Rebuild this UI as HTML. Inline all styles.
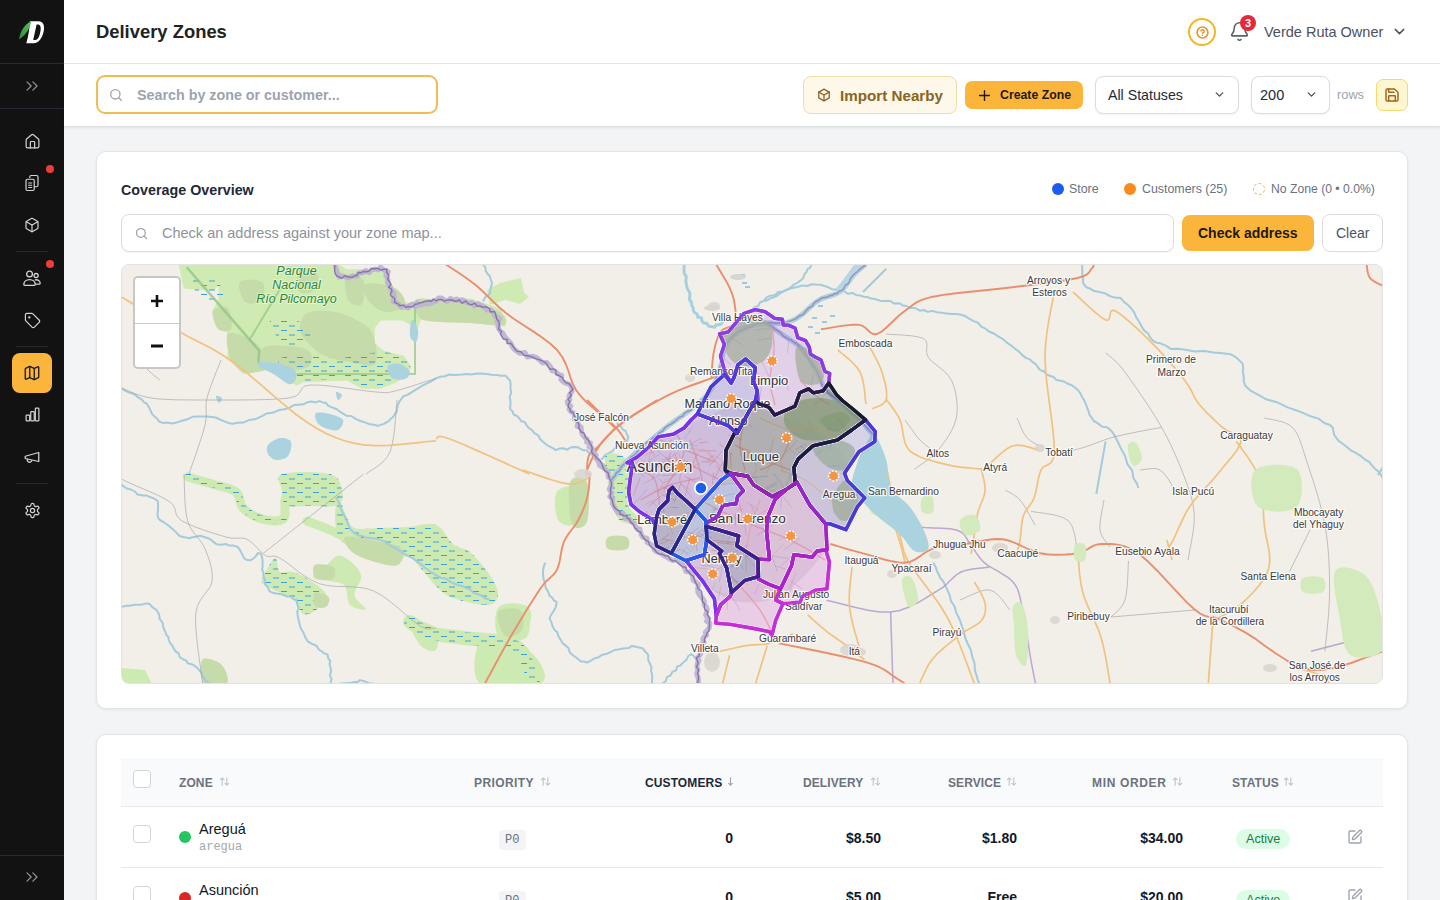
<!DOCTYPE html>
<html><head><meta charset="utf-8">
<style>
*{box-sizing:border-box;margin:0;padding:0}
html,body{width:1440px;height:900px;overflow:hidden}
body{background:#f3f4f6;font-family:"Liberation Sans",sans-serif;color:#111827;position:relative}
.abs{position:absolute}
#sb{left:0;top:0;width:64px;height:900px;background:#121212}
#sb .ln{position:absolute;left:0;width:64px;height:1px;background:#262b33}
#sb .sep{position:absolute;left:16px;width:32px;height:1px;background:#2a2a2a}
#sb svg{position:absolute}
#sb .dot{position:absolute;width:8px;height:8px;border-radius:50%;background:#ef3b3b}
#hdr{left:64px;top:0;width:1376px;height:64px;background:#fff;border-bottom:1px solid #e5e7eb}
#tb{left:64px;top:64px;width:1376px;height:63px;background:#fff;box-shadow:0 1px 3px rgba(0,0,0,.08);border-bottom:1px solid #dedfe2}
.t{position:absolute;white-space:nowrap;line-height:1}
.card{position:absolute;left:96px;width:1312px;background:#fff;border:1px solid #e3e5e9;border-radius:10px;box-shadow:0 1px 3px rgba(0,0,0,.07)}
.th{position:absolute;top:776.5px;font-weight:bold;font-size:12px;letter-spacing:.1px;color:#6b7280;line-height:12px}
.srt{position:absolute;top:775px}
.cb{position:absolute;left:133px;width:18px;height:18px;border:1px solid #d1d5db;border-radius:4px;background:#fff}
.num{position:absolute;font-weight:bold;font-size:14px;color:#111827;text-align:right;line-height:14px}
</style></head>
<body>
<!-- SIDEBAR -->
<div id="sb" class="abs">
  <svg style="left:17px;top:19px" width="30" height="28" viewBox="0 0 30 28">
    <defs><linearGradient id="lf" x1="0" y1="1" x2="1" y2="0"><stop offset="0" stop-color="#2e8b3a"/><stop offset="1" stop-color="#5cc060"/></linearGradient></defs>
    <path d="M13,2.3 L21.5,2.3 C26,2.3 27.6,6 26.9,11 C26,18 22,24.3 16.5,24.3 L9.3,24.3 C11.5,17 12.5,9 13,2.3 Z M16.2,21 L19.6,5.6 L20.8,5.6 C23.4,5.6 24,8.2 23.6,11 C23,16 21.3,21 18.2,21 Z" fill="#ffffff" fill-rule="evenodd"/>
    <path d="M2,20.5 C3,12.5 7.5,5 14.2,2.2 C13.2,8.5 9.5,15.5 2,20.5 Z" fill="url(#lf)"/>
  </svg>
  <div class="ln" style="top:63px"></div>
  <svg style="left:22px;top:76px" width="20" height="20" viewBox="0 0 24 24" fill="none" stroke="#8b93a1" stroke-width="1.5" stroke-linecap="round" stroke-linejoin="round"><path d="m6 17 5-5-5-5"/><path d="m13 17 5-5-5-5"/></svg>
  <div class="ln" style="top:108px"></div>

  <svg style="left:24px;top:133px" width="17" height="17" viewBox="0 0 24 24" fill="none" stroke="#d4d4d8" stroke-width="1.7" stroke-linecap="round" stroke-linejoin="round"><path d="M15 21v-8a1 1 0 0 0-1-1h-4a1 1 0 0 0-1 1v8"/><path d="M3 10a2 2 0 0 1 .709-1.528l7-5.999a2 2 0 0 1 2.582 0l7 5.999A2 2 0 0 1 21 10v9a2 2 0 0 1-2 2H5a2 2 0 0 1-2-2z"/></svg>
  <div class="dot" style="left:46px;top:165px"></div>
  <svg style="left:23px;top:174px" width="18" height="18" viewBox="0 0 24 24" fill="none" stroke="#d4d4d8" stroke-width="1.6" stroke-linecap="round" stroke-linejoin="round"><rect x="4" y="7" width="11" height="15" rx="2"/><path d="M9 4.5 V4 a2 2 0 0 1 2-2 h7 a2 2 0 0 1 2 2 v11 a2 2 0 0 1-2 2 h-3"/><path d="M7.5 12h4M7.5 15h4M7.5 18h4"/></svg>
  <svg style="left:24px;top:217px" width="16" height="16" viewBox="0 0 24 24" fill="none" stroke="#d4d4d8" stroke-width="1.8" stroke-linecap="round" stroke-linejoin="round"><path d="M21 8a2 2 0 0 0-1-1.73l-7-4a2 2 0 0 0-2 0l-7 4A2 2 0 0 0 3 8v8a2 2 0 0 0 1 1.73l7 4a2 2 0 0 0 2 0l7-4A2 2 0 0 0 21 16Z"/><path d="m3.3 7 8.7 5 8.7-5"/><path d="M12 22V12"/></svg>
  <div class="sep" style="top:251px"></div>
  <div class="dot" style="left:46px;top:260px"></div>
  <svg style="left:22px;top:269px" width="20" height="18" viewBox="0 0 24 22" fill="none" stroke="#d4d4d8" stroke-width="1.6" stroke-linecap="round" stroke-linejoin="round"><circle cx="9" cy="6" r="3.5"/><circle cx="17" cy="8" r="2.5"/><path d="M2 19c0-3.5 3-6 7-6s7 2.5 7 6c0 .8-.5 1-1 1H3c-.5 0-1-.2-1-1z"/><path d="M16 13.2c3-.5 6 1.3 6 4.3 0 .8-.5 1-1 1h-4"/></svg>
  <svg style="left:24px;top:312px" width="17" height="17" viewBox="0 0 24 24" fill="none" stroke="#d4d4d8" stroke-width="1.7" stroke-linecap="round" stroke-linejoin="round"><path d="M12.586 2.586A2 2 0 0 0 11.172 2H4a2 2 0 0 0-2 2v7.172a2 2 0 0 0 .586 1.414l8.704 8.704a2.426 2.426 0 0 0 3.42 0l6.58-6.58a2.426 2.426 0 0 0 0-3.42z"/><circle cx="7.5" cy="7.5" r=".8" fill="#d4d4d8"/></svg>
  <div class="sep" style="top:346px"></div>
  <div style="position:absolute;left:12px;top:353px;width:40px;height:40px;border-radius:8px;background:#fbb53b"></div>
  <svg style="left:23px;top:364px" width="18" height="18" viewBox="0 0 24 24" fill="none" stroke="#1f1f1f" stroke-width="1.8" stroke-linecap="round" stroke-linejoin="round"><path d="M14.106 5.553a2 2 0 0 0 1.788 0l3.659-1.83A1 1 0 0 1 21 4.619v12.764a1 1 0 0 1-.553.894l-4.553 2.277a2 2 0 0 1-1.788 0l-4.212-2.106a2 2 0 0 0-1.788 0l-3.659 1.83A1 1 0 0 1 3 19.381V6.618a1 1 0 0 1 .553-.894l4.553-2.277a2 2 0 0 1 1.788 0z"/><path d="M15 5.764v15"/><path d="M9 3.236v15"/></svg>
  <svg style="left:24px;top:406px" width="17" height="17" viewBox="0 0 24 24" fill="none" stroke="#d4d4d8" stroke-width="1.7" stroke-linecap="round" stroke-linejoin="round"><rect x="3" y="13" width="5" height="8" rx="1"/><rect x="9.5" y="8" width="5" height="13" rx="1"/><rect x="16" y="3" width="5" height="18" rx="1"/></svg>
  <svg style="left:23px;top:448px" width="18" height="18" viewBox="0 0 24 24" fill="none" stroke="#d4d4d8" stroke-width="1.7" stroke-linecap="round" stroke-linejoin="round"><path d="m3 11 18-5v12L3 14v-3z"/><path d="M11.6 16.8a3 3 0 1 1-5.8-1.6"/></svg>
  <div class="sep" style="top:483px"></div>
  <svg style="left:24px;top:502px" width="17" height="17" viewBox="0 0 24 24" fill="none" stroke="#d4d4d8" stroke-width="1.7" stroke-linecap="round" stroke-linejoin="round"><path d="M12.22 2h-.44a2 2 0 0 0-2 2v.18a2 2 0 0 1-1 1.730l-.43.25a2 2 0 0 1-2 0l-.15-.08a2 2 0 0 0-2.73.73l-.22.38a2 2 0 0 0 .73 2.73l.15.1a2 2 0 0 1 1 1.72v.51a2 2 0 0 1-1 1.74l-.15.09a2 2 0 0 0-.73 2.73l.22.38a2 2 0 0 0 2.73.73l.15-.08a2 2 0 0 1 2 0l.43.25a2 2 0 0 1 1 1.73V20a2 2 0 0 0 2 2h.44a2 2 0 0 0 2-2v-.18a2 2 0 0 1 1-1.73l.43-.25a2 2 0 0 1 2 0l.15.08a2 2 0 0 0 2.73-.73l.22-.39a2 2 0 0 0-.73-2.73l-.15-.08a2 2 0 0 1-1-1.74v-.5a2 2 0 0 1 1-1.74l.15-.09a2 2 0 0 0 .73-2.730l-.22-.38a2 2 0 0 0-2.73-.73l-.15.08a2 2 0 0 1-2 0l-.43-.25a2 2 0 0 1-1-1.73V4a2 2 0 0 0-2-2z"/><circle cx="12" cy="12" r="3"/></svg>
  <div class="ln" style="top:855px"></div>
  <svg style="left:22px;top:867px" width="20" height="20" viewBox="0 0 24 24" fill="none" stroke="#8b93a1" stroke-width="1.5" stroke-linecap="round" stroke-linejoin="round"><path d="m6 17 5-5-5-5"/><path d="m13 17 5-5-5-5"/></svg>
</div>
<!-- HEADER -->
<div id="hdr" class="abs"></div>
<div class="t" style="left:96px;top:23px;font-size:18.4px;font-weight:bold;color:#222">Delivery Zones</div>
<!-- TOOLBAR -->
<div id="tb" class="abs"></div>
<div class="abs" style="left:96px;top:75px;width:342px;height:39px;border:2px solid #f0bd55;border-radius:9px;background:#fff"></div>
<svg class="abs" style="left:108px;top:87px" width="16" height="16" viewBox="0 0 24 24" fill="none" stroke="#9ca3af" stroke-width="2" stroke-linecap="round" stroke-linejoin="round"><circle cx="11" cy="11" r="7"/><path d="m20 20-4-4"/></svg>
<div class="t" style="left:137px;top:88px;font-size:14.3px;font-weight:bold;color:#9ca3af">Search by zone or customer...</div>

<div class="abs" style="left:803px;top:76px;width:154px;height:38px;border:1px solid #f3dca6;border-radius:8px;background:#fef8eb"></div>
<svg class="abs" style="left:817px;top:88px" width="14" height="14" viewBox="0 0 24 24" fill="none" stroke="#8a6420" stroke-width="2.2" stroke-linecap="round" stroke-linejoin="round"><path d="M12 2 21 7v10l-9 5-9-5V7z"/><path d="m3 7 9 5 9-5"/><path d="M12 12v10"/></svg>
<div class="t" style="left:840px;top:87.5px;font-size:15.2px;font-weight:bold;color:#8a6420">Import Nearby</div>

<div class="abs" style="left:965px;top:81px;width:118px;height:28px;border-radius:7px;background:#fbb53b"></div>
<svg class="abs" style="left:978px;top:89px" width="13" height="13" viewBox="0 0 24 24" fill="none" stroke="#1f1a10" stroke-width="2.6" stroke-linecap="round"><path d="M12 3v18M3 12h18"/></svg>
<div class="t" style="left:1000px;top:89px;font-size:12.3px;font-weight:bold;color:#1f1a10">Create Zone</div>

<div class="abs" style="left:1095px;top:76px;width:144px;height:38px;border:1px solid #d9dce1;border-radius:8px;background:#fff;box-shadow:0 1px 2px rgba(0,0,0,.05)"></div>
<div class="t" style="left:1108px;top:88px;font-size:14.2px;color:#1f2937">All Statuses</div>
<svg class="abs" style="left:1213px;top:88px" width="13" height="13" viewBox="0 0 24 24" fill="none" stroke="#4b5563" stroke-width="2.6" stroke-linecap="round" stroke-linejoin="round"><path d="m6 9 6 6 6-6"/></svg>
<div class="abs" style="left:1251px;top:76px;width:79px;height:38px;border:1px solid #d9dce1;border-radius:8px;background:#fff;box-shadow:0 1px 2px rgba(0,0,0,.05)"></div>
<div class="t" style="left:1260px;top:88px;font-size:14.5px;color:#1f2937">200</div>
<svg class="abs" style="left:1305px;top:88px" width="13" height="13" viewBox="0 0 24 24" fill="none" stroke="#4b5563" stroke-width="2.6" stroke-linecap="round" stroke-linejoin="round"><path d="m6 9 6 6 6-6"/></svg>
<div class="t" style="left:1337px;top:89px;font-size:12.8px;color:#9ca3af">rows</div>
<div class="abs" style="left:1376px;top:79px;width:32px;height:32px;border:1px solid #f5d86e;border-radius:7px;background:#fef7d2"></div>
<svg class="abs" style="left:1384px;top:87px" width="16" height="16" viewBox="0 0 24 24" fill="none" stroke="#a0671c" stroke-width="2.2" stroke-linecap="round" stroke-linejoin="round"><path d="M15.2 3a2 2 0 0 1 1.4.6l3.8 3.8a2 2 0 0 1 .6 1.4V19a2 2 0 0 1-2 2H5a2 2 0 0 1-2-2V5a2 2 0 0 1 2-2z"/><path d="M17 21v-7a1 1 0 0 0-1-1H8a1 1 0 0 0-1 1v7"/><path d="M7 3v4a1 1 0 0 0 1 1h7"/></svg>

<div class="abs" style="left:1188px;top:18px;width:28px;height:28px;border:2px solid #f4b728;border-radius:50%"></div>
<svg class="abs" style="left:1195.5px;top:25.5px" width="13" height="13" viewBox="0 0 24 24" fill="none" stroke="#e3952a" stroke-width="2.9" stroke-linecap="round" stroke-linejoin="round"><circle cx="12" cy="12" r="10"/><path d="M9.09 9a3 3 0 0 1 5.83 1c0 2-3 3-3 3"/><path d="M12 17h.01"/></svg>
<svg class="abs" style="left:1229px;top:21px" width="21" height="21" viewBox="0 0 24 24" fill="none" stroke="#5b6170" stroke-width="1.8" stroke-linecap="round" stroke-linejoin="round"><path d="M10.268 21a2 2 0 0 0 3.464 0"/><path d="M3.262 15.326A1 1 0 0 0 4 17h16a1 1 0 0 0 .74-1.673C19.41 13.956 18 12.499 18 8A6 6 0 0 0 6 8c0 4.499-1.411 5.956-2.738 7.326"/></svg>
<div class="abs" style="left:1240px;top:15px;width:16px;height:16px;border-radius:50%;background:#e5283a;color:#fff;font-weight:bold;font-size:11px;line-height:16px;text-align:center">3</div>
<div class="t" style="left:1264px;top:24.8px;font-size:14.5px;color:#4b5160">Verde Ruta Owner</div>
<svg class="abs" style="left:1391px;top:23px" width="17" height="17" viewBox="0 0 24 24" fill="none" stroke="#4b5160" stroke-width="2" stroke-linecap="round" stroke-linejoin="round"><path d="m6 9 6 6 6-6"/></svg>

<div class="card" style="top:151px;height:558px"></div>
<div class="t" style="left:121px;top:183px;font-size:14.3px;font-weight:bold;color:#1f2937">Coverage Overview</div>
<div class="abs" style="left:1052px;top:183px;width:12px;height:12px;border-radius:50%;background:#1d5bf0"></div>
<div class="t" style="left:1069px;top:183px;font-size:12.4px;color:#6b7280">Store</div>
<div class="abs" style="left:1124px;top:183px;width:12px;height:12px;border-radius:50%;background:#f98a1c"></div>
<div class="t" style="left:1142px;top:183px;font-size:12.4px;color:#6b7280">Customers (25)</div>
<div class="abs" style="left:1253px;top:183px;width:12px;height:12px;border-radius:50%;border:1px dashed #f2b36b"></div>
<div class="t" style="left:1271px;top:183px;font-size:12.2px;color:#6b7280">No Zone (0 • 0.0%)</div>

<div class="abs" style="left:121px;top:214px;width:1053px;height:38px;border:1px solid #d9dce1;border-radius:8px;background:#fff;box-shadow:0 1px 2px rgba(0,0,0,.04)"></div>
<svg class="abs" style="left:134px;top:226px" width="15" height="15" viewBox="0 0 24 24" fill="none" stroke="#9ca3af" stroke-width="2" stroke-linecap="round" stroke-linejoin="round"><circle cx="11" cy="11" r="7"/><path d="m20 20-4-4"/></svg>
<div class="t" style="left:162px;top:226px;font-size:14.5px;color:#8d939c">Check an address against your zone map...</div>
<div class="abs" style="left:1182px;top:215px;width:132px;height:36px;border-radius:8px;background:#fbb53b"></div>
<div class="t" style="left:1198px;top:226px;font-size:14px;font-weight:bold;color:#1f1a10">Check address</div>
<div class="abs" style="left:1322px;top:214px;width:61px;height:38px;border:1px solid #d9dce1;border-radius:8px;background:#fff"></div>
<div class="t" style="left:1336px;top:226px;font-size:14px;color:#4b5563">Clear</div>
<div id="map" class="abs" style="left:121px;top:264px;width:1262px;height:420px;border-radius:8px;overflow:hidden;background:#f2efe9;border:1px solid #e2e2e2">
<svg width="1262" height="420" viewBox="121 264 1262 420" style="position:absolute;left:-1px;top:-1px;font-family:'Liberation Sans',sans-serif"><defs>
<pattern id="wet" width="16" height="9" patternUnits="userSpaceOnUse"><rect width="16" height="9" fill="#cdeab2"/><path d="M1 2h6M9 6.5h6" stroke="#3e9fd8" stroke-width="1.1"/></pattern>
<pattern id="wet2" width="16" height="9" patternUnits="userSpaceOnUse"><rect width="16" height="9" fill="#cdeab2" fill-opacity="0"/><path d="M1 2h6M9 6.5h6" stroke="#3e9fd8" stroke-width="1.1"/></pattern>
</defs><rect x="121" y="264" width="1262" height="420" fill="#f2efe9"/><path d="M180.0,264.0 L335.0,264.0 L346.7,270.7 L385.0,270.7 L390.0,284.0 L400.0,302.3 L420.0,307.3 L436.0,300.0 L470.0,300.0 L500.0,310.0 L504.0,325.0 L480.0,322.0 L440.0,320.0 L420.0,318.0 L416.7,327.3 L403.3,319.0 L380.0,319.0 L373.3,327.3 L373.3,344.0 L383.3,352.3 L403.3,357.3 L410.0,367.3 L396.7,380.7 L380.0,387.3 L363.3,387.3 L346.7,379.0 L303.3,380.7 L296.7,384.0 L283.3,374.0 L266.7,367.3 L256.7,370.7 L243.3,372.3 L228.3,357.3 L230.0,350.7 L228.3,330.7 L213.3,312.3 L220.0,300.0 L220.0,280.7 L213.3,289.0 L185.0,287.3Z" fill="#cfeab3" stroke="#cfeab3" stroke-width="3" stroke-linejoin="round"/><path d="M213.0,311.0 L214.5,309.4 L217.0,308.0 L220.0,307.1 L223.1,306.7 L226.0,306.9 L228.0,308.0 L229.4,310.4 L230.5,314.0 L231.2,318.3 L231.6,322.7 L231.6,326.4 L231.0,329.0 L229.7,330.4 L227.6,331.2 L225.0,331.4 L222.3,331.1 L219.9,330.3 L218.0,329.0 L216.5,326.9 L215.0,323.8 L213.8,320.2 L212.9,316.6 L212.6,313.3Z" fill="#c5dba9"/><path d="M228.0,334.0 L230.1,333.0 L233.3,333.0 L237.0,333.8 L241.0,335.1 L244.8,336.6 L248.0,338.0 L250.8,339.5 L253.4,341.2 L255.9,343.1 L258.2,345.3 L260.3,347.6 L262.0,350.0 L263.5,352.8 L264.9,356.1 L266.1,359.5 L266.9,362.8 L267.2,365.7 L267.0,368.0 L266.1,369.5 L264.6,370.5 L262.6,371.1 L260.4,371.5 L258.1,371.7 L256.0,372.0 L253.9,372.4 L251.8,372.9 L249.6,373.2 L247.4,373.3 L245.2,372.9 L243.0,372.0 L240.7,370.5 L238.3,368.4 L235.8,365.9 L233.5,363.1 L231.5,360.1 L230.0,357.0 L228.8,353.3 L227.7,348.9 L226.9,344.3 L226.6,340.0 L226.9,336.4Z" fill="#c5dba9"/><path d="M307.0,313.0 L310.5,311.8 L314.9,311.1 L319.9,310.8 L325.1,310.9 L330.3,311.3 L335.0,312.0 L339.5,313.0 L344.0,314.4 L348.4,316.1 L352.7,318.0 L356.6,320.0 L360.0,322.0 L363.0,323.8 L365.6,325.5 L367.9,327.3 L369.9,329.4 L371.6,331.9 L373.0,335.0 L374.3,339.3 L375.5,344.6 L376.4,350.4 L376.7,356.0 L376.4,360.8 L375.0,364.0 L372.4,365.5 L368.7,365.8 L364.2,365.2 L359.3,364.1 L354.5,362.9 L350.0,362.0 L345.7,361.3 L341.3,360.5 L336.9,359.6 L332.6,358.5 L328.6,357.3 L325.0,356.0 L321.9,354.5 L319.1,352.9 L316.6,351.1 L314.3,349.1 L312.1,347.1 L310.0,345.0 L307.8,342.8 L305.7,340.4 L303.6,337.9 L301.9,335.3 L300.6,332.7 L300.0,330.0 L299.9,327.1 L300.3,323.9 L301.1,320.6 L302.5,317.6 L304.4,314.9Z" fill="#c5dba9"/><path d="M263.0,348.0 L265.8,346.6 L270.0,345.8 L275.1,345.4 L280.4,345.4 L285.6,345.7 L290.0,346.0 L294.0,346.4 L298.0,347.1 L301.8,347.9 L305.2,349.0 L308.0,350.4 L310.0,352.0 L311.2,354.1 L311.7,356.8 L311.7,359.7 L311.0,362.6 L309.8,365.1 L308.0,367.0 L305.3,368.3 L301.7,369.1 L297.6,369.6 L293.1,369.9 L288.8,370.0 L285.0,370.0 L281.4,370.0 L277.8,370.0 L274.2,369.9 L271.0,369.4 L268.2,368.5 L266.0,367.0 L264.2,364.6 L262.7,361.2 L261.6,357.4 L261.2,353.7 L261.6,350.4Z" fill="#c5dba9"/><path d="M346.0,276.0 L347.9,274.8 L350.9,274.5 L354.4,275.0 L358.0,276.1 L361.0,277.9 L363.0,280.0 L364.0,283.2 L364.5,287.6 L364.4,292.5 L364.0,297.3 L363.1,301.4 L362.0,304.0 L360.3,305.2 L357.9,305.5 L355.1,305.0 L352.3,303.9 L349.8,302.1 L348.0,300.0 L346.8,296.8 L345.7,292.4 L345.1,287.5 L344.8,282.7 L345.1,278.6Z" fill="#c5dba9"/><path d="M365.0,284.0 L368.3,283.4 L373.3,283.4 L379.2,283.9 L385.3,285.0 L390.8,286.3 L395.0,288.0 L398.2,290.2 L400.9,293.1 L403.1,296.3 L404.6,299.6 L405.3,302.6 L405.0,305.0 L403.4,307.0 L400.4,308.8 L396.7,310.3 L392.6,311.4 L388.5,312.0 L385.0,312.0 L381.8,311.1 L378.6,309.6 L375.4,307.4 L372.5,305.0 L370.0,302.5 L368.0,300.0 L366.3,297.3 L364.7,294.2 L363.6,291.0 L363.0,288.0 L363.4,285.6Z" fill="#c5dba9"/><path d="M300.0,268.0 L302.4,267.2 L305.7,267.5 L309.5,268.5 L313.2,270.1 L316.2,272.0 L318.0,274.0 L318.5,276.5 L318.1,279.9 L317.0,283.5 L315.5,287.0 L313.7,290.0 L312.0,292.0 L309.9,293.1 L307.3,293.6 L304.5,293.5 L301.8,292.9 L299.5,291.7 L298.0,290.0 L297.2,287.2 L296.9,283.1 L297.0,278.5 L297.6,274.0 L298.6,270.3Z" fill="#c5dba9"/><path d="M415.0,300.0 L417.4,298.9 L420.9,298.6 L425.3,298.7 L430.2,299.1 L435.2,299.6 L440.0,300.0 L444.7,300.3 L449.6,300.6 L454.7,300.9 L459.8,301.4 L464.9,302.1 L470.0,303.0 L475.3,304.1 L481.0,305.4 L486.6,306.9 L491.9,308.5 L496.5,310.2 L500.0,312.0 L502.6,314.1 L504.7,316.6 L506.0,319.2 L506.4,321.6 L505.8,323.7 L504.0,325.0 L500.5,325.5 L495.3,325.4 L489.1,324.9 L482.4,324.1 L475.9,323.4 L470.0,323.0 L464.7,322.8 L459.3,322.7 L454.1,322.6 L449.1,322.5 L444.4,322.3 L440.0,322.0 L435.9,321.7 L432.0,321.4 L428.4,321.1 L425.2,320.5 L422.3,319.5 L420.0,318.0 L418.0,315.6 L416.1,312.4 L414.7,308.8 L413.9,305.2 L413.9,302.1Z" fill="#c5dba9"/><path d="M240.0,282.0 L242.4,280.6 L246.1,279.9 L250.7,279.6 L255.3,279.9 L259.3,280.7 L262.0,282.0 L263.5,284.1 L264.3,287.3 L264.4,290.9 L264.1,294.5 L263.2,297.7 L262.0,300.0 L260.0,301.5 L257.1,302.7 L253.8,303.4 L250.4,303.6 L247.3,303.1 L245.0,302.0 L243.2,299.7 L241.4,296.2 L240.1,292.1 L239.2,288.0 L239.1,284.4Z" fill="#c5dba9"/><path d="M278.0,360.0 L279.5,358.5 L282.1,357.4 L285.8,356.8 L290.1,356.4 L294.9,356.2 L300.0,356.0 L305.6,356.1 L312.0,356.5 L318.9,357.1 L326.0,357.7 L333.1,358.1 L340.0,358.0 L346.9,357.3 L354.0,356.2 L361.1,354.8 L367.9,353.5 L374.3,352.5 L380.0,352.0 L385.0,352.1 L389.5,352.7 L393.6,353.5 L397.1,354.6 L400.3,355.8 L403.0,357.0 L405.3,358.3 L407.3,359.8 L408.8,361.4 L409.8,363.2 L410.2,365.0 L410.0,367.0 L408.9,369.2 L407.0,371.7 L404.4,374.2 L401.6,376.8 L398.7,379.1 L396.0,381.0 L393.5,382.5 L390.9,383.8 L388.2,384.9 L385.5,385.7 L382.7,386.4 L380.0,387.0 L377.2,387.4 L374.4,387.7 L371.6,387.9 L368.7,387.8 L365.8,387.5 L363.0,387.0 L360.5,386.0 L358.3,384.6 L356.1,382.9 L353.6,381.2 L350.3,379.8 L346.0,379.0 L340.0,378.8 L332.5,379.1 L324.2,379.7 L316.1,380.3 L308.7,380.8 L303.0,381.0 L299.1,381.0 L296.4,380.9 L294.6,380.8 L293.1,380.3 L291.8,379.4 L290.0,378.0 L287.5,375.7 L284.7,372.6 L281.8,369.1 L279.4,365.5 L278.0,362.4Z" fill="url(#wet2)"/><path d="M190.0,280.0 L192.0,278.6 L195.9,277.8 L200.9,277.5 L206.3,277.8 L211.2,278.6 L215.0,280.0 L217.9,282.4 L220.6,285.9 L222.8,290.0 L224.4,294.1 L225.2,297.6 L225.0,300.0 L223.3,301.4 L220.4,302.2 L216.6,302.5 L212.4,302.2 L208.4,301.4 L205.0,300.0 L201.7,297.6 L198.1,294.1 L194.7,290.0 L191.9,285.9 L190.1,282.4Z" fill="url(#wet2)"/><path d="M270.0,320.0 L272.6,318.6 L277.4,318.1 L283.4,318.3 L289.8,319.1 L295.6,320.4 L300.0,322.0 L303.2,324.2 L306.1,327.3 L308.4,330.8 L310.0,334.4 L310.6,337.6 L310.0,340.0 L307.7,341.9 L303.9,343.7 L299.1,345.2 L293.9,346.0 L289.0,346.1 L285.0,345.0 L281.4,342.3 L277.6,337.9 L274.1,332.7 L271.3,327.4 L269.8,323.0Z" fill="url(#wet2)"/><path d="M186.7,267.3 L259.2,350.7 L258.3,364" stroke="#92c583" stroke-width="2.5" fill="none" opacity=".8"/><path d="M250,339 L280,289" stroke="#92c583" stroke-width="2" fill="none" opacity=".7"/><path d="M296.7,374 L415,374 L415,307.3" stroke="#92c583" stroke-width="2" fill="none" opacity=".7"/><path d="M258.3,362.3 L260.6,362.1 L264.0,362.2 L268.1,362.4 L272.4,362.8 L276.5,363.3 L280.0,364.0 L283.1,364.8 L286.1,365.7 L288.9,366.8 L291.4,368.0 L293.4,369.3 L295.0,370.7 L295.9,372.3 L296.4,374.0 L296.4,375.9 L296.1,377.7 L295.6,379.4 L295.0,380.7 L294.4,381.8 L293.6,382.8 L292.6,383.6 L291.4,384.1 L290.0,384.3 L288.3,384.0 L286.3,383.1 L283.9,381.5 L281.2,379.6 L278.5,377.6 L275.8,375.6 L273.3,374.0 L270.9,372.7 L268.3,371.5 L265.8,370.3 L263.5,369.3 L261.5,368.3 L260.0,367.3 L258.8,366.3 L257.7,365.3 L257.0,364.3 L256.7,363.4 L257.1,362.7Z" fill="#aad3df"/><path d="M388.0,366.0 L389.1,365.0 L390.9,364.2 L393.1,363.8 L395.6,363.6 L397.9,363.6 L400.0,364.0 L402.0,364.8 L404.0,366.0 L406.1,367.4 L407.9,369.0 L409.2,370.6 L410.0,372.0 L410.1,373.3 L409.7,374.7 L408.9,376.1 L407.8,377.3 L406.5,378.3 L405.0,379.0 L403.2,379.4 L400.9,379.7 L398.4,379.7 L396.0,379.4 L393.7,378.9 L392.0,378.0 L390.6,376.5 L389.4,374.4 L388.4,372.1 L387.8,369.7 L387.6,367.5Z" fill="#aad3df"/><path d="M268.0,445.0 L269.3,443.6 L271.1,442.1 L273.3,440.7 L275.6,439.4 L277.9,438.5 L280.0,438.0 L282.1,437.9 L284.3,438.1 L286.4,438.7 L288.4,439.5 L290.0,440.6 L291.0,442.0 L291.4,443.9 L291.4,446.3 L290.9,449.0 L290.2,451.7 L289.2,454.1 L288.0,456.0 L286.5,457.4 L284.5,458.4 L282.3,459.2 L280.0,459.8 L277.9,460.0 L276.0,460.0 L274.3,459.6 L272.7,458.9 L271.2,457.8 L269.9,456.6 L268.8,455.3 L268.0,454.0 L267.4,452.7 L267.0,451.1 L266.8,449.6 L266.8,448.0 L267.2,446.4Z" fill="#aad3df"/><path d="M316.0,413.0 L317.5,412.5 L319.6,412.4 L322.1,412.6 L324.9,412.9 L327.6,413.4 L330.0,414.0 L332.4,414.7 L335.1,415.5 L337.7,416.4 L340.0,417.5 L341.9,418.7 L343.0,420.0 L343.3,421.6 L343.0,423.5 L342.1,425.5 L340.9,427.4 L339.5,429.0 L338.0,430.0 L336.2,430.4 L334.1,430.4 L331.7,430.0 L329.3,429.4 L327.0,428.7 L325.0,428.0 L323.3,427.3 L321.7,426.4 L320.2,425.4 L319.0,424.4 L317.9,423.2 L317.0,422.0 L316.3,420.6 L315.6,418.9 L315.1,417.1 L315.0,415.4 L315.2,414.0Z" fill="#aad3df"/><path d="M412.0,320.0 L412.9,320.1 L414.0,321.3 L415.2,323.2 L416.4,325.6 L417.4,327.9 L418.0,330.0 L418.2,332.1 L418.1,334.5 L417.8,337.0 L417.3,339.3 L416.7,341.0 L416.0,342.0 L415.1,342.2 L414.0,341.7 L412.8,340.8 L411.6,339.4 L410.6,337.8 L410.0,336.0 L409.8,333.6 L409.9,330.4 L410.2,327.0 L410.7,323.8 L411.3,321.3Z" fill="#aad3df"/><path d="M336.0,392.0 L336.7,391.8 L337.8,392.1 L339.1,392.7 L340.4,393.4 L341.5,394.3 L342.0,395.0 L341.9,395.9 L341.3,397.0 L340.5,398.2 L339.6,399.2 L338.7,399.9 L338.0,400.0 L337.5,399.3 L336.9,397.9 L336.4,396.1 L336.0,394.3 L335.8,392.8Z" fill="#aad3df"/><path d="M216.0,396.0 L216.6,395.8 L217.7,395.9 L219.0,396.2 L220.3,396.8 L221.4,397.4 L222.0,398.0 L222.0,398.8 L221.7,399.9 L221.1,401.1 L220.3,402.1 L219.6,402.8 L219.0,403.0 L218.4,402.4 L217.7,401.2 L216.9,399.7 L216.3,398.1 L216.0,396.8Z" fill="#aad3df"/><path d="M487.0,290.0 L500.0,283.0 L521.0,278.0 L524.0,292.0 L529.0,297.0 L520.0,304.0 L505.0,300.0 L490.0,305.0Z" fill="#cfeab3"/><path d="M188.0,477.0 L190.6,477.7 L194.2,478.8 L198.5,480.0 L203.1,481.3 L207.7,482.7 L212.0,484.0 L216.2,485.2 L220.6,486.3 L225.1,487.4 L229.3,488.7 L233.0,490.2 L236.0,492.0 L238.0,494.3 L239.1,496.9 L239.8,499.8 L240.4,502.7 L241.3,505.5 L243.0,508.0 L245.4,510.2 L248.4,512.4 L251.6,514.5 L255.1,516.3 L258.6,517.9 L262.0,519.0 L265.6,519.9 L269.6,520.5 L273.6,520.9 L277.3,520.8 L280.6,520.2 L283.0,519.0 L284.4,516.9 L285.0,514.0 L285.0,510.5 L284.8,506.8 L284.7,503.2 L285.0,500.0 L285.7,497.0 L286.6,493.9 L287.6,490.8 L288.6,488.0 L289.4,485.7 L290.0,484.0" stroke="#cdeab2" stroke-width="9" fill="none" stroke-linecap="round" stroke-linejoin="round"/><path d="M282.0,474.0 L287.6,472.9 L295.8,472.2 L305.2,472.0 L314.9,472.2 L323.5,472.9 L330.0,474.0 L334.3,475.8 L337.3,478.2 L339.2,481.1 L340.5,484.1 L341.3,487.2 L342.0,490.0 L342.5,492.7 L342.7,495.6 L342.5,498.4 L341.7,501.1 L340.2,503.3 L338.0,505.0 L334.7,506.0 L330.3,506.4 L325.2,506.5 L319.9,506.3 L314.7,506.1 L310.0,506.0 L305.5,506.1 L301.0,506.3 L296.5,506.5 L292.4,506.4 L288.8,506.0 L286.0,505.0 L284.1,503.3 L283.0,501.1 L282.5,498.4 L282.3,495.6 L282.2,492.7 L282.0,490.0 L281.2,487.2 L279.9,484.1 L278.8,481.1 L278.3,478.2 L279.2,475.8Z" fill="#cdeab2"/><path d="M338.0,497.0 L339.0,497.7 L340.3,500.1 L341.7,503.8 L343.1,507.9 L344.6,511.8 L346.0,515.0 L347.1,517.6 L348.1,520.2 L349.0,522.6 L350.1,524.8 L351.7,526.6 L354.0,528.0 L357.0,528.8 L360.6,529.0 L364.6,528.9 L369.0,528.6 L373.5,528.2 L378.0,528.0 L382.7,527.9 L387.6,527.8 L392.8,527.6 L397.9,527.4 L403.0,527.2 L408.0,527.0 L412.9,526.5 L417.9,525.6 L422.8,524.8 L427.6,524.1 L432.0,524.1 L436.0,525.0 L439.5,527.1 L442.4,530.1 L445.1,533.8 L447.7,537.6 L450.2,541.2 L453.0,544.0 L455.9,545.9 L458.9,547.2 L461.8,548.2 L464.8,549.3 L467.9,550.7 L471.0,553.0 L474.4,556.2 L478.0,560.1 L481.7,564.4 L485.2,568.9 L488.4,573.2 L491.0,577.0 L493.1,580.4 L494.9,583.7 L496.4,586.9 L497.4,589.8 L498.0,592.5 L498.0,595.0 L497.6,597.3 L496.9,599.6 L495.6,601.6 L493.8,603.2 L491.3,604.4 L488.0,605.0 L483.4,604.9 L477.5,604.1 L470.9,602.9 L464.3,601.3 L458.1,599.7 L453.0,598.0 L449.1,596.3 L445.8,594.4 L443.1,592.4 L440.6,590.3 L438.3,588.2 L436.0,586.0 L433.8,583.8 L431.8,581.6 L429.9,579.2 L428.1,576.9 L426.2,574.5 L424.0,572.0 L421.5,569.2 L418.8,566.0 L416.0,562.7 L413.2,559.7 L410.5,557.4 L408.0,556.0 L405.9,556.0 L404.1,557.1 L402.4,558.9 L400.7,560.9 L398.6,562.4 L396.0,563.0 L392.8,562.6 L389.0,561.7 L384.9,560.4 L380.8,558.9 L376.7,557.3 L373.0,556.0 L369.5,554.9 L366.2,553.8 L362.9,552.7 L359.8,551.6 L356.8,550.3 L354.0,549.0 L351.3,547.6 L348.6,546.2 L346.1,544.8 L343.8,543.1 L341.8,541.2 L340.0,539.0 L338.6,536.4 L337.4,533.5 L336.4,530.3 L335.7,527.0 L335.3,523.5 L335.0,520.0 L335.0,515.9 L335.2,511.1 L335.7,506.2 L336.3,501.8 L337.1,498.5Z" fill="#cdeab2"/><path d="M307.0,521.0 L309.6,522.0 L313.2,523.4 L317.5,525.0 L322.0,526.7 L326.3,528.5 L330.0,530.0 L333.3,531.5 L336.4,533.0 L339.4,534.6 L342.1,536.0 L344.3,537.1 L346.0,538.0" stroke="#cdeab2" stroke-width="9" fill="none" stroke-linecap="round" stroke-linejoin="round"/><path d="M275.0,558.0 L276.1,558.5 L276.8,560.6 L277.3,563.7 L277.7,567.1 L278.5,570.1 L279.7,572.0 L281.4,572.7 L283.4,572.6 L285.7,572.1 L288.2,571.7 L290.9,571.5 L293.7,572.0 L296.9,573.3 L300.5,575.0 L304.4,577.1 L308.1,579.4 L311.7,581.6 L314.7,583.7 L317.4,585.6 L320.0,587.5 L322.4,589.4 L324.3,591.3 L325.7,593.2 L326.3,595.3 L326.0,597.6 L324.9,600.1 L323.2,602.7 L321.2,605.2 L319.1,607.5 L317.0,609.3 L314.9,610.8 L312.5,612.2 L310.0,613.4 L307.5,614.2 L305.1,614.4 L303.0,614.0 L301.4,612.7 L300.2,610.7 L299.2,608.2 L298.0,605.4 L296.3,602.5 L293.7,600.0 L289.8,597.6 L284.8,595.1 L279.3,592.6 L273.9,590.1 L269.2,587.9 L265.7,586.0 L263.5,584.6 L262.1,583.7 L261.4,582.9 L261.3,582.1 L261.6,580.9 L262.2,579.0 L263.5,575.9 L265.6,571.7 L268.1,567.2 L270.7,562.9 L273.1,559.6Z" fill="#cdeab2"/><path d="M314.7,572.0 L316.0,570.9 L317.7,569.8 L319.8,568.6 L322.0,567.5 L324.2,566.3 L326.3,565.0 L328.2,563.4 L330.1,561.5 L332.0,559.5 L333.9,557.7 L335.9,556.3 L338.0,555.7 L340.3,555.8 L342.7,556.6 L345.1,557.7 L347.6,559.2 L349.9,560.9 L352.0,562.7 L354.0,564.6 L356.1,566.7 L358.0,569.0 L359.6,571.4 L360.7,574.0 L361.3,576.7 L360.9,579.6 L359.5,582.7 L357.6,586.0 L355.9,589.3 L354.6,592.4 L354.3,595.3 L355.5,598.1 L357.9,601.0 L360.7,603.7 L363.5,606.2 L365.5,608.1 L366.0,609.3 L364.8,609.8 L362.2,609.7 L358.9,609.0 L355.3,608.0 L352.1,606.5 L349.7,604.7 L348.4,602.2 L347.6,599.0 L347.2,595.4 L346.8,591.7 L346.2,588.5 L345.0,586.0 L343.2,584.4 L341.1,583.3 L338.7,582.6 L336.2,582.2 L333.6,581.8 L331.0,581.3 L328.2,580.8 L325.1,580.5 L322.0,580.3 L319.0,580.0 L316.5,579.6 L314.7,579.0 L313.6,578.1 L313.1,577.0 L313.0,575.8 L313.2,574.5 L313.8,573.2Z" fill="#cdeab2"/><path d="M410.0,622.0 L412.0,623.3 L414.6,625.1 L417.8,627.2 L421.5,629.4 L425.6,631.4 L430.0,633.0 L435.0,634.2 L440.6,635.1 L446.6,635.9 L452.8,636.6 L459.0,637.3 L465.0,638.0 L471.0,638.7 L477.1,639.2 L483.3,639.7 L489.3,640.3 L494.9,641.0 L500.0,642.0 L504.5,643.1 L508.7,644.1 L512.4,645.2 L515.9,646.8 L519.1,649.0 L522.0,652.0 L524.7,656.4 L527.2,662.2 L529.4,668.6 L531.3,674.9 L532.8,680.3 L534.0,684.0" stroke="#cdeab2" stroke-width="14" fill="none" stroke-linecap="round" stroke-linejoin="round"/><path d="M498.5,608.9 L501.8,607.1 L506.6,605.7 L512.2,604.7 L517.8,604.4 L522.8,604.6 L526.3,605.4 L528.6,607.1 L530.1,609.5 L531.0,612.6 L531.3,616.0 L530.8,619.5 L529.7,622.8 L527.5,626.5 L524.2,630.8 L520.2,635.1 L516.0,639.1 L512.1,642.1 L508.9,643.6 L506.4,643.4 L504.1,641.9 L502.1,639.4 L500.4,636.4 L499.0,633.1 L498.0,630.0 L497.1,626.7 L496.3,622.9 L495.8,618.8 L495.9,614.9 L496.7,611.5Z" fill="#cdeab2"/><path d="M557.5,490.8 L560.8,488.5 L565.7,486.7 L571.4,485.6 L577.1,485.3 L582.0,485.9 L585.3,487.4 L587.1,490.4 L587.9,495.0 L587.9,500.4 L587.4,506.0 L586.4,511.1 L585.3,515.1 L583.8,518.0 L581.7,520.5 L579.2,522.5 L576.5,524.0 L573.9,525.1 L571.4,525.6 L568.9,525.7 L566.3,525.3 L563.6,524.5 L561.1,523.1 L559.0,521.2 L557.5,518.6 L556.4,514.9 L555.4,510.0 L554.9,504.5 L554.9,499.0 L555.7,494.3Z" fill="#cdeab2"/><path d="M498.7,607.0 L502.1,604.9 L507.0,603.6 L512.6,603.2 L518.3,603.6 L523.2,604.9 L526.6,607.0 L528.5,610.6 L529.7,616.0 L530.1,622.1 L529.7,628.3 L528.5,633.7 L526.6,637.3 L523.2,639.4 L518.3,640.7 L512.7,641.1 L507.0,640.7 L502.1,639.4 L498.7,637.3 L496.8,633.7 L495.6,628.3 L495.2,622.1 L495.6,616.0 L496.8,610.6Z" fill="#cdeab2"/><path d="M480.0,640.0 L483.3,637.2 L487.9,636.0 L493.2,636.0 L499.0,636.9 L504.8,638.3 L510.0,640.0 L515.1,642.1 L520.4,645.0 L525.8,648.5 L530.7,652.3 L534.9,656.2 L538.0,660.0 L540.6,664.0 L542.9,668.6 L544.5,673.2 L544.9,677.6 L543.6,681.3 L540.0,684.0 L532.9,685.9 L522.4,687.4 L510.1,688.2 L497.9,688.1 L487.2,686.8 L480.0,684.0 L476.2,678.7 L474.4,671.0 L474.4,662.0 L475.6,653.0 L477.6,645.3Z" fill="#cdeab2"/><path d="M121.0,668.0 L145.0,670.0 L152.0,684.0 L121.0,684.0Z" fill="#cdeab2"/><path d="M410.0,621.0 L412.6,620.2 L417.0,620.5 L422.4,621.6 L427.9,623.4 L432.8,625.6 L436.0,628.0 L437.7,631.1 L438.5,635.2 L438.6,639.8 L438.1,644.1 L437.2,647.7 L436.0,650.0 L434.2,650.9 L431.6,651.0 L428.6,650.4 L425.5,649.1 L422.5,647.2 L420.0,645.0 L417.6,641.7 L414.9,637.3 L412.4,632.2 L410.4,627.4 L409.5,623.4Z" fill="#cdeab2"/><path d="M188.0,477.0 L190.6,477.7 L194.2,478.8 L198.5,480.0 L203.1,481.3 L207.7,482.7 L212.0,484.0 L216.2,485.2 L220.6,486.3 L225.1,487.4 L229.3,488.7 L233.0,490.2 L236.0,492.0 L238.0,494.3 L239.1,496.9 L239.8,499.8 L240.4,502.7 L241.3,505.5 L243.0,508.0 L245.4,510.2 L248.4,512.4 L251.6,514.5 L255.1,516.3 L258.6,517.9 L262.0,519.0 L265.6,519.6 L269.6,519.8 L273.7,519.7 L277.5,519.4 L280.7,519.1 L283.0,519.0" stroke="url(#wet2)" stroke-width="7" fill="none" stroke-linecap="round"/><path d="M410.0,622.0 L412.0,623.3 L414.6,625.1 L417.8,627.2 L421.5,629.4 L425.6,631.4 L430.0,633.0 L435.0,634.2 L440.6,635.1 L446.6,635.9 L452.8,636.6 L459.0,637.3 L465.0,638.0 L471.0,638.7 L477.1,639.2 L483.3,639.7 L489.3,640.3 L494.9,641.0 L500.0,642.0 L504.5,643.1 L508.7,644.1 L512.4,645.2 L515.9,646.8 L519.1,649.0 L522.0,652.0 L524.7,656.4 L527.2,662.2 L529.4,668.6 L531.3,674.9 L532.8,680.3 L534.0,684.0" stroke="url(#wet2)" stroke-width="12" fill="none" stroke-linecap="round"/><path d="M282.0,474.0 L287.6,472.9 L295.8,472.2 L305.2,472.0 L314.9,472.2 L323.5,472.9 L330.0,474.0 L334.3,475.8 L337.3,478.2 L339.2,481.1 L340.5,484.1 L341.3,487.2 L342.0,490.0 L342.5,492.7 L342.7,495.6 L342.5,498.4 L341.7,501.1 L340.2,503.3 L338.0,505.0 L334.7,506.0 L330.3,506.4 L325.2,506.5 L319.9,506.3 L314.7,506.1 L310.0,506.0 L305.5,506.1 L301.0,506.3 L296.5,506.5 L292.4,506.4 L288.8,506.0 L286.0,505.0 L284.1,503.3 L283.0,501.1 L282.5,498.4 L282.3,495.6 L282.2,492.7 L282.0,490.0 L281.2,487.2 L279.9,484.1 L278.8,481.1 L278.3,478.2 L279.2,475.8Z" fill="url(#wet2)"/><path d="M338.0,497.0 L339.0,497.7 L340.3,500.1 L341.7,503.8 L343.1,507.9 L344.6,511.8 L346.0,515.0 L347.1,517.6 L348.1,520.2 L349.0,522.6 L350.1,524.8 L351.7,526.6 L354.0,528.0 L357.0,528.8 L360.6,529.0 L364.6,528.9 L369.0,528.6 L373.5,528.2 L378.0,528.0 L382.7,527.9 L387.6,527.8 L392.8,527.6 L397.9,527.4 L403.0,527.2 L408.0,527.0 L412.9,526.5 L417.9,525.6 L422.8,524.8 L427.6,524.1 L432.0,524.1 L436.0,525.0 L439.5,527.1 L442.4,530.1 L445.1,533.8 L447.7,537.6 L450.2,541.2 L453.0,544.0 L455.9,545.9 L458.9,547.2 L461.8,548.2 L464.8,549.3 L467.9,550.7 L471.0,553.0 L474.4,556.2 L478.0,560.1 L481.7,564.4 L485.2,568.9 L488.4,573.2 L491.0,577.0 L493.1,580.4 L494.9,583.7 L496.4,586.9 L497.4,589.8 L498.0,592.5 L498.0,595.0 L497.6,597.3 L496.9,599.6 L495.6,601.6 L493.8,603.2 L491.3,604.4 L488.0,605.0 L483.4,604.9 L477.5,604.1 L470.9,602.9 L464.3,601.3 L458.1,599.7 L453.0,598.0 L449.1,596.3 L445.8,594.4 L443.1,592.4 L440.6,590.3 L438.3,588.2 L436.0,586.0 L433.8,583.8 L431.8,581.6 L429.9,579.2 L428.1,576.9 L426.2,574.5 L424.0,572.0 L421.5,569.2 L418.8,566.0 L416.0,562.7 L413.2,559.7 L410.5,557.4 L408.0,556.0 L405.9,556.0 L404.1,557.1 L402.4,558.9 L400.7,560.9 L398.6,562.4 L396.0,563.0 L392.8,562.6 L389.0,561.7 L384.9,560.4 L380.8,558.9 L376.7,557.3 L373.0,556.0 L369.5,554.9 L366.2,553.8 L362.9,552.7 L359.8,551.6 L356.8,550.3 L354.0,549.0 L351.3,547.6 L348.6,546.2 L346.1,544.8 L343.8,543.1 L341.8,541.2 L340.0,539.0 L338.6,536.4 L337.4,533.5 L336.4,530.3 L335.7,527.0 L335.3,523.5 L335.0,520.0 L335.0,515.9 L335.2,511.1 L335.7,506.2 L336.3,501.8 L337.1,498.5Z" fill="url(#wet2)"/><path d="M275.0,558.0 L276.1,558.5 L276.8,560.6 L277.3,563.7 L277.7,567.1 L278.5,570.1 L279.7,572.0 L281.4,572.7 L283.4,572.6 L285.7,572.1 L288.2,571.7 L290.9,571.5 L293.7,572.0 L296.9,573.3 L300.5,575.0 L304.4,577.1 L308.1,579.4 L311.7,581.6 L314.7,583.7 L317.4,585.6 L320.0,587.5 L322.4,589.4 L324.3,591.3 L325.7,593.2 L326.3,595.3 L326.0,597.6 L324.9,600.1 L323.2,602.7 L321.2,605.2 L319.1,607.5 L317.0,609.3 L314.9,610.8 L312.5,612.2 L310.0,613.4 L307.5,614.2 L305.1,614.4 L303.0,614.0 L301.4,612.7 L300.2,610.7 L299.2,608.2 L298.0,605.4 L296.3,602.5 L293.7,600.0 L289.8,597.6 L284.8,595.1 L279.3,592.6 L273.9,590.1 L269.2,587.9 L265.7,586.0 L263.5,584.6 L262.1,583.7 L261.4,582.9 L261.3,582.1 L261.6,580.9 L262.2,579.0 L263.5,575.9 L265.6,571.7 L268.1,567.2 L270.7,562.9 L273.1,559.6Z" fill="url(#wet2)"/><path d="M345.0,537.0 L347.2,536.4 L350.7,536.5 L355.1,537.1 L360.0,538.0 L365.1,539.0 L370.0,540.0 L375.2,540.9 L381.1,542.0 L387.2,543.1 L393.0,544.5 L397.7,546.1 L401.0,548.0 L402.7,550.5 L403.3,553.7 L402.9,557.2 L401.7,560.5 L400.1,563.2 L398.0,565.0 L395.3,565.7 L391.8,565.7 L387.8,565.2 L383.4,564.3 L379.1,563.1 L375.0,562.0 L371.0,560.8 L366.7,559.4 L362.5,557.8 L358.5,556.0 L354.9,554.0 L352.0,552.0 L349.5,549.6 L347.3,546.7 L345.5,543.7 L344.4,540.9 L344.1,538.5Z" fill="#c5dba9"/><path d="M314.7,593.0 L316.4,592.6 L318.9,592.9 L321.9,593.6 L324.7,594.6 L327.2,595.8 L328.7,597.0 L329.3,598.4 L329.3,600.3 L328.9,602.3 L328.1,604.3 L327.1,605.9 L326.0,607.0 L324.5,607.6 L322.6,607.9 L320.3,607.9 L318.2,607.6 L316.3,607.0 L315.0,606.0 L314.2,604.3 L313.6,601.9 L313.3,599.2 L313.3,596.5 L313.8,594.3Z" fill="#c5dba9"/><path d="M314.7,565.0 L316.9,564.3 L320.1,564.2 L323.9,564.4 L327.8,565.0 L331.1,565.9 L333.3,567.0 L334.5,568.6 L335.2,570.7 L335.4,573.2 L335.0,575.6 L334.2,577.6 L333.0,579.0 L331.0,579.7 L328.0,580.1 L324.6,580.1 L321.1,579.7 L318.1,579.0 L316.0,578.0 L314.6,576.4 L313.7,574.0 L313.1,571.3 L313.1,568.7 L313.6,566.4Z" fill="#c5dba9"/><path d="M202.0,660.0 L203.7,658.7 L206.3,658.4 L209.4,658.9 L212.6,659.8 L215.6,660.9 L218.0,662.0 L219.9,663.2 L221.6,664.7 L223.0,666.4 L224.2,668.2 L225.2,670.1 L226.0,672.0 L226.7,674.0 L227.4,676.3 L227.9,678.6 L227.9,680.8 L227.4,682.7 L226.0,684.0 L223.4,685.0 L219.6,685.8 L215.1,686.2 L210.7,686.2 L206.8,685.5 L204.0,684.0 L202.3,681.1 L201.2,676.8 L200.6,671.9 L200.6,667.0 L201.1,662.8Z" fill="#c5dba9"/><path d="M608.0,537.0 L610.3,536.2 L613.6,535.7 L617.5,535.5 L621.4,535.7 L624.7,536.2 L627.0,537.0 L628.3,538.4 L629.1,540.6 L629.4,543.0 L629.1,545.4 L628.3,547.6 L627.0,549.0 L624.7,549.8 L621.4,550.3 L617.5,550.5 L613.6,550.3 L610.3,549.8 L608.0,549.0 L606.7,547.6 L605.9,545.4 L605.6,543.0 L605.9,540.6 L606.7,538.4Z" fill="#c5dba9"/><path d="M498.0,612.0 L500.2,610.1 L503.9,608.9 L508.4,608.2 L513.1,608.2 L517.2,608.8 L520.0,610.0 L521.7,612.2 L522.9,615.6 L523.4,619.5 L523.5,623.6 L523.0,627.2 L522.0,630.0 L520.2,632.2 L517.4,634.1 L514.1,635.8 L510.6,636.7 L507.5,636.9 L505.0,636.0 L502.9,633.5 L500.9,629.4 L499.1,624.5 L497.8,619.5 L497.4,615.1Z" fill="#c5dba9"/><path d="M570.0,482.0 L571.9,479.1 L574.9,477.4 L578.4,476.9 L581.9,477.5 L584.9,479.2 L587.0,482.0 L588.2,486.8 L588.8,493.8 L589.0,501.9 L588.7,510.0 L588.1,517.1 L587.0,522.0 L585.2,525.0 L582.6,527.1 L579.6,528.1 L576.6,528.0 L573.9,526.7 L572.0,524.0 L570.7,519.1 L569.7,511.7 L569.0,503.1 L568.8,494.5 L569.1,487.1Z" fill="#c5dba9"/><path d="M121.0,387.7 L125.0,390.7 L128.0,392.1 L131.6,393.2 L135.1,394.9 L138.2,397.4 L141.6,399.4 L143.9,402.1 L147.0,403.9 L148.8,407.1 L150.6,410.4 L151.9,413.9 L154.6,416.6 L157.3,418.9 L159.4,421.8 L162.9,422.9 L167.0,422.6 L171.7,423.4 L176.8,422.4 L182.0,420.7 L187.4,419.3 L192.5,416.8 L197.9,416.6 L202.7,416.5 L207.2,416.4 L211.5,416.9 L215.9,417.5 L219.8,419.5 L223.9,421.2 L228.1,422.9 L232.7,423.7 L237.7,422.7 L243.2,422.6 L248.7,420.1 L255.0,419.3 L261.0,416.7 L266.8,413.4 L273.3,412.6 L278.9,410.1 L284.5,409.3 L289.4,407.7 L293.9,405.1 L298.8,404.7 L303.4,404.3 L307.4,402.2 L311.6,401.6 L315.6,402.4 L319.4,401.1 L322.7,402.4 L325.9,402.8 L327.9,405.5 L330.7,406.8 L333.6,408.0 L336.8,409.2 L339.5,411.4 L342.7,413.3 L346.3,415.7 L351.3,416.0 L355.7,418.8 L360.4,421.0 L365.2,422.4 L369.7,424.3 L374.0,424.7 L377.7,425.9 L380.9,424.9 L383.9,423.9 L386.4,422.3 L389.0,420.9 L390.9,418.7 L393.1,417.0 L394.4,414.8 L396.8,411.4 L397.1,408.5 L397.9,405.2 L399.3,401.6 L401.0,399.3 L403.4,396.3 L407.9,394.6 L412.3,391.8 L417.1,388.9 L421.9,385.9 L426.9,383.3 L431.8,381.0 L436.0,378.4 L440.3,376.7 L444.8,376.2 L449.0,374.5 L453.4,375.0 L457.8,374.7 L462.1,374.6 L466.5,373.9 L471.0,374.6 L475.8,373.8 L481.0,373.5 L486.3,373.9 L491.6,374.8 L496.7,375.1 L501.2,375.7 L505.6,375.7 L508.1,378.5 L510.2,380.9 L510.7,384.4 L510.4,388.3 L511.2,392.7 L509.7,397.0 L510.5,401.4 L510.4,405.2 L510.1,408.9 L512.5,411.4 L513.6,414.5 L516.8,415.9 L519.1,418.0 L521.0,421.0 L524.5,422.0 L526.5,425.1 L528.7,427.9 L531.9,430.0 L534.4,433.1 L538.2,435.3 L540.2,439.2 L543.2,442.0 L546.3,444.6 L549.6,446.5 L552.8,448.1 L555.9,450.2 L559.6,448.5 L563.2,448.3 L567.1,449.7 L570.6,447.6 L574.2,447.1 L577.7,447.2 L580.5,448.9 L583.1,450.2 L586.7,450.2 L588.7,452.7 L591.5,454.2 L593.5,456.5 L595.7,458.5 L597.1,461.0 L599.5,462.1 L603.5,464.3 L606.8,467.0 L610.3,468.0 L612.0,470.0" stroke="#a3cbdb" stroke-width="2" fill="none" stroke-linejoin="round"/><path d="M482.7,264.0 L485.4,267.5 L485.7,270.9 L487.5,273.7 L489.9,276.3 L490.8,279.6 L491.8,282.4 L491.7,285.0 L490.2,289.6 L490.2,292.6 L488.7,295.0 L485.8,296.2 L483.7,300.2 L482.7,301.3" stroke="#a3cbdb" stroke-width="2" fill="none" stroke-linejoin="round"/><path d="M121.0,483.3 L122.8,485.8 L126.2,488.3 L131.1,489.5 L135.4,492.0 L137.2,494.3 L140.1,494.9 L143.1,495.4 L146.3,495.4 L149.1,496.7 L151.8,497.6 L154.1,498.5 L157.7,501.0 L158.1,505.4 L158.0,510.0 L157.4,514.3 L158.2,518.0 L160.5,520.5 L163.5,522.0 L166.3,524.0 L169.5,526.4 L173.0,529.4 L176.3,532.6 L179.6,536.0 L184.1,537.2 L186.6,537.4 L189.3,538.3 L192.1,537.3 L194.9,537.1 L197.6,536.3 L200.4,535.8 L205.0,537.2 L209.4,538.7 L212.9,541.4 L216.5,544.2 L221.2,544.8 L226.3,544.1 L228.8,545.5 L233.5,545.6 L237.4,546.7 L239.9,549.9 L242.2,554.1 L244.1,558.3 L247.1,560.0 L250.9,560.3 L255.0,557.3 L257.9,553.1 L260.7,553.7 L261.9,556.3 L262.7,561.0 L262.5,563.9 L262.7,566.7 L262.0,569.6 L263.3,572.0 L263.6,577.0 L265.0,579.4 L264.6,582.1 L265.4,584.7 L267.2,586.6 L268.4,588.9 L269.8,591.4 L272.6,592.7 L276.0,593.4 L279.7,593.9 L283.5,595.0 L287.2,596.6 L291.0,596.6 L293.4,599.2 L296.4,599.7 L297.3,604.2 L298.7,608.8 L297.2,611.2 L297.5,613.8 L298.3,618.7 L299.5,623.5 L300.0,626.1 L300.9,628.5 L302.3,630.7 L303.5,632.9 L305.3,637.3 L307.8,641.4 L312.0,643.9 L316.5,645.7 L318.9,649.5 L321.9,651.5 L324.2,653.4 L327.5,654.5 L328.2,658.5 L330.2,660.7 L329.5,664.2 L330.6,667.8 L331.0,671.7 L329.9,675.6 L331.5,679.0 L330.8,681.9 L331.0,684.0" stroke="#a3cbdb" stroke-width="2" fill="none" stroke-linejoin="round"/><path d="M121.0,607.0 L126.3,605.7 L130.2,605.7 L134.2,604.7 L138.5,604.7 L142.5,604.4 L146.2,603.4 L149.3,603.8 L152.8,607.5 L156.6,610.1 L159.0,614.2 L159.8,619.1 L162.7,622.9 L163.4,627.8 L165.6,632.4 L166.3,634.9 L168.3,637.0 L168.9,640.0 L170.0,643.0 L172.3,645.5 L173.7,648.6 L175.7,651.4 L178.6,653.3 L179.4,656.5 L181.6,658.4 L183.9,659.7 L186.3,660.6 L187.7,663.2 L192.5,664.5 L196.1,666.9 L198.8,669.6 L201.0,672.4 L202.2,675.7 L204.5,678.1 L205.3,680.6 L208.0,682.3 L210.0,684.0" stroke="#a3cbdb" stroke-width="2" fill="none" stroke-linejoin="round"/><path d="M335.7,497.3 L337.5,499.9 L339.4,503.8 L340.8,508.8 L343.4,513.8 L346.1,518.9 L348.2,524.3 L350.4,529.3 L353.9,532.8 L357.5,535.2 L361.8,535.9 L365.7,537.6 L370.1,538.0 L374.7,538.6 L379.5,539.6 L384.5,541.3 L388.9,544.8 L394.3,547.6 L400.1,551.1 L406.2,555.1 L413.1,558.4 L419.1,562.9 L424.8,567.5 L430.4,571.5 L435.6,574.9 L440.6,577.7 L446.1,578.6 L450.2,581.7 L454.5,583.7 L458.8,585.2 L463.0,586.2 L466.5,588.4 L470.3,589.3 L472.9,592.4 L476.1,593.8 L479.4,594.7 L482.3,595.6 L484.2,598.0 L488.5,599.4 L490.0,600.0" stroke="#a3cbdb" stroke-width="2" fill="none" stroke-linejoin="round"/><path d="M338.0,684.0 L342.2,683.6 L345.0,683.3 L348.1,682.9 L351.4,682.7 L354.5,681.9 L357.5,682.0 L360.0,680.1 L364.7,681.3 L368.8,683.2 L372.6,683.6 L375.3,684.0" stroke="#a3cbdb" stroke-width="2" fill="none" stroke-linejoin="round"/><path d="M545.3,562.6 L544.1,565.4 L543.1,569.7 L543.0,574.5 L543.5,578.9 L545.0,582.9 L545.6,587.7 L548.1,591.7 L549.6,595.6 L552.3,597.8 L554.0,600.5 L556.6,601.9 L556.4,604.6 L555.5,607.6 L553.6,611.4 L551.0,615.0 L549.6,618.6 L551.3,621.9 L552.4,625.7 L554.2,629.4 L557.4,632.4 L558.5,636.4 L560.7,639.7 L562.8,643.4 L566.6,646.4 L568.6,648.1 L569.3,651.3 L571.1,653.8 L573.7,655.8 L576.3,657.5 L578.5,659.4 L580.7,661.5 L583.6,661.5 L587.0,662.5 L590.5,660.8 L594.1,658.5 L598.5,657.3 L602.4,654.7 L607.0,653.7 L610.9,652.0 L614.3,650.0 L618.0,649.4 L621.6,648.7 L625.2,648.3 L628.7,648.1 L631.9,645.9 L635.1,646.5 L637.8,647.2 L642.5,648.2 L645.2,651.5 L648.2,654.9 L648.2,659.9 L650.3,664.5 L651.6,667.3 L650.9,670.6 L651.9,673.8 L652.3,677.0 L651.9,679.8 L652.1,684.0" stroke="#a3cbdb" stroke-width="2" fill="none" stroke-linejoin="round"/><path d="M616.7,423.3 L619.5,425.6 L621.6,427.1 L622.9,429.7 L625.6,431.0 L626.5,433.5 L628.3,437.0 L627.4,440.3 L623.6,442.1 L620.3,445.2 L616.1,447.1 L612.6,450.8 L610.4,452.5 L607.8,453.7 L605.3,454.8 L602.6,458.6 L601.0,459.0" stroke="#a3cbdb" stroke-width="2" fill="none" stroke-linejoin="round"/><path d="M751.0,310.7 L754.5,307.2 L758.0,306.2 L759.9,302.5 L763.7,301.0 L766.5,297.6 L770.3,295.7 L774.7,295.2 L778.1,292.1 L782.9,291.4 L787.5,289.5 L792.4,288.1 L797.4,287.0 L802.3,285.4 L807.2,286.0 L811.7,284.2 L816.1,284.6 L820.4,284.7 L824.5,286.0 L828.5,287.3 L832.2,289.4 L836.5,289.6 L840.6,290.3 L844.4,291.5 L848.0,293.8 L852.4,292.9 L856.0,294.9 L860.0,295.4 L863.7,296.8 L867.6,297.1 L871.1,298.6 L874.7,299.0 L878.1,300.0 L881.3,301.1 L884.6,301.1 L887.9,300.8 L891.0,301.2 L893.7,303.6 L897.0,303.3 L900.1,303.4 L902.7,305.6 L905.7,305.8 L908.3,306.9 L910.9,308.1 L914.0,307.9 L916.9,308.9 L919.9,310.7 L923.8,310.0 L927.7,311.8 L932.2,310.9 L936.9,312.3 L941.8,312.7 L946.7,313.5 L951.6,313.9 L956.5,314.1 L961.2,314.7 L965.6,316.3 L969.5,318.9 L973.6,321.1 L978.1,322.8 L981.2,326.7 L985.6,328.7 L989.4,331.7 L994.0,333.5 L998.1,336.3 L1002.6,338.8 L1006.5,342.3 L1010.9,345.3 L1014.8,348.6 L1018.9,351.5 L1022.3,355.1 L1025.8,357.9 L1030.0,359.4 L1032.8,362.2 L1036.0,364.3 L1038.1,367.5 L1040.4,370.3 L1044.1,371.3 L1046.3,374.4 L1049.9,375.7 L1053.5,377.0 L1056.5,380.0 L1060.6,380.7 L1064.5,381.8 L1068.0,383.8 L1071.8,385.2 L1074.9,387.5 L1077.7,389.9 L1080.1,392.8 L1081.7,396.3 L1083.8,399.7 L1085.6,403.4 L1087.0,407.3 L1088.5,411.0 L1089.5,414.9 L1091.8,417.8 L1093.7,421.0 L1096.8,422.6 L1099.5,424.6 L1102.2,426.7 L1106.3,427.0 L1109.6,429.2 L1112.6,432.4 L1115.2,436.6 L1117.9,442.0 L1120.9,448.6 L1125.0,455.7 L1127.3,463.9 L1132.2,470.7 L1133.5,478.3 L1137.0,483.6 L1138.3,488.0" stroke="#a3cbdb" stroke-width="2" fill="none" stroke-linejoin="round"/><path d="M1105.6,441.3 L1096.3,494.0" stroke="#a3cbdb" stroke-width="2" fill="none" stroke-linejoin="round"/><path d="M1082.3,264.0 L1082.2,268.4 L1082.4,271.4 L1082.2,274.8 L1083.2,278.1 L1082.8,281.8 L1084.3,285.0 L1086.8,287.5 L1090.5,288.8 L1094.3,291.1 L1099.3,292.1 L1104.6,293.2 L1109.7,296.0 L1114.9,297.6 L1120.5,297.9 L1123.9,301.9 L1127.7,304.8 L1131.3,308.5 L1134.4,312.8 L1136.5,317.8 L1139.5,322.2 L1141.8,326.9 L1144.5,330.9 L1148.1,333.5 L1149.9,337.1 L1151.8,339.6 L1153.9,341.5 L1156.5,342.7 L1159.6,343.1 L1162.6,344.3 L1166.3,345.9 L1170.8,348.9 L1177.6,348.8 L1185.6,349.8 L1194.6,351.6 L1204.3,351.1 L1213.7,352.4 L1222.6,353.3 L1230.5,354.2 L1236.2,357.4 L1239.6,360.7 L1242.6,363.6 L1243.2,367.8 L1242.9,372.2 L1243.8,376.6 L1243.7,381.3 L1245.5,386.1 L1250.1,390.3 L1257.1,394.2 L1265.8,399.2 L1276.8,402.2 L1287.6,407.4 L1298.9,411.2 L1309.1,415.7 L1318.5,418.6 L1324.7,423.2 L1330.0,425.0 L1332.8,427.8 L1333.3,430.7 L1334.2,434.9 L1336.9,438.8 L1339.1,441.2 L1342.7,443.7 L1346.6,446.7 L1350.7,450.3 L1355.9,452.8 L1360.6,455.8 L1364.6,459.3 L1368.9,461.7 L1371.5,464.9 L1373.8,467.5 L1375.9,469.6 L1378.0,471.2 L1380.8,474.7 L1382.4,477.6 L1383.0,478.7" stroke="#a3cbdb" stroke-width="2" fill="none" stroke-linejoin="round"/><path d="M765.0,301.3 L767.6,299.8 L771.4,298.1 L776.1,296.4 L780.4,293.1 L785.4,290.5 L790.2,287.9 L793.9,284.6 L797.7,282.7 L800.6,280.4 L803.3,278.0 L804.3,274.4 L806.4,272.0 L807.6,269.2 L810.2,267.7 L811.7,264.0" stroke="#a3cbdb" stroke-width="2" fill="none" stroke-linejoin="round"/><path d="M886.3,268.7 L863.0,292.0" stroke="#a3cbdb" stroke-width="2" fill="none" stroke-linejoin="round"/><path d="M933.0,562.7 L935.8,567.1 L936.7,570.5 L938.5,574.0 L940.2,577.9 L943.4,581.5 L945.4,585.9 L947.6,590.4 L949.7,595.4 L951.0,601.2 L954.6,606.5 L956.3,612.9 L959.4,618.8 L961.6,625.1 L963.7,631.3 L965.1,637.5 L967.6,643.5 L970.8,649.8 L972.3,656.7 L974.5,663.4 L974.9,670.1 L976.6,675.8 L978.0,680.6 L979.6,684.0" stroke="#a3cbdb" stroke-width="2" fill="none" stroke-linejoin="round"/><path d="M1383.0,467.0 L1378.0,475.0" stroke="#a3cbdb" stroke-width="2" fill="none" stroke-linejoin="round"/><path d="M661.8,684.0 L665.9,681.0 L666.8,677.2 L670.5,675.5 L672.3,671.9 L676.1,670.3 L677.2,666.4 L680.5,665.5 L682.2,663.4 L684.2,661.7 L686.2,660.1 L688.4,655.9 L691.4,654.2 L694.1,656.2 L696.2,659.5 L697.1,663.4 L697.3,666.2" stroke="#a3cbdb" stroke-width="2" fill="none" stroke-linejoin="round"/><path d="M121.0,387.7 L124.0,388.9 L127.9,390.7 L132.6,392.7 L138.0,394.8 L144.2,396.6 L151.0,398.0 L158.4,398.9 L166.4,399.4 L175.2,399.8 L184.7,399.9 L194.9,400.0 L206.0,400.0 L218.9,400.0 L233.9,400.0 L249.6,399.9 L264.9,399.6 L278.4,399.0 L289.0,398.0 L295.6,396.2 L298.9,393.7 L300.6,390.9 L302.0,388.3 L304.6,386.1 L310.0,385.0 L318.9,385.1 L330.4,386.1 L343.1,387.8 L355.8,389.5 L367.2,391.1 L376.0,392.0 L381.6,392.4 L385.0,392.7 L387.1,392.7 L388.8,392.5 L391.1,391.9 L395.0,391.0 L401.0,389.4 L408.6,387.2 L416.7,384.6 L424.6,382.0 L431.3,379.8 L436.0,378.3" stroke="#9c9c9c" stroke-width="0.8" fill="none" opacity=".75"/><path d="M221.0,360.0 L219.3,364.3 L216.9,370.3 L214.1,377.3 L211.3,384.7 L208.8,391.9 L207.0,398.0 L206.1,402.9 L206.0,407.0 L206.1,410.8 L206.3,414.8 L206.0,419.4 L205.0,425.0 L203.0,432.5 L200.1,441.5 L196.9,451.2 L193.7,460.5 L190.9,468.4 L189.0,474.0" stroke="#9c9c9c" stroke-width="0.8" fill="none" opacity=".75"/><path d="M397.0,400.0 L396.4,406.0 L395.8,414.6 L395.0,424.6 L393.9,435.0 L392.2,444.5 L390.0,452.0 L386.7,457.7 L382.4,462.4 L377.6,466.2 L372.9,469.4 L368.8,472.0 L366.0,474.0" stroke="#9c9c9c" stroke-width="0.8" fill="none" opacity=".75"/><path d="M121.0,478.7 L121.7,479.0 L122.3,479.4 L123.2,479.8 L124.6,480.6 L126.9,481.7 L130.3,483.3 L135.5,485.6 L142.3,488.5 L150.0,491.8 L157.7,495.2 L164.7,498.7 L170.0,502.0 L173.2,505.1 L174.8,508.3 L175.6,511.5 L176.4,514.6 L178.2,517.7 L181.7,520.7 L187.5,523.7 L194.9,526.8 L203.3,529.9 L211.8,532.7 L219.6,535.1 L226.0,537.0 L230.9,538.0 L234.8,538.3 L238.1,538.1 L241.0,538.0 L243.9,538.3 L247.0,539.3 L250.3,541.4 L253.6,544.2 L256.8,547.5 L259.9,550.8 L262.9,553.6 L265.7,555.7 L268.0,556.6 L269.8,556.6 L271.4,556.3 L273.3,556.0 L275.9,556.4 L279.7,558.0 L284.7,561.1 L290.5,565.5 L297.0,570.6 L304.1,575.7 L311.6,580.2 L319.3,583.7 L327.5,585.6 L336.4,586.4 L345.7,586.6 L355.1,587.0 L364.3,588.1 L373.0,590.7 L381.5,595.3 L390.2,601.5 L398.7,608.5 L406.6,615.4 L413.8,621.4 L419.7,625.7 L424.4,628.0 L428.0,629.0 L430.8,629.0 L432.9,628.6 L434.6,628.1 L436.0,628.0" stroke="#9c9c9c" stroke-width="0.8" fill="none" opacity=".75"/><path d="M263.3,553.3 L363.7,474.0" stroke="#9c9c9c" stroke-width="0.8" fill="none" opacity=".75"/><path d="M184.0,474.0 L184.2,479.3 L184.4,486.8 L184.7,495.6 L185.2,504.8 L186.1,513.5 L187.5,520.7 L189.7,526.4 L192.7,531.2 L196.0,535.6 L199.4,539.7 L202.5,544.0 L205.0,548.7 L207.0,553.9 L209.0,559.2 L210.6,564.7 L211.8,570.3 L212.3,575.8 L212.0,581.3 L210.4,586.3 L207.4,590.8 L203.8,595.3 L200.3,600.3 L197.3,606.4 L195.7,614.0 L195.6,624.3 L196.6,637.2 L198.2,651.0 L200.0,664.5 L201.7,676.0 L202.7,684.0" stroke="#9c9c9c" stroke-width="0.8" fill="none" opacity=".75"/><path d="M140.0,361.0 L141.1,362.2 L142.6,364.0 L144.4,366.0 L146.3,368.1 L148.2,370.2 L150.0,372.0 L151.8,373.6 L153.7,375.2 L155.6,376.7 L157.4,378.0 L158.9,379.2 L160.0,380.0" stroke="#9c9c9c" stroke-width="0.8" fill="none" opacity=".75"/><path d="M886.3,334.0 L890.7,334.4 L897.2,334.7 L904.7,335.2 L912.3,335.9 L918.9,337.1 L923.7,338.7 L926.1,340.9 L927.0,343.7 L926.9,346.8 L926.6,350.2 L926.8,353.8 L928.3,357.3 L931.3,360.8 L935.4,364.2 L940.0,367.8 L944.6,371.7 L948.7,375.9 L951.7,380.7 L953.8,386.2 L955.5,392.3 L956.6,398.8 L957.2,405.4 L957.1,411.9 L956.3,418.0 L954.6,423.9 L952.0,429.8 L948.8,435.5 L945.1,441.0 L941.3,446.1 L937.7,450.7 L933.8,454.8 L929.4,458.6 L924.8,462.0 L920.5,465.0 L916.9,467.4 L914.3,469.3" stroke="#9c9c9c" stroke-width="0.8" fill="none" opacity=".75"/><path d="M1017.0,418.0 L1018.3,420.7 L1019.8,424.6 L1021.7,429.1 L1024.1,433.7 L1027.2,438.0 L1031.0,441.3 L1035.8,443.9 L1041.4,446.3 L1047.6,448.3 L1054.3,449.8 L1061.3,450.6 L1068.3,450.7 L1075.5,449.7 L1083.2,447.6 L1091.1,444.9 L1099.1,441.9 L1107.1,439.0 L1115.0,436.7 L1123.3,434.8 L1132.3,432.9 L1141.2,431.1 L1149.5,429.6 L1156.5,428.3 L1161.6,427.3" stroke="#9c9c9c" stroke-width="0.8" fill="none" opacity=".75"/><path d="M1105.6,352.7 L1107.4,354.3 L1109.8,356.1 L1112.6,358.5 L1116.0,361.6 L1119.9,365.8 L1124.3,371.3 L1129.6,378.5 L1135.9,387.4 L1142.7,397.3 L1149.5,407.6 L1156.0,417.8 L1161.6,427.3 L1166.5,436.3 L1171.0,445.3 L1175.0,454.2 L1178.8,462.8 L1182.1,471.0 L1185.0,478.7 L1187.5,485.7 L1189.7,491.9 L1191.5,497.8 L1192.9,503.6 L1193.8,509.6 L1194.3,516.0 L1194.1,523.5 L1193.1,531.8 L1191.7,540.3 L1190.2,548.3 L1188.9,555.1 L1188.0,560.0" stroke="#9c9c9c" stroke-width="0.8" fill="none" opacity=".75"/><path d="M1264.3,418.0 L1267.5,418.7 L1272.1,419.5 L1277.4,420.6 L1283.0,422.1 L1288.1,424.3 L1292.3,427.3 L1295.4,431.0 L1297.8,435.3 L1299.9,440.2 L1301.8,445.8 L1303.9,452.4 L1306.3,460.0 L1309.3,469.0 L1312.7,479.3 L1316.2,490.6 L1319.6,502.3 L1322.6,514.0 L1325.0,525.3 L1326.7,536.2 L1327.9,547.3 L1328.8,558.3 L1329.3,569.3 L1329.5,580.1 L1329.6,590.7 L1329.3,601.8 L1328.6,613.5 L1327.6,625.1 L1326.5,635.8 L1325.6,644.8 L1325.0,651.3" stroke="#9c9c9c" stroke-width="0.8" fill="none" opacity=".75"/><path d="M1031.0,511.3 L1035.4,512.1 L1041.7,512.9 L1049.1,514.0 L1056.6,515.5 L1063.3,517.7 L1068.3,520.7 L1071.6,525.2 L1073.8,531.1 L1075.3,537.6 L1076.2,544.0 L1076.9,549.5 L1077.6,553.3" stroke="#9c9c9c" stroke-width="0.8" fill="none" opacity=".75"/><path d="M1111.0,617.0 L1195.0,610.0" stroke="#9c9c9c" stroke-width="0.8" fill="none" opacity=".75"/><path d="M1289.5,571.5 L1310.0,530.0" stroke="#9c9c9c" stroke-width="0.8" fill="none" opacity=".75"/><path d="M1005.0,490.0 L1006.6,490.9 L1008.9,492.0 L1011.6,493.4 L1014.4,495.2 L1017.3,497.3 L1020.0,500.0 L1022.7,503.6 L1025.6,508.1 L1028.4,513.1 L1031.1,518.0 L1033.4,522.1 L1035.0,525.0" stroke="#9c9c9c" stroke-width="0.8" fill="none" opacity=".75"/><path d="M1104.0,500.0 L1103.4,503.4 L1102.4,508.3 L1101.4,513.9 L1100.4,519.9 L1099.9,525.4 L1100.0,530.0 L1101.0,533.8 L1102.7,537.3 L1104.8,540.4 L1106.9,543.1 L1108.8,545.3 L1110.0,547.0" stroke="#9c9c9c" stroke-width="0.8" fill="none" opacity=".75"/><path d="M960.0,600.0 L963.4,598.6 L968.1,596.3 L973.8,593.8 L979.6,591.5 L985.2,590.0 L990.0,590.0 L994.1,591.8 L998.1,595.2 L1001.9,599.4 L1005.2,603.7 L1007.9,607.5 L1010.0,610.0" stroke="#9c9c9c" stroke-width="0.8" fill="none" opacity=".75"/><path d="M1128.5,561.0 L1128.2,565.5 L1128.0,571.9 L1127.6,579.4 L1127.1,587.2 L1126.2,594.3 L1125.0,600.0 L1123.1,604.3 L1120.6,607.9 L1117.8,610.9 L1115.0,613.4 L1112.6,615.4 L1111.0,617.0" stroke="#9c9c9c" stroke-width="0.8" fill="none" opacity=".75"/><path d="M905.0,420.0 L906.6,422.3 L908.9,425.5 L911.6,429.2 L914.4,433.2 L917.3,436.9 L920.0,440.0 L922.7,442.6 L925.6,445.0 L928.4,447.2 L931.1,449.2 L933.4,450.8 L935.0,452.0" stroke="#9c9c9c" stroke-width="0.8" fill="none" opacity=".75"/><path d="M1140.0,470.0 L1142.2,469.8 L1145.4,469.3 L1149.1,468.8 L1153.0,468.5 L1156.7,468.8 L1160.0,470.0 L1163.0,472.4 L1165.9,475.9 L1168.8,480.0 L1171.3,484.1 L1173.4,487.6 L1175.0,490.0" stroke="#9c9c9c" stroke-width="0.8" fill="none" opacity=".75"/><path d="M872.3,441.3 L872.7,445.5 L873.2,451.3 L873.8,458.2 L874.6,465.5 L875.6,472.6 L877.0,478.7 L878.7,484.0 L880.8,489.1 L883.1,493.9 L885.6,498.4 L888.3,502.7 L891.0,506.7 L893.5,510.5 L895.9,514.1 L898.3,517.5 L901.2,520.5 L904.9,523.1 L909.7,525.3 L916.2,526.8 L924.4,527.6 L933.3,527.9 L942.1,528.3 L950.1,528.8 L956.3,530.0 L960.5,531.7 L963.4,533.8 L965.3,536.1 L966.8,538.6 L968.3,541.3 L970.3,544.0 L972.5,546.8 L974.4,549.9 L976.4,553.1 L978.6,556.3 L981.2,559.5 L984.3,562.7 L988.4,565.8 L993.3,568.7 L998.6,571.7 L1003.8,574.8 L1008.6,577.9 L1012.3,581.3 L1014.9,584.5 L1016.8,587.5 L1018.1,590.6 L1019.2,594.2 L1020.3,598.8 L1021.6,604.6 L1023.2,612.4 L1024.9,622.1 L1026.6,632.6 L1028.2,643.1 L1029.7,652.8 L1031.0,660.6 L1032.1,666.7 L1033.1,671.7 L1033.9,675.8 L1034.6,679.1 L1035.2,681.8 L1035.6,684.0" stroke="#b09bcc" stroke-width="1.5" fill="none" opacity=".85"/><path d="M826.6,600.2 L833.8,601.9 L843.8,604.5 L855.7,607.5 L868.1,610.2 L880.2,611.9 L890.6,612.1 L899.7,610.4 L908.4,607.3 L916.7,603.3 L924.4,598.9 L931.4,594.5 L937.7,590.7 L942.9,587.3 L947.1,583.7 L950.5,580.3 L953.8,577.1 L957.1,574.3 L961.0,572.0 L965.7,570.4 L971.0,569.2 L976.5,568.5 L981.6,568.0 L985.9,567.6 L989.0,567.3" stroke="#b09bcc" stroke-width="1.5" fill="none" opacity=".85"/><path d="M890.6,612.1 L893.0,684.0" stroke="#b09bcc" stroke-width="1.5" fill="none" opacity=".85"/><path d="M1311.0,651.3 L1383.0,632.6" stroke="#b09bcc" stroke-width="1.5" fill="none" opacity=".85"/><path d="M121.0,296.7 L121.9,297.2 L122.7,297.7 L123.9,298.4 L125.8,299.6 L128.6,301.2 L132.7,303.7 L138.4,307.1 L145.4,311.4 L153.4,316.2 L161.9,321.4 L170.7,326.7 L179.3,331.7 L187.6,336.3 L195.9,340.5 L204.4,344.8 L213.3,349.6 L222.8,355.2 L233.0,362.0 L244.5,370.8 L257.0,381.4 L270.2,392.9 L283.4,404.2 L296.1,414.5 L307.7,422.7 L317.9,428.9 L327.1,433.9 L335.9,437.8 L344.5,440.8 L353.6,443.1 L363.7,444.8 L375.6,445.6 L389.3,445.3 L403.3,444.2 L416.7,442.8 L427.9,441.5 L436.0,440.8" stroke="#f1c17f" stroke-width="1.7" fill="none" stroke-linejoin="round"/><path d="M436.0,439.0 L436.8,438.6 L437.2,437.7 L438.0,436.8 L440.0,436.4 L443.7,437.0 L450.0,439.0 L460.4,443.2 L474.5,449.4 L490.5,456.5 L506.3,463.6 L519.9,469.8 L529.3,474.0" stroke="#f1c17f" stroke-width="1.7" fill="none" stroke-linejoin="round"/><path d="M522.8,470.0 L528.0,471.8 L535.3,474.4 L544.0,477.4 L552.9,480.3 L561.2,482.6 L567.9,483.9 L573.2,483.9 L577.8,482.9 L581.8,481.3 L585.1,479.6 L587.9,478.0 L590.0,477.0" stroke="#f1c17f" stroke-width="1.7" fill="none" stroke-linejoin="round"/><path d="M867.7,343.3 L869.3,346.3 L871.7,350.6 L874.4,355.6 L877.2,360.9 L879.7,366.3 L881.7,371.3 L883.2,376.2 L884.6,381.3 L885.8,386.5 L886.5,391.3 L886.7,395.7 L886.3,399.3 L884.9,402.1 L882.5,404.2 L879.6,405.7 L876.6,407.0 L874.0,407.9 L872.3,408.7" stroke="#f1c17f" stroke-width="1.7" fill="none" stroke-linejoin="round"/><path d="M886.3,399.3 L887.8,401.4 L890.0,404.3 L892.5,407.7 L895.2,411.6 L897.8,415.7 L900.0,420.0 L901.5,424.7 L902.5,430.1 L903.4,435.8 L904.6,441.3 L906.5,446.4 L909.7,450.7 L914.3,454.1 L920.1,457.0 L926.6,459.3 L933.5,461.3 L940.5,463.1 L947.0,464.7 L953.6,466.1 L960.8,467.1 L968.0,467.9 L974.6,468.5 L980.2,468.9 L984.3,469.3" stroke="#f1c17f" stroke-width="1.7" fill="none" stroke-linejoin="round"/><path d="M1054.3,292.0 L1053.1,298.8 L1051.2,307.9 L1049.1,318.8 L1047.1,331.0 L1045.6,344.0 L1045.0,357.3 L1045.7,372.1 L1047.6,389.1 L1049.9,406.9 L1052.2,424.0 L1053.8,439.1 L1054.3,450.7 L1053.3,458.1 L1051.3,462.3 L1048.7,464.4 L1045.8,465.7 L1043.1,467.1 L1041.0,470.0 L1039.5,474.3 L1038.3,479.1 L1037.3,484.1 L1036.4,489.1 L1035.3,493.8 L1034.0,498.0 L1032.4,501.4 L1030.5,504.4 L1028.5,507.0 L1026.6,509.5 L1024.9,512.3 L1023.5,515.5 L1022.5,519.3 L1021.8,523.5 L1021.3,528.0 L1020.9,532.4 L1020.5,536.4 L1020.0,540.0 L1019.4,543.1 L1018.7,546.0 L1018.0,548.5 L1017.4,550.8 L1016.9,552.6 L1016.5,554.0" stroke="#f1c17f" stroke-width="1.7" fill="none" stroke-linejoin="round"/><path d="M1073.0,292.0 L1076.8,295.5 L1082.3,300.6 L1088.7,306.6 L1095.2,312.4 L1101.1,317.2 L1105.6,320.0 L1108.2,320.1 L1109.4,318.1 L1110.0,315.1 L1110.7,312.1 L1112.1,310.3 L1115.0,310.7 L1119.7,313.7 L1125.5,318.3 L1132.2,324.1 L1139.2,330.5 L1146.0,337.1 L1152.3,343.3 L1158.2,349.4 L1164.2,355.9 L1170.1,362.6 L1175.7,369.1 L1180.7,375.2 L1185.0,380.7 L1188.3,385.4 L1190.7,389.5 L1192.6,393.2 L1194.3,396.8 L1196.3,400.3 L1199.0,404.0 L1202.4,408.0 L1206.2,412.1 L1210.4,416.2 L1214.5,420.2 L1218.6,424.0 L1222.3,427.3 L1226.2,430.0 L1230.4,432.0 L1234.6,433.7 L1238.1,435.6 L1240.4,438.0 L1241.0,441.3 L1239.6,445.7 L1236.5,450.8 L1232.2,456.5 L1227.3,462.4 L1222.3,468.3 L1217.6,474.0 L1213.1,479.4 L1208.3,484.7 L1203.3,490.1 L1198.4,495.5 L1193.8,501.0 L1189.6,506.7 L1185.8,513.0 L1182.4,519.8 L1179.1,526.8 L1176.2,533.5 L1173.5,539.4 L1171.0,544.0 L1168.8,547.3 L1166.8,549.5 L1165.1,551.0 L1163.7,551.9 L1162.5,552.6 L1161.6,553.3" stroke="#f1c17f" stroke-width="1.7" fill="none" stroke-linejoin="round"/><path d="M1236.3,441.3 L1239.1,445.3 L1243.0,450.7 L1247.7,457.1 L1252.3,464.2 L1256.5,471.5 L1259.6,478.7 L1261.5,486.0 L1262.5,493.7 L1263.1,501.7 L1263.4,509.8 L1263.7,517.7 L1264.3,525.3 L1265.4,532.7 L1266.9,540.0 L1268.4,547.2 L1269.5,554.2 L1269.8,560.9 L1269.0,567.3 L1266.8,573.5 L1263.5,579.4 L1259.3,585.1 L1254.8,590.5 L1250.1,595.5 L1245.6,600.0 L1240.9,604.1 L1235.6,607.9 L1230.1,611.3 L1225.0,614.3 L1220.7,616.7 L1217.6,618.6" stroke="#f1c17f" stroke-width="1.7" fill="none" stroke-linejoin="round"/><path d="M1077.6,544.0 L1077.9,549.1 L1078.3,556.1 L1078.8,564.4 L1079.5,573.4 L1080.7,582.4 L1082.3,590.7 L1084.7,598.5 L1087.8,606.2 L1091.4,614.0 L1094.9,621.8 L1098.3,629.5 L1101.0,637.3 L1103.2,645.6 L1105.1,654.6 L1106.8,663.6 L1108.2,671.9 L1109.4,678.9 L1110.3,684.0" stroke="#f1c17f" stroke-width="1.7" fill="none" stroke-linejoin="round"/><path d="M1213.0,618.6 L1208.3,684.0" stroke="#f1c17f" stroke-width="1.7" fill="none" stroke-linejoin="round"/><path d="M863.0,488.0 L866.3,491.7 L871.0,496.8 L876.4,502.9 L882.0,509.3 L887.1,515.4 L891.0,520.7 L893.7,525.2 L895.7,529.3 L897.1,533.2 L898.2,536.9 L899.2,540.5 L900.3,544.0 L901.4,547.6 L902.4,551.3 L903.2,554.8 L904.0,558.0 L904.5,560.7 L905.0,562.7" stroke="#f1c17f" stroke-width="1.7" fill="none" stroke-linejoin="round"/><path d="M981.5,470.0 L982.0,472.3 L982.8,475.4 L983.7,479.2 L984.5,483.2 L985.0,487.3 L985.0,491.0 L984.4,494.5 L983.3,498.0 L981.9,501.5 L980.5,505.0 L979.1,508.5 L978.0,512.0 L977.2,515.5 L976.6,519.0 L976.0,522.5 L975.5,526.0 L975.0,529.5 L974.5,533.0 L973.9,536.7 L973.2,540.8 L972.5,544.8 L971.9,548.6 L971.4,551.7 L971.0,554.0" stroke="#f1c17f" stroke-width="1.7" fill="none" stroke-linejoin="round"/><path d="M984.3,469.3 L987.3,466.4 L991.6,462.2 L996.5,457.4 L1001.9,452.6 L1007.3,448.5 L1012.3,446.0 L1017.3,445.2 L1022.7,445.7 L1028.0,446.9 L1033.0,448.4 L1037.3,449.9 L1040.3,450.7" stroke="#f1c17f" stroke-width="1.7" fill="none" stroke-linejoin="round"/><path d="M887.0,470.0 L887.8,473.8 L888.8,479.1 L890.1,485.3 L891.4,492.0 L892.8,498.8 L894.0,505.0 L895.2,511.0 L896.3,517.2 L897.5,523.4 L898.7,529.4 L899.8,535.0 L901.0,540.0 L902.0,544.3 L902.9,547.9 L903.8,551.2 L904.9,554.3 L906.2,557.5 L908.0,561.0 L910.3,564.9 L913.1,568.9 L916.1,573.0 L919.3,577.2 L922.5,581.4 L925.5,585.5 L928.5,589.5 L931.5,593.5 L934.5,597.5 L937.4,601.6 L940.3,605.7 L943.0,610.0 L945.5,614.3 L947.8,618.4 L950.0,622.7 L952.2,627.2 L954.5,632.3 L957.0,638.0 L959.9,645.2 L963.2,653.7 L966.6,662.8 L969.8,671.4 L972.6,678.8 L974.5,684.0" stroke="#f1c17f" stroke-width="1.7" fill="none" stroke-linejoin="round"/><path d="M974.5,582.0 L975.8,584.3 L977.7,587.6 L980.0,591.4 L982.1,595.5 L983.9,599.5 L985.0,603.0 L985.4,606.2 L985.5,609.2 L985.2,612.2 L984.5,615.1 L983.3,617.8 L981.5,620.5 L979.1,622.9 L976.1,625.0 L972.5,627.1 L968.7,629.2 L964.6,631.6 L960.5,634.5 L956.1,637.9 L951.2,641.8 L946.1,645.9 L941.1,650.3 L936.4,654.7 L932.5,659.0 L929.2,663.7 L926.3,668.8 L923.8,674.0 L921.6,678.9 L919.9,683.0 L918.5,686.0" stroke="#f1c17f" stroke-width="1.7" fill="none" stroke-linejoin="round"/><path d="M713.0,652.9 L716.7,652.1 L721.9,650.9 L728.0,649.5 L734.5,648.0 L740.7,646.7 L746.0,645.7 L750.5,645.1 L754.6,644.8 L758.4,644.6 L762.1,644.4 L765.8,644.1 L769.6,643.3 L773.8,642.0 L778.4,640.3 L782.9,638.4 L787.2,636.5 L790.7,634.9 L793.3,633.8" stroke="#f1c17f" stroke-width="1.7" fill="none" stroke-linejoin="round"/><path d="M729.6,655.2 L722.5,684.0" stroke="#f1c17f" stroke-width="1.7" fill="none" stroke-linejoin="round"/><path d="M767.2,645.7 L755.4,684.0" stroke="#f1c17f" stroke-width="1.7" fill="none" stroke-linejoin="round"/><path d="M852.0,567.0 L851.6,571.3 L850.8,577.3 L850.1,584.3 L849.4,592.0 L849.2,600.0 L849.6,607.6 L850.9,615.7 L852.9,624.7 L855.4,633.9 L857.9,642.6 L860.0,649.9 L861.5,655.2" stroke="#f1c17f" stroke-width="1.7" fill="none" stroke-linejoin="round"/><path d="M807.6,614.8 L809.7,616.7 L812.6,619.3 L816.1,622.4 L819.7,625.6 L823.3,628.7 L826.6,631.4 L829.5,633.6 L832.2,635.5 L834.8,637.3 L837.5,639.2 L840.3,641.1 L843.3,643.3 L846.8,646.0 L850.8,649.1 L855.0,652.3 L858.9,655.4 L862.2,658.0 L864.6,659.9" stroke="#f1c17f" stroke-width="1.7" fill="none" stroke-linejoin="round"/><path d="M1296.0,668.0 L1298.8,668.7 L1302.7,669.7 L1307.4,670.9 L1312.1,672.3 L1316.5,673.6 L1320.0,675.0 L1322.6,676.5 L1324.7,678.2 L1326.5,679.9 L1327.9,681.6 L1329.1,683.0 L1330.0,684.0" stroke="#f1c17f" stroke-width="1.7" fill="none" stroke-linejoin="round"/><path d="M838.0,350.0 L840.6,352.3 L844.3,355.3 L848.6,359.0 L853.0,363.1 L857.0,367.5 L860.0,372.0 L862.0,377.1 L863.4,383.1 L864.4,389.4 L865.0,395.3 L865.5,400.4 L866.0,404.0" stroke="#f1c17f" stroke-width="1.7" fill="none" stroke-linejoin="round"/><path d="M1167.0,540.0 L1172.0,560.0" stroke="#f1c17f" stroke-width="1.7" fill="none" stroke-linejoin="round"/><path d="M445.3,264.0 L448.6,266.2 L453.2,269.2 L458.6,272.8 L464.4,276.7 L470.3,280.9 L475.7,285.0 L480.5,289.2 L485.0,293.5 L489.5,298.0 L494.3,302.7 L499.7,307.7 L506.0,313.0 L513.7,318.7 L522.8,324.7 L532.4,330.9 L541.8,337.3 L550.4,343.8 L557.3,350.3 L562.2,357.0 L565.8,364.0 L568.4,371.0 L570.6,377.9 L573.0,384.3 L576.0,390.0 L579.7,394.9 L583.7,399.3 L587.8,403.3 L591.9,406.8 L595.8,410.1 L599.3,413.3 L602.5,416.2 L605.5,418.7 L608.4,421.0 L611.0,423.1 L613.5,425.1 L615.7,427.3 L617.8,429.6 L619.7,432.1 L621.4,434.5 L622.9,436.8 L624.1,438.6 L625.0,440.0" stroke="#e98f6d" stroke-width="1.9" fill="none" stroke-linejoin="round"/><path d="M585.3,474.0 L586.7,470.9 L588.6,466.6 L590.8,461.5 L593.4,456.0 L596.3,450.7 L599.3,446.0 L602.4,441.9 L605.5,438.1 L609.0,434.4 L612.8,430.6 L617.3,426.8 L622.7,422.7 L629.2,418.2 L636.7,413.3 L644.8,408.3 L653.2,403.3 L661.5,398.7 L669.3,394.7 L676.9,391.2 L684.8,387.9 L692.5,385.0 L699.7,382.5 L706.1,380.2 L711.3,378.3 L715.1,376.8 L717.9,375.7 L719.8,375.0 L721.1,374.5 L722.1,374.1 L723.0,373.7" stroke="#e98f6d" stroke-width="1.9" fill="none" stroke-linejoin="round"/><path d="M716.0,264.0 L717.9,267.3 L720.7,271.9 L724.0,277.4 L727.3,283.2 L730.2,289.0 L732.3,294.3 L733.7,299.3 L734.7,304.5 L735.4,309.6 L735.6,314.4 L735.4,318.7 L734.7,322.3 L733.2,324.8 L731.0,326.4 L728.3,327.4 L725.5,328.4 L722.8,329.7 L720.7,331.7 L719.1,334.5 L717.7,337.7 L716.5,341.2 L715.4,344.9 L714.5,348.8 L713.7,352.7 L713.0,357.0 L712.5,361.8 L712.1,366.8 L711.8,371.5 L711.5,375.5 L711.3,378.3" stroke="#e98f6d" stroke-width="1.9" fill="none" stroke-linejoin="round"/><path d="M821.0,329.3 L825.3,328.6 L831.4,327.6 L838.5,326.4 L845.9,325.4 L852.7,324.7 L858.3,324.7 L862.4,325.8 L865.6,328.0 L868.2,330.5 L870.8,332.8 L873.6,334.2 L877.0,334.0 L881.1,331.9 L885.6,328.3 L890.4,323.8 L895.3,319.0 L900.2,314.4 L905.0,310.7 L909.1,307.8 L912.4,305.2 L915.8,302.8 L919.9,300.7 L925.4,298.7 L933.0,296.7 L943.4,294.9 L956.2,293.2 L970.3,291.7 L985.0,290.3 L999.3,288.8 L1012.3,287.3 L1024.6,285.7 L1037.0,284.2 L1049.0,282.6 L1060.2,281.1 L1069.8,279.5 L1077.6,278.0 L1083.0,276.4 L1086.5,274.7 L1088.5,273.1 L1089.7,271.5 L1090.5,270.0 L1091.6,268.7 L1092.7,267.6 L1093.3,266.6 L1093.7,265.8 L1093.8,265.0 L1093.9,264.5 L1094.0,264.0" stroke="#e98f6d" stroke-width="1.9" fill="none" stroke-linejoin="round"/><path d="M1366.5,264.0 L1366.8,265.6 L1367.1,267.9 L1367.4,270.5 L1368.0,273.3 L1368.8,275.9 L1370.0,278.0 L1371.8,279.8 L1374.1,281.4 L1376.7,282.9 L1379.3,284.1 L1381.5,285.2 L1383.0,286.0" stroke="#e98f6d" stroke-width="1.9" fill="none" stroke-linejoin="round"/><path d="M830.3,544.0 L833.8,545.0 L838.4,546.4 L844.0,548.1 L850.2,549.8 L856.6,551.6 L863.0,553.3 L869.6,555.1 L876.8,557.3 L884.3,559.5 L891.7,561.3 L898.7,562.5 L905.0,562.7 L910.4,561.6 L915.2,559.4 L919.6,556.6 L923.8,553.5 L928.2,550.8 L933.0,548.7 L938.1,547.4 L943.4,546.4 L948.8,545.8 L954.3,545.2 L959.9,544.7 L965.7,544.0 L971.7,543.0 L977.8,541.7 L984.1,540.5 L990.4,539.5 L996.7,539.0 L1003.0,539.3 L1009.2,540.7 L1015.4,543.1 L1021.6,546.0 L1027.9,549.0 L1034.1,551.6 L1040.3,553.3 L1046.7,554.2 L1053.2,554.7 L1059.8,554.8 L1066.2,554.5 L1072.2,554.0 L1077.6,553.3 L1082.1,552.1 L1085.9,550.2 L1089.3,548.1 L1092.7,546.1 L1096.5,544.6 L1101.0,544.0 L1106.2,543.9 L1111.7,544.0 L1117.6,544.6 L1124.0,546.1 L1130.8,548.8 L1138.3,553.3 L1146.9,560.5 L1156.8,570.2 L1167.2,581.3 L1177.4,592.4 L1186.6,602.1 L1194.3,609.3 L1200.0,613.5 L1204.3,615.7 L1207.7,616.6 L1210.7,616.9 L1213.8,617.3 L1217.6,618.6 L1221.6,620.4 L1225.2,622.1 L1229.0,623.8 L1233.3,626.0 L1238.7,628.9 L1245.6,632.6 L1254.3,638.1 L1264.4,645.4 L1275.5,653.3 L1287.3,660.8 L1299.3,666.7 L1311.0,670.0 L1323.5,669.9 L1337.2,667.2 L1351.1,663.0 L1364.1,658.2 L1375.1,654.0 L1383.0,651.3" stroke="#e98f6d" stroke-width="1.9" fill="none" stroke-linejoin="round"/><path d="M587.1,400.0 L615.1,428.0" stroke="#e98f6d" stroke-width="1.9" fill="none" stroke-linejoin="round"/><path d="M657.2,400.0 L653.2,402.5 L647.5,406.0 L640.8,410.2 L633.7,414.7 L627.1,419.1 L621.4,423.3 L616.6,427.4 L612.2,431.6 L608.0,435.9 L604.3,439.9 L600.9,443.6 L598.0,446.7 L595.5,449.0 L593.6,450.5 L592.0,451.6 L590.7,452.7 L589.6,454.1 L588.7,456.0 L587.9,458.8 L587.4,462.3 L587.2,466.0 L587.0,469.6 L587.0,472.6 L587.1,474.7 L587.3,475.4 L587.8,475.0 L588.4,474.1 L589.0,473.2 L589.4,473.0 L589.6,474.0 L589.6,476.5 L589.4,480.0 L589.2,484.1 L588.8,488.6 L588.1,493.1 L587.3,497.3 L586.2,501.2 L584.9,505.2 L583.4,509.1 L581.7,513.0 L579.9,516.8 L578.0,520.6 L575.9,524.2 L573.4,527.5 L570.9,530.8 L568.3,534.2 L566.0,537.7 L564.0,541.6 L562.5,546.0 L561.5,550.8 L560.6,555.7 L559.8,560.7 L558.6,565.4 L557.0,569.6 L555.0,572.9 L552.7,575.4 L550.3,577.6 L547.4,580.2 L544.2,583.5 L540.6,588.3 L536.3,594.7 L531.4,602.5 L526.0,611.0 L520.6,620.0 L515.2,628.9 L510.3,637.3 L505.5,645.8 L500.5,654.8 L495.6,663.7 L491.2,672.0 L487.4,678.9 L484.7,684.0" stroke="#e98f6d" stroke-width="1.9" fill="none" stroke-linejoin="round"/><path d="M778.9,643.3 L789.1,645.4 L803.8,648.3 L820.9,651.8 L838.4,655.5 L854.3,659.1 L866.7,662.4 L875.4,665.4 L882.1,668.5 L887.2,671.6 L891.1,674.4 L894.5,676.9 L897.6,679.0 L900.3,680.6 L902.1,681.7 L903.2,682.5 L904.0,683.1 L904.5,683.6 L905.0,684.0" stroke="#e98f6d" stroke-width="1.9" fill="none" stroke-linejoin="round"/><ellipse cx="714" cy="306" rx="6" ry="4" fill="#d9d5cf" opacity=".9"/><ellipse cx="690" cy="378" rx="5" ry="4" fill="#d9d5cf" opacity=".9"/><ellipse cx="845" cy="342" rx="6" ry="3" fill="#d9d5cf" opacity=".9"/><ellipse cx="1040" cy="448" rx="5" ry="4" fill="#d9d5cf" opacity=".9"/><ellipse cx="1000" cy="548" rx="8" ry="5" fill="#d9d5cf" opacity=".9"/><ellipse cx="1055" cy="620" rx="5" ry="4" fill="#d9d5cf" opacity=".9"/><ellipse cx="1270" cy="668" rx="7" ry="4" fill="#d9d5cf" opacity=".9"/><ellipse cx="935" cy="555" rx="6" ry="4" fill="#d9d5cf" opacity=".9"/><ellipse cx="712" cy="662" rx="8" ry="10" fill="#d9d5cf" opacity=".9"/><ellipse cx="850" cy="650" rx="10" ry="6" fill="#d9d5cf" opacity=".9"/><ellipse cx="583" cy="474" rx="9" ry="5" fill="#d9d5cf" opacity=".9"/><ellipse cx="892" cy="574" rx="5" ry="4" fill="#d9d5cf" opacity=".9"/><ellipse cx="860" cy="652" rx="6" ry="4" fill="#d9d5cf" opacity=".9"/><path d="M1255.0,470.0 L1259.9,467.3 L1267.2,465.6 L1275.8,464.8 L1284.4,465.1 L1291.9,466.5 L1297.0,469.0 L1299.9,473.5 L1301.6,480.2 L1302.1,487.9 L1301.4,495.7 L1299.7,502.4 L1297.0,507.0 L1292.3,509.6 L1285.6,511.2 L1277.7,511.7 L1269.8,511.1 L1262.9,509.6 L1258.0,507.0 L1254.9,502.6 L1252.7,496.1 L1251.4,488.6 L1251.3,481.0 L1252.5,474.5Z" fill="#d3eabd"/><path d="M1013.0,606.0 L1014.0,604.4 L1015.4,603.0 L1017.1,602.2 L1018.9,602.0 L1020.6,602.5 L1022.0,604.0 L1023.3,606.6 L1024.5,610.3 L1025.7,614.7 L1026.7,619.6 L1027.5,624.8 L1028.0,630.0 L1028.2,635.8 L1028.2,642.7 L1028.0,649.8 L1027.6,656.3 L1026.9,661.7 L1026.0,665.0 L1024.7,666.2 L1023.0,665.7 L1021.0,664.1 L1019.0,661.5 L1017.3,658.3 L1016.0,655.0 L1015.2,651.0 L1014.7,646.1 L1014.4,640.6 L1014.3,634.9 L1014.2,629.6 L1014.0,625.0 L1013.7,621.0 L1013.2,617.2 L1012.8,613.8 L1012.6,610.7 L1012.6,608.1Z" fill="#d3eabd"/><path d="M1128.0,445.0 L1128.8,443.7 L1130.0,442.7 L1131.5,442.1 L1133.1,441.9 L1134.7,442.2 L1136.0,443.0 L1137.3,444.6 L1138.6,447.0 L1139.9,449.9 L1141.0,452.9 L1141.8,455.7 L1142.0,458.0 L1141.6,459.9 L1140.6,461.7 L1139.2,463.3 L1137.7,464.6 L1136.2,465.6 L1135.0,466.0 L1134.0,465.9 L1133.1,465.4 L1132.2,464.4 L1131.4,463.2 L1130.6,461.7 L1130.0,460.0 L1129.4,457.9 L1128.7,455.2 L1128.2,452.2 L1127.8,449.4 L1127.7,446.9Z" fill="#d3eabd"/><path d="M960.0,520.0 L961.5,518.4 L963.9,516.9 L966.9,515.6 L970.0,514.8 L972.8,514.6 L975.0,515.0 L976.6,516.5 L978.1,518.9 L979.4,521.9 L980.2,525.0 L980.4,527.8 L980.0,530.0 L978.5,531.6 L976.1,533.1 L973.1,534.4 L970.0,535.2 L967.2,535.4 L965.0,535.0 L963.4,533.5 L961.9,531.1 L960.6,528.1 L959.8,525.0 L959.6,522.2Z" fill="#d3eabd"/><path d="M1335.0,571.0 L1338.1,568.2 L1343.0,567.3 L1348.8,567.8 L1354.8,569.4 L1360.5,571.9 L1365.0,575.0 L1368.5,579.0 L1371.6,584.2 L1374.2,590.2 L1376.4,596.8 L1378.4,603.5 L1380.0,610.0 L1381.6,616.8 L1383.2,624.3 L1384.5,631.9 L1385.1,639.1 L1384.7,645.3 L1383.0,650.0 L1379.3,653.3 L1373.8,655.7 L1367.3,657.2 L1360.6,657.6 L1354.6,656.9 L1350.0,655.0 L1346.9,651.6 L1344.8,646.8 L1343.2,640.9 L1342.1,634.2 L1341.1,627.1 L1340.0,620.0 L1338.5,612.0 L1336.7,602.7 L1335.0,593.1 L1333.9,583.9 L1333.8,576.3Z" fill="#d3eabd"/><path d="M1303.0,578.0 L1305.4,577.0 L1308.9,576.4 L1313.0,576.2 L1317.1,576.4 L1320.6,577.0 L1323.0,578.0 L1324.4,579.7 L1325.2,582.1 L1325.5,585.0 L1325.2,587.9 L1324.4,590.3 L1323.0,592.0 L1320.6,593.0 L1317.1,593.6 L1313.0,593.8 L1308.9,593.6 L1305.4,593.0 L1303.0,592.0 L1301.6,590.3 L1300.8,587.9 L1300.5,585.0 L1300.8,582.1 L1301.6,579.7Z" fill="#d3eabd"/><path d="M902.0,580.0 L902.8,578.0 L904.3,576.7 L906.2,576.0 L908.4,576.0 L910.4,576.7 L912.0,578.0 L913.4,580.5 L914.9,584.1 L916.2,588.5 L917.3,593.0 L918.0,597.0 L918.0,600.0 L917.2,602.3 L915.7,604.4 L913.8,606.0 L911.6,607.0 L909.6,607.0 L908.0,606.0 L906.6,603.2 L905.1,598.8 L903.8,593.5 L902.7,588.1 L902.0,583.3Z" fill="#d3eabd"/><path d="M868.0,495.0 L869.1,493.4 L871.0,492.3 L873.4,491.6 L875.9,491.5 L878.2,491.9 L880.0,493.0 L881.6,495.1 L883.2,498.4 L884.6,502.2 L885.7,506.1 L886.2,509.6 L886.0,512.0 L884.7,513.6 L882.4,514.7 L879.6,515.4 L876.7,515.5 L874.0,515.1 L872.0,514.0 L870.6,511.9 L869.3,508.6 L868.4,504.8 L867.8,500.9 L867.6,497.4Z" fill="#d3eabd"/><path d="M922.0,498.0 L923.2,496.8 L924.9,495.8 L926.9,495.1 L929.0,494.9 L930.7,495.2 L932.0,496.0 L932.8,497.8 L933.4,500.6 L933.8,503.9 L933.9,507.2 L933.6,510.1 L933.0,512.0 L931.7,513.1 L929.8,513.7 L927.6,513.9 L925.3,513.6 L923.3,513.0 L922.0,512.0 L921.2,510.3 L920.8,507.9 L920.7,505.1 L920.9,502.3 L921.3,499.8Z" fill="#d3eabd"/><path d="M1075.0,545.0 L1076.2,544.0 L1078.0,543.3 L1080.0,543.1 L1082.0,543.3 L1083.8,544.0 L1085.0,545.0 L1085.7,546.8 L1086.1,549.4 L1086.2,552.5 L1086.1,555.6 L1085.7,558.2 L1085.0,560.0 L1083.8,561.0 L1082.0,561.7 L1080.0,561.9 L1078.0,561.7 L1076.2,561.0 L1075.0,560.0 L1074.3,558.2 L1073.9,555.6 L1073.8,552.5 L1073.9,549.4 L1074.3,546.8Z" fill="#d3eabd"/><path d="M874.7,434.3 L876.4,436.7 L878.5,440.4 L880.6,445.0 L882.8,450.1 L884.7,455.2 L886.3,460.0 L887.3,464.6 L887.9,469.5 L888.2,474.4 L888.7,479.3 L889.5,483.8 L891.0,488.0 L893.4,491.6 L896.4,494.8 L899.8,497.6 L903.3,500.5 L906.7,503.4 L909.7,506.7 L912.4,510.4 L915.1,514.3 L917.6,518.4 L919.9,522.4 L922.0,526.3 L923.7,530.0 L925.2,533.6 L926.6,537.2 L927.8,540.7 L928.5,543.9 L928.7,546.6 L928.3,548.7 L927.0,550.2 L925.0,551.4 L922.5,552.0 L919.7,552.2 L916.8,551.9 L914.3,551.0 L912.1,549.4 L910.0,547.0 L907.9,544.2 L905.7,541.0 L903.2,537.8 L900.3,534.7 L896.8,531.7 L892.9,528.5 L888.6,525.2 L884.4,522.0 L880.5,518.9 L877.0,516.0 L874.1,513.4 L871.6,511.0 L869.3,508.7 L867.2,506.5 L865.1,504.3 L863.0,502.0 L860.7,499.8 L858.2,497.9 L855.8,495.9 L853.7,493.7 L852.1,491.1 L851.3,488.0 L851.4,484.0 L852.2,479.4 L853.5,474.3 L855.1,469.2 L856.8,464.3 L858.3,460.0 L859.8,456.2 L861.3,452.6 L863.0,449.3 L864.7,446.3 L866.2,443.6 L867.7,441.3 L869.0,439.1 L870.0,436.9 L871.1,435.0 L872.1,433.8 L873.3,433.4Z" fill="#aad3df"/><path d="M606.0,455.0 L608.1,453.7 L611.3,453.2 L615.1,453.6 L618.9,454.6 L622.4,456.1 L625.0,458.0 L626.7,460.5 L628.0,463.8 L628.8,467.6 L629.4,471.7 L629.7,475.9 L630.0,480.0 L629.9,484.1 L629.3,488.5 L628.6,492.9 L627.9,497.3 L627.6,501.4 L628.0,505.0 L629.5,508.2 L632.1,511.2 L635.0,513.9 L637.7,516.3 L639.6,518.4 L640.0,520.0 L638.6,521.3 L635.9,522.3 L632.4,523.0 L628.5,523.2 L624.9,522.9 L622.0,522.0 L619.8,520.4 L617.9,518.0 L616.1,515.2 L614.6,512.0 L613.2,508.5 L612.0,505.0 L611.0,501.3 L610.1,497.3 L609.5,493.0 L609.0,488.6 L608.5,484.3 L608.0,480.0 L607.3,475.5 L606.4,470.6 L605.6,465.8 L605.0,461.3 L605.1,457.5Z" fill="url(#wet)"/><path d="M335.0,264.0 L335.6,267.3 L336.7,270.1 L337.4,272.4 L338.2,274.0 L339.1,277.1 L342.3,275.9 L345.1,276.8 L348.6,277.9 L352.3,276.1 L357.1,276.2 L358.6,273.6 L360.8,272.6 L363.4,272.8 L365.6,270.5 L369.2,272.7 L371.8,269.7 L374.9,269.1 L378.1,269.9 L380.6,267.2 L383.0,269.4 L385.3,270.9 L388.2,271.9 L385.8,275.4 L387.8,278.9 L387.6,282.9 L390.0,286.9 L390.9,289.1 L392.1,291.2 L393.8,292.8 L394.5,296.7 L393.1,301.4 L396.6,302.7 L398.9,304.4 L401.3,307.4 L405.6,306.5 L408.1,308.0 L410.3,305.0 L412.7,304.0 L415.7,306.6 L417.5,302.9 L420.3,305.3 L424.1,303.5 L428.3,304.0 L431.9,302.8 L436.1,300.9 L438.5,298.0 L441.3,297.9 L444.2,299.9 L447.1,301.5 L450.4,298.5 L453.3,300.2 L456.6,299.1 L459.4,300.5 L462.7,299.7 L465.5,301.7 L468.5,303.2 L471.9,302.5 L474.3,305.8 L478.1,303.6 L480.6,305.1 L483.1,306.2 L485.1,307.6 L486.6,309.9 L491.2,309.9 L493.5,313.1 L495.1,316.3 L499.8,318.8 L497.0,321.8 L498.4,324.2 L498.0,326.8 L499.1,329.3 L500.6,331.6 L502.9,333.1 L504.0,335.3 L505.4,337.4 L507.1,339.4 L509.1,341.3 L511.0,343.5 L512.3,346.7 L514.3,349.3 L517.0,351.4 L520.0,353.5 L524.9,352.5 L527.3,357.0 L532.3,356.2 L536.3,357.4 L539.7,360.0 L542.5,362.9 L546.7,362.6 L549.1,365.1 L551.0,367.6 L552.0,370.8 L555.3,371.3 L557.2,373.1 L559.1,374.7 L561.6,375.5 L560.9,379.6 L563.9,382.3 L567.2,383.6 L570.3,384.7 L571.5,387.6 L572.1,391.3 L569.5,395.0 L568.9,397.2 L569.9,399.7 L567.2,401.7 L568.0,404.2 L570.8,405.9 L569.1,409.2 L570.8,411.5 L573.7,413.2 L574.8,415.8 L574.3,419.2 L578.2,420.2 L578.0,423.2 L577.2,426.4 L581.0,426.8 L581.2,429.3 L582.1,433.9 L583.3,435.7 L584.8,437.5 L587.0,439.0 L586.6,442.0 L590.4,443.0 L589.1,446.7 L592.2,448.3 L592.4,451.2 L593.7,453.5 L596.2,455.1 L595.8,458.0 L598.5,461.4 L599.7,465.5 L603.1,467.5 L606.0,469.9 L608.2,472.8 L608.1,477.0 L611.7,479.0 L611.3,482.6 L611.1,485.8 L609.2,489.1 L611.9,493.2 L609.8,496.6 L612.7,499.3 L612.2,503.2 L614.0,506.4 L615.9,509.7 L618.3,513.0 L623.3,513.5 L624.9,518.2 L629.6,519.3 L632.1,522.4 L635.5,524.5 L636.8,528.8 L640.0,529.0 L640.6,531.7 L641.3,534.9 L643.0,537.4 L647.0,538.2 L647.1,542.5 L650.4,544.1 L653.5,545.8 L654.2,549.8 L656.7,551.8 L659.9,552.6 L662.3,554.4 L664.9,556.1 L667.6,557.5 L670.1,559.3 L672.7,560.6 L676.6,559.8 L679.5,560.9 L681.7,563.0 L683.4,565.5 L684.8,568.3 L685.8,571.4 L689.5,571.7 L691.6,573.8 L692.7,576.6 L692.9,580.0 L695.8,582.0 L698.4,584.6 L697.7,588.6 L697.9,592.3 L699.8,595.5 L702.5,598.3 L704.4,601.3 L704.1,604.5 L706.3,606.8 L707.2,609.2 L706.6,612.0 L705.6,614.8 L706.9,616.8 L708.5,618.7 L706.5,621.2 L710.0,623.3 L709.6,625.7 L709.1,628.2 L707.3,630.2 L705.3,632.2 L706.7,635.2 L704.1,636.9 L702.8,639.1 L704.0,642.0 L701.5,643.7 L700.5,645.8 L701.1,648.8 L701.3,651.6 L700.7,654.0 L699.1,656.0 L697.5,658.1 L699.0,660.8 L697.5,663.5 L696.9,666.7 L697.9,670.0 L696.6,673.6 L697.8,676.8 L698.4,679.7 L698.4,682.2 L699.2,684.0" stroke="#bfb3d3" stroke-width="5" fill="none" stroke-linejoin="round" opacity=".95"/><path d="M335.0,264.0 L334.8,267.3 L334.6,270.4 L335.2,273.4 L336.6,275.8 L339.2,276.8 L341.8,278.3 L345.1,275.8 L348.4,277.0 L352.6,277.3 L354.4,275.7 L356.8,275.6 L358.2,272.5 L360.9,272.8 L363.1,271.5 L365.9,271.8 L368.9,271.2 L371.5,268.8 L374.8,268.7 L377.9,268.4 L380.8,270.1 L383.0,269.5 L386.9,268.9 L386.6,272.3 L388.9,275.2 L387.6,279.0 L390.0,282.3 L390.9,284.3 L388.7,287.2 L391.4,289.0 L392.0,291.2 L390.3,294.1 L391.4,296.1 L394.7,298.5 L394.6,302.4 L397.6,303.7 L399.9,305.7 L403.7,305.1 L405.7,307.4 L408.0,306.5 L410.6,307.1 L413.1,306.5 L415.2,304.2 L417.7,303.9 L419.8,302.9 L421.8,302.5 L425.5,301.2 L429.4,300.7 L431.6,301.2 L433.4,298.9 L436.0,300.8 L438.5,299.6 L441.3,299.4 L444.2,301.1 L447.2,300.1 L450.3,299.7 L453.3,300.5 L456.3,301.5 L459.5,299.9 L462.0,303.3 L465.7,300.9 L468.3,303.8 L471.3,304.9 L475.0,303.1 L477.2,306.3 L480.4,305.9 L482.6,307.4 L485.5,306.6 L487.6,307.5 L489.5,308.7 L490.2,311.7 L494.7,311.7 L496.0,315.8 L496.4,317.6 L496.9,319.6 L499.1,321.6 L499.3,324.1 L499.0,326.7 L498.7,329.4 L501.4,331.3 L500.6,334.4 L501.9,336.7 L503.4,339.0 L507.2,339.4 L507.0,343.5 L511.1,343.5 L512.8,346.0 L514.8,348.7 L517.0,351.4 L521.0,351.7 L523.6,355.2 L527.8,355.8 L532.0,356.9 L535.8,358.6 L539.7,359.9 L543.3,361.4 L546.3,363.3 L548.0,366.6 L549.8,369.2 L553.7,368.9 L556.0,370.5 L555.8,374.5 L558.6,375.2 L560.6,376.6 L562.6,377.7 L563.4,379.9 L565.9,382.7 L569.1,383.8 L571.0,386.1 L572.9,389.4 L569.5,392.9 L571.6,395.7 L569.6,397.4 L568.0,399.4 L570.0,401.8 L568.3,404.1 L568.2,406.7 L570.0,408.9 L570.6,411.6 L573.8,413.1 L574.2,416.1 L576.3,418.1 L575.6,421.6 L578.4,423.0 L579.1,425.3 L578.7,428.2 L580.3,429.9 L581.1,432.0 L583.7,432.9 L584.8,434.8 L585.3,437.2 L587.2,438.9 L588.9,440.8 L589.7,443.4 L591.6,445.5 L592.2,448.3 L591.6,451.6 L592.8,454.0 L595.0,455.7 L596.5,457.6 L598.1,459.2 L599.9,460.3 L601.9,463.7 L603.0,467.6 L604.8,470.7 L608.1,472.9 L608.8,476.6 L610.2,479.6 L611.4,482.6 L611.5,485.9 L610.4,489.3 L610.9,493.1 L609.9,496.6 L612.0,499.5 L612.8,502.9 L613.8,506.5 L616.2,509.4 L619.9,511.3 L620.1,514.2 L622.3,514.8 L624.1,515.9 L626.9,515.8 L627.5,518.5 L629.7,519.2 L630.1,521.6 L633.1,524.0 L634.7,527.7 L636.5,529.0 L637.6,531.1 L640.4,532.0 L641.5,534.7 L643.2,537.2 L645.1,539.8 L648.4,541.4 L649.5,545.0 L651.7,547.5 L654.5,549.4 L656.4,552.2 L659.0,554.0 L662.4,554.3 L665.1,555.7 L668.3,556.0 L670.1,559.2 L672.6,560.8 L675.9,560.9 L677.9,563.1 L680.2,564.9 L682.4,566.7 L685.8,567.2 L686.6,570.6 L689.0,572.1 L690.7,574.5 L693.1,576.3 L694.3,579.2 L695.3,582.2 L697.1,585.1 L698.1,588.5 L701.4,591.2 L702.1,594.8 L702.2,598.4 L702.5,601.8 L704.8,604.3 L704.2,607.5 L705.2,609.9 L707.8,611.7 L707.2,614.4 L708.6,616.4 L709.6,618.5 L709.7,620.9 L709.2,623.3 L709.5,625.7 L709.1,628.2 L709.1,630.7 L707.1,632.7 L706.6,635.1 L705.1,637.2 L704.4,639.6 L704.7,642.3 L701.9,643.8 L703.5,647.2 L701.3,648.9 L700.6,651.3 L699.2,653.4 L699.2,656.0 L696.3,657.8 L697.3,660.6 L698.2,663.5 L696.5,666.7 L698.5,669.9 L697.5,673.5 L698.6,676.6 L698.3,679.7 L697.5,682.4 L699.2,684.0" stroke="#7f6fa3" stroke-width="1.4" fill="none" stroke-linejoin="round" opacity=".9"/><path d="M866.0,264.0 L864.7,265.1 L862.8,266.6 L860.7,268.4 L858.3,270.5 L855.9,272.7 L853.6,275.0 L851.4,277.6 L849.3,280.5 L847.2,283.6 L844.9,286.6 L842.4,289.4 L839.7,291.8 L836.6,293.6 L833.2,294.9 L829.6,296.0 L825.9,297.1 L822.3,298.4 L818.9,300.1 L815.6,302.4 L812.3,305.2 L809.1,308.1 L805.9,311.1 L802.9,313.8 L800.0,316.0 L797.3,317.8 L794.9,319.3 L792.5,320.5 L790.2,321.5 L787.7,322.3 L785.0,323.0 L782.1,323.4 L778.9,323.4 L775.7,323.2 L772.4,323.0 L769.2,322.8 L766.0,323.0 L762.9,323.4 L759.9,323.8 L756.8,324.4 L753.8,325.1 L750.9,325.9 L748.0,327.0 L745.1,328.3 L742.2,329.8 L739.4,331.4 L736.7,333.2 L734.2,335.1 L732.0,337.0 L730.1,339.0 L728.6,341.0 L727.2,343.2 L726.0,345.4 L725.0,347.7 L724.0,350.0 L723.2,352.4 L722.7,354.9 L722.3,357.4 L722.0,359.9 L721.6,362.5 L721.0,365.0 L720.3,367.5 L719.7,370.0 L718.9,372.4 L718.1,374.9 L717.1,377.4 L716.0,380.0 L714.7,382.6 L713.3,385.3 L711.7,388.1 L710.0,390.8 L708.1,393.4 L706.0,396.0 L703.8,398.4 L701.3,400.7 L698.8,403.0 L696.0,405.3 L693.1,407.6 L690.0,410.0 L686.7,412.5 L683.1,415.1 L679.4,417.7 L675.6,420.4 L671.8,423.1 L668.0,426.0 L664.2,429.0 L660.3,432.1 L656.4,435.3 L652.6,438.6 L648.7,441.8 L645.0,445.0 L641.3,448.2 L637.5,451.4 L633.8,454.7 L630.3,457.9 L627.0,461.0 L624.0,464.0 L621.3,467.0 L618.9,470.1 L616.7,473.2 L614.8,476.0 L613.2,478.3 L612.0,480.0" stroke="#a9cddc" stroke-width="5" fill="none" opacity=".95"/><path d="M766.0,323.0 L767.7,324.2 L770.0,325.8 L772.7,327.8 L775.7,329.9 L778.7,332.0 L781.6,334.1 L784.6,336.1 L787.7,338.2 L791.0,340.3 L794.1,342.4 L797.0,344.6 L799.5,346.6 L801.5,348.5 L803.2,350.4 L804.6,352.2 L805.9,354.0 L807.2,356.0 L808.7,358.2 L810.3,360.7 L811.9,363.3 L813.6,366.1 L815.2,369.0 L816.8,371.8 L818.3,374.5 L819.6,377.1 L820.6,379.7 L821.5,382.2 L822.6,384.8 L824.0,387.3 L826.0,390.0 L828.7,392.8 L832.0,395.7 L835.6,398.7 L839.3,401.6 L842.9,404.4 L846.0,407.0 L848.7,409.4 L851.1,411.5 L853.4,413.6 L855.6,415.6 L857.7,417.7 L860.0,420.0 L862.5,422.7 L865.2,425.7 L867.9,428.8 L870.4,431.7 L872.5,434.2 L874.0,436.0" stroke="#a9cddc" stroke-width="5" fill="none" opacity=".95"/><path d="M858.0,266.0 L856.9,267.6 L855.3,269.8 L853.5,272.4 L851.6,275.1 L849.7,277.7 L848.0,280.0 L846.5,282.0 L844.9,284.0 L843.4,285.9 L842.0,287.6 L840.8,289.0 L840.0,290.0" stroke="#b5d6e2" stroke-width="8" fill="none" stroke-linecap="round"/><path d="M866.0,264.0 L864.1,266.2 L860.6,268.4 L857.2,271.7 L853.5,274.9 L850.2,278.9 L849.4,281.6 L847.8,284.0 L845.1,285.5 L844.0,288.3 L842.1,290.4 L839.2,291.2 L837.4,293.2 L834.7,293.8 L832.3,295.2 L829.5,295.8 L827.0,297.3 L824.1,297.5 L821.2,298.2 L818.9,300.1 L816.2,301.5 L813.8,303.5 L812.0,306.4 L808.8,307.8 L806.6,310.2 L804.6,312.7 L802.6,315.0 L799.7,315.5 L796.1,318.6 L792.4,320.2 L788.7,321.4 L784.9,322.7 L780.5,322.7 L775.7,323.4 L770.8,322.4 L766.0,323.1 L761.3,322.9 L756.7,323.8 L752.5,326.1 L748.2,327.5 L743.9,329.4 L739.0,330.8 L735.5,334.2 L731.9,336.9 L729.6,340.2 L727.2,343.2 L725.6,346.6 L724.2,350.1 L722.8,353.6 L722.2,357.4 L721.1,361.1 L720.7,364.9 L719.3,368.5 L718.4,372.3 L716.9,375.9 L715.8,379.9 L714.5,384.2 L711.2,387.8 L708.4,391.7 L705.5,395.6 L702.5,399.5 L700.5,401.1 L699.0,403.4 L696.4,404.3 L694.5,406.3 L692.5,408.4 L690.4,410.6 L687.2,411.4 L684.5,413.2 L682.6,416.3 L679.2,417.3 L676.7,419.8 L674.0,422.2 L671.0,424.1 L667.7,425.7 L664.8,427.8 L662.7,431.1 L659.2,432.8 L656.9,435.9 L653.3,437.5 L650.8,440.4 L647.4,442.1 L644.5,444.4 L642.2,447.4 L638.9,449.2 L636.8,452.5 L634.3,455.2 L631.0,457.0 L629.1,460.0 L626.5,462.1 L624.1,464.1 L621.9,466.1 L620.5,468.9 L618.9,471.4 L616.2,472.8 L615.5,475.5 L612.3,478.4 L612.0,480.0" stroke="#9585b8" stroke-width="1.5" fill="none" opacity=".85"/><path d="M766.0,323.0 L769.0,324.6 L773.1,327.3 L775.0,329.2 L777.5,330.5 L779.8,332.0 L781.7,334.0 L783.4,336.2 L785.9,337.5 L788.3,339.1 L791.2,339.9 L793.3,342.0 L795.8,343.2 L798.0,344.7 L801.5,347.6 L803.9,350.5 L805.0,353.9 L807.2,356.8 L809.5,360.3 L811.9,364.3 L815.2,368.0 L817.5,372.3 L819.1,376.6 L820.4,380.4 L821.8,384.4 L823.9,388.3 L826.5,389.6 L827.8,392.2 L830.1,394.4 L832.9,396.4 L835.9,398.3 L838.4,400.8 L841.5,402.5 L843.3,405.6 L845.6,407.4 L848.0,408.9 L850.1,410.2 L852.9,414.0 L856.6,416.7 L859.6,420.4 L861.4,422.3 L863.8,424.2 L866.0,426.4 L867.8,428.9 L869.9,431.0 L871.9,432.7 L874.0,436.0" stroke="#9585b8" stroke-width="1.5" fill="none" opacity=".85"/><path d="M684.0,264.0 L684.3,266.2 L684.0,269.3 L684.1,273.0 L686.3,276.7 L685.8,281.0 L686.5,285.0 L687.3,288.7 L689.2,291.6 L690.0,294.3 L689.7,297.0 L689.4,299.5 L691.1,301.4 L691.9,305.7 L693.2,307.6 L693.2,310.2 L694.4,312.5 L697.1,314.0 L697.8,317.2 L701.4,317.9 L702.0,321.1 L703.8,323.1 L706.7,323.3 L709.0,326.3 L711.9,326.6 L714.5,327.3 L716.2,324.8 L718.6,324.7 L721.2,323.9 L722.7,321.7 L724.4,319.5" stroke="#a7d0df" stroke-width="3" fill="none"/><path d="M740,275 h5" stroke="#4a9fd6" stroke-width="1"/><path d="M742,283 h5" stroke="#4a9fd6" stroke-width="1"/><path d="M745,287 h5" stroke="#4a9fd6" stroke-width="1"/><path d="M818,306 h5" stroke="#4a9fd6" stroke-width="1"/><path d="M812,318 h5" stroke="#4a9fd6" stroke-width="1"/><path d="M822,322 h5" stroke="#4a9fd6" stroke-width="1"/><path d="M830,316 h5" stroke="#4a9fd6" stroke-width="1"/><path d="M808,327 h5" stroke="#4a9fd6" stroke-width="1"/><path d="M815,333 h5" stroke="#4a9fd6" stroke-width="1"/><ellipse cx="712" cy="308" rx="8" ry="3" fill="#d9d5d0"/><ellipse cx="738" cy="277" rx="8" ry="3" fill="#d9d5d0"/><path d="M650.0,440.0 L656.8,435.5 L665.0,431.7 L673.9,428.4 L683.0,425.6 L691.9,422.8 L700.0,420.0 L707.1,416.9 L713.7,413.5 L720.0,410.3 L726.3,407.6 L732.9,405.7 L740.0,405.0 L747.9,405.7 L756.3,407.6 L765.0,410.3 L773.7,413.5 L782.1,416.9 L790.0,420.0 L797.5,422.9 L804.8,425.9 L811.9,429.1 L818.5,432.4 L824.6,436.0 L830.0,440.0 L834.6,444.3 L838.5,448.9 L841.9,453.8 L844.8,458.9 L847.5,464.3 L850.0,470.0 L852.7,476.2 L855.4,483.0 L857.8,490.0 L859.6,497.0 L860.5,503.8 L860.0,510.0 L858.0,515.5 L854.6,520.4 L850.3,525.0 L845.4,529.6 L840.2,534.5 L835.0,540.0 L829.7,546.3 L823.9,553.3 L817.8,560.6 L811.7,567.8 L805.7,574.4 L800.0,580.0 L794.8,584.7 L790.0,588.9 L785.3,592.5 L780.6,595.6 L775.5,598.1 L770.0,600.0 L763.8,601.4 L757.0,602.2 L750.0,602.5 L743.0,602.2 L736.2,601.4 L730.0,600.0 L724.4,597.8 L719.3,594.8 L714.4,591.2 L709.6,587.4 L704.9,583.6 L700.0,580.0 L695.0,576.9 L690.0,574.1 L685.0,571.2 L680.0,568.1 L675.0,564.5 L670.0,560.0 L664.8,554.5 L659.3,548.1 L653.9,541.2 L648.7,534.1 L644.0,526.9 L640.0,520.0 L636.6,513.3 L633.4,506.7 L630.8,500.0 L628.8,493.3 L627.8,486.7 L628.0,480.0 L629.4,473.1 L631.8,465.9 L635.1,458.8 L639.3,451.9 L644.3,445.5Z" fill="#dcd6d4" opacity=".6" clip-path="url(#zclip)"/><path d="M724.0,330.0 L726.1,327.2 L729.2,324.7 L732.9,322.4 L737.0,320.4 L741.1,319.0 L745.0,318.0 L748.9,317.5 L753.2,317.4 L757.6,317.8 L761.7,318.7 L765.2,320.0 L768.0,322.0 L769.9,324.8 L771.3,328.5 L772.1,332.7 L772.4,337.1 L772.4,341.3 L772.0,345.0 L771.3,348.3 L770.1,351.6 L768.6,354.7 L766.7,357.5 L764.5,360.0 L762.0,362.0 L758.9,363.6 L755.3,365.0 L751.2,365.9 L747.2,366.5 L743.3,366.5 L740.0,366.0 L737.1,364.8 L734.3,363.0 L731.8,360.6 L729.5,357.9 L727.5,355.0 L726.0,352.0 L724.7,348.7 L723.6,344.9 L722.8,340.9 L722.5,336.9 L722.9,333.2Z" fill="#a9c48f" opacity=".75" clip-path="url(#zclip)"/><path d="M796.0,348.0 L797.6,346.4 L800.0,346.1 L803.0,346.8 L806.2,348.1 L809.3,350.0 L812.0,352.0 L814.4,354.5 L817.0,357.8 L819.4,361.5 L821.5,365.3 L823.1,368.9 L824.0,372.0 L824.2,374.6 L823.8,377.2 L822.9,379.5 L821.6,381.5 L819.9,383.0 L818.0,384.0 L815.5,384.6 L812.4,384.9 L808.9,384.8 L805.4,384.0 L802.3,382.5 L800.0,380.0 L798.3,375.9 L796.9,370.1 L795.9,363.5 L795.3,357.0 L795.3,351.6Z" fill="#a9c48f" opacity=".75" clip-path="url(#zclip)"/><path d="M790.0,405.0 L793.8,402.9 L798.8,401.1 L804.6,399.6 L810.6,398.6 L816.6,398.0 L822.0,398.0 L827.1,398.7 L832.2,400.0 L837.2,401.8 L842.0,403.9 L846.3,406.0 L850.0,408.0 L853.3,409.8 L856.4,411.7 L859.1,413.6 L861.1,415.6 L862.2,417.7 L862.0,420.0 L860.5,422.6 L857.7,425.5 L853.9,428.5 L849.6,431.4 L844.8,434.0 L840.0,436.0 L834.7,437.6 L828.7,438.9 L822.4,439.9 L816.0,440.5 L810.1,440.6 L805.0,440.0 L800.5,438.7 L796.3,436.6 L792.5,434.0 L789.3,431.1 L786.7,428.0 L785.0,425.0 L784.1,421.8 L783.8,418.2 L784.2,414.5 L785.4,410.9 L787.3,407.6Z" fill="#a9c48f" opacity=".75" clip-path="url(#zclip)"/><path d="M812.0,445.0 L814.2,443.1 L818.1,441.7 L823.1,440.6 L828.6,440.0 L833.7,439.8 L838.0,440.0 L841.7,440.7 L845.3,441.9 L848.8,443.4 L851.7,445.4 L853.8,447.6 L855.0,450.0 L855.0,453.0 L854.0,456.9 L852.3,460.9 L850.1,464.8 L847.6,468.0 L845.0,470.0 L842.2,470.8 L838.8,470.7 L835.2,470.0 L831.5,468.7 L828.0,467.0 L825.0,465.0 L822.0,462.4 L818.7,458.9 L815.6,455.0 L813.2,451.1 L811.8,447.6Z" fill="#a9c48f" opacity=".75" clip-path="url(#zclip)"/><path d="M845.0,480.0 L847.4,479.8 L849.9,480.6 L852.5,482.2 L854.9,484.4 L856.8,487.1 L858.0,490.0 L858.6,493.5 L858.6,498.0 L858.2,502.8 L857.5,507.6 L856.4,511.8 L855.0,515.0 L853.1,517.3 L850.6,519.1 L847.8,520.3 L844.9,520.9 L842.2,520.8 L840.0,520.0 L838.0,518.1 L836.0,515.2 L834.2,511.6 L832.9,507.6 L832.0,503.6 L832.0,500.0 L833.0,496.3 L834.8,492.2 L837.2,488.1 L839.9,484.4 L842.6,481.6Z" fill="#a9c48f" opacity=".75" clip-path="url(#zclip)"/><path d="M820.0,420.0 L821.4,418.2 L824.4,416.4 L828.4,414.8 L832.8,413.3 L836.8,412.4 L840.0,412.0 L842.5,412.4 L845.0,413.3 L847.2,414.8 L848.9,416.4 L849.9,418.2 L850.0,420.0 L848.9,422.0 L846.9,424.6 L844.1,427.2 L840.9,429.6 L837.8,431.3 L835.0,432.0 L832.1,431.3 L828.7,429.6 L825.3,427.2 L822.4,424.6 L820.5,422.0Z" fill="#a9c48f" opacity=".75" clip-path="url(#zclip)"/><path d="M734.0,493.5 L721.0,496.7 M746.8,502.1 L758.7,509.9 M774.9,565.8 L785.3,569.0 M650.9,571.0 L647.0,576.5 M855.9,619.1 L848.5,633.1 M666.2,324.7 L665.6,331.6 M673.7,395.0 L687.1,396.3 M731.3,581.2 L730.3,597.4 M744.9,525.4 L746.3,535.7 M859.5,628.7 L844.3,637.0 M702.5,391.2 L706.9,396.8 M806.2,444.1 L795.4,449.8 M850.3,582.7 L859.7,582.7 M839.4,465.7 L827.0,466.5 M646.8,515.1 L638.9,521.7 M650.0,423.1 L632.0,425.1 M657.1,396.4 L663.7,398.6 M813.3,375.1 L810.9,388.0 M673.9,546.9 L688.8,553.4 M656.8,450.4 L664.9,456.8 M853.3,569.1 L864.9,585.5 M678.5,442.2 L663.9,449.4 M653.1,626.7 L661.0,633.0 M807.7,422.0 L812.0,427.7 M650.7,500.6 L662.0,511.4 M715.5,460.5 L701.9,462.3 M762.2,588.6 L769.3,593.2 M838.9,573.5 L845.3,579.9 M800.1,611.5 L817.4,623.8 M832.9,507.1 L834.8,514.5 M638.9,618.4 L651.6,630.2 M689.1,575.4 L685.9,585.6 M670.3,543.3 L679.8,545.4 M758.7,584.2 L755.0,594.1 M841.0,383.2 L851.3,383.8 M732.5,338.7 L742.6,345.0 M761.6,360.8 L770.1,379.2 M855.5,523.6 L846.8,536.3 M662.3,330.9 L682.8,332.0 M791.2,618.5 L807.4,619.5 M740.9,546.5 L752.8,565.0 M647.3,489.3 L633.5,504.3 M799.5,538.1 L783.1,550.6 M710.9,532.4 L691.9,538.5 M725.9,565.1 L712.2,571.4 M773.7,438.5 L769.7,453.7 M648.4,518.2 L628.4,518.6 M797.5,440.4 L787.2,451.7 M731.3,579.9 L748.7,584.6 M636.9,506.4 L637.4,516.1 M790.6,474.1 L783.3,493.5 M688.8,323.5 L698.7,337.2 M676.6,372.6 L660.8,377.4 M731.6,596.4 L740.3,610.7 M675.7,453.6 L658.7,465.4 M832.5,439.2 L829.6,449.9 M661.3,473.9 L644.2,483.5 M793.6,614.5 L799.2,621.2 M733.6,405.3 L743.5,413.2 M773.9,473.1 L784.6,489.4 M855.9,460.3 L862.2,461.8 M830.8,332.9 L821.5,344.9 M701.1,565.4 L709.2,565.9 M734.6,327.7 L726.2,332.7 M662.4,334.6 L657.2,346.6 M774.9,523.1 L757.3,535.2 M787.4,381.8 L788.1,390.6 M632.5,466.4 L627.0,473.3 M692.6,427.2 L684.3,438.8 M771.3,554.4 L777.5,572.1 M838.4,347.0 L821.3,350.7 M659.9,460.6 L652.0,479.6 M716.7,496.3 L699.2,503.3 M847.2,463.7 L842.9,472.0 M796.0,573.7 L788.5,589.5 M679.1,599.0 L657.5,600.3 M753.5,565.1 L764.5,582.5 M826.8,428.0 L839.4,431.4 M756.6,558.2 L756.8,564.6 M816.1,339.9 L809.0,345.0 M707.1,564.3 L714.6,567.8 M748.8,544.3 L733.9,552.5 M847.5,472.7 L840.2,473.9 M680.9,483.3 L691.7,497.2 M776.9,482.1 L763.8,489.1 M701.7,438.2 L683.6,447.7 M677.9,583.7 L663.6,585.2 M761.8,382.3 L760.2,396.3 M769.2,328.6 L755.0,330.0 M722.1,568.3 L719.4,581.9 M788.9,340.4 L787.4,353.0 M850.1,606.3 L859.1,616.4 M659.2,454.4 L642.1,465.6 M739.6,418.3 L752.7,427.3 M842.8,360.1 L837.9,364.2 M674.6,390.5 L668.5,399.7 M711.7,512.1 L728.5,517.9 M658.2,478.2 L664.7,484.7 M752.0,455.4 L756.8,467.1 M751.7,369.5 L764.6,379.2 M776.8,484.2 L762.8,491.3 M827.1,392.1 L814.0,405.9 M837.6,417.9 L849.0,435.3 M680.2,629.5 L672.5,632.3 M685.0,545.2 L690.2,550.7 M821.4,450.7 L815.1,455.6 M722.6,532.4 L731.8,532.9 M786.9,602.5 L779.1,603.3 M746.3,555.0 L746.2,572.0 M673.5,341.9 L679.7,344.0 M756.9,479.6 L755.1,487.7 M672.4,383.2 L653.3,393.7 M843.2,349.5 L864.0,353.6 M736.3,557.1 L743.2,568.6 M748.5,453.3 L746.6,459.2 M791.2,581.7 L802.4,588.9 M800.0,445.6 L807.1,450.6 M747.9,324.8 L730.1,331.0 M792.1,586.8 L787.1,598.3 M767.9,476.3 L749.1,477.4 M689.4,602.5 L676.6,615.8 M817.4,445.7 L798.3,452.2 M789.8,557.9 L780.6,566.3 M796.2,341.9 L802.6,353.7 M632.4,430.2 L625.7,444.7 M683.4,612.8 L677.7,622.7 M781.7,496.6 L780.5,508.7 M860.0,519.1 L849.2,533.8 M855.4,327.1 L849.1,343.7 M689.0,444.5 L698.0,445.9 M716.4,350.5 L730.9,365.0 M756.5,477.4 L741.5,479.0 M858.9,517.8 L852.9,521.9 M767.4,555.4 L788.1,558.3 M666.8,466.2 L678.8,473.3 M770.6,338.1 L758.0,340.3 M751.2,505.3 L755.5,515.0 M780.7,493.8 L791.7,507.4 M698.1,324.3 L702.9,329.0 M666.0,553.9 L672.9,573.1" stroke="#9a9aa8" stroke-width=".6" fill="none" opacity=".55" clip-path="url(#zclip)"/><path d="M698.5,527.7 L683.1,539.3 M711.4,550.3 L724.9,551.5 M733.8,516.1 L724.9,519.0 M681.6,465.8 L679.6,480.6 M631.4,462.1 L643.6,476.7 M714.2,455.0 L706.5,460.7 M697.9,450.8 L716.4,450.9 M653.0,461.9 L634.6,463.0 M661.8,555.2 L659.8,571.2 M652.5,552.6 L641.5,568.8 M728.3,472.3 L732.5,481.4 M646.0,443.1 L654.9,455.5 M630.4,519.7 L636.1,530.0 M720.0,495.1 L727.6,506.6 M707.5,442.1 L699.3,442.8 M712.5,540.6 L729.9,541.6 M670.3,507.3 L678.8,507.6 M649.9,554.4 L663.8,564.3 M732.3,552.8 L738.0,563.6 M687.7,532.0 L703.7,537.6 M717.7,542.5 L736.9,544.7 M640.0,477.6 L633.5,495.5 M667.4,550.5 L665.7,562.2 M664.8,457.2 L674.3,459.6 M705.8,559.6 L713.3,563.8 M738.5,501.7 L741.7,512.1 M695.3,538.3 L697.1,551.2 M636.1,549.5 L650.0,550.9 M722.2,451.3 L709.3,465.8 M699.3,533.5 L711.8,537.8 M646.4,540.6 L654.5,551.3 M739.9,541.5 L726.5,542.5 M683.7,526.2 L684.5,537.7 M674.4,453.3 L681.9,471.7 M735.6,513.4 L735.6,525.4 M639.8,469.0 L625.5,480.7 M669.7,533.3 L657.3,543.9 M703.0,530.0 L709.9,544.9 M660.9,495.7 L648.7,506.5 M662.3,553.2 L655.5,566.5 M631.3,503.4 L642.6,514.8 M680.9,537.1 L673.1,552.8 M668.3,515.5 L656.1,528.7 M668.5,540.4 L653.6,546.8 M737.4,554.6 L736.6,568.9 M648.3,539.6 L634.8,542.3 M706.1,525.0 L699.4,532.5 M715.8,507.6 L709.4,518.9 M698.6,531.8 L691.7,547.0 M633.0,455.0 L635.9,470.5 M654.1,520.7 L650.7,528.5 M681.9,463.3 L691.3,464.9 M664.9,457.7 L671.8,462.5 M681.2,482.5 L676.0,496.7 M656.2,547.9 L669.0,547.9 M660.6,486.3 L677.5,492.6 M671.1,439.5 L667.9,448.1 M690.0,477.4 L685.1,496.3 M720.0,487.4 L707.0,496.1 M670.6,452.8 L666.3,466.9 M735.3,556.0 L731.2,567.5 M728.3,435.1 L742.2,440.0 M697.7,452.6 L690.3,469.8 M671.3,489.0 L680.1,496.5 M737.0,482.5 L718.1,484.8 M695.5,467.5 L681.6,468.3 M675.7,474.9 L661.8,475.6 M661.5,494.6 L675.8,500.4 M678.8,471.6 L664.9,483.0 M631.5,501.6 L644.0,516.1 M716.0,465.7 L722.6,473.1 M738.8,471.6 L734.2,484.6 M700.9,510.5 L694.4,517.3 M713.6,472.6 L712.4,484.6 M662.7,501.2 L664.0,513.5 M712.0,508.9 L722.9,510.1 M680.1,549.6 L666.5,554.6 M631.6,532.3 L635.0,546.8 M707.9,514.0 L709.0,532.9 M672.4,484.0 L663.1,488.6 M662.6,538.8 L680.3,542.5 M706.4,489.1 L717.2,502.7 M730.2,452.8 L731.2,467.4 M684.7,476.3 L698.1,483.3 M719.3,443.6 L732.7,455.3 M717.1,518.0 L733.7,519.3 M737.7,559.8 L732.6,566.7 M722.6,462.4 L714.0,479.8 M708.4,451.8 L719.9,466.9 M646.5,511.3 L649.1,520.9" stroke="#e8907a" stroke-width="1" fill="none" opacity=".55" clip-path="url(#zclip)"/><path d="M739.6,447.0 L750.7,450.9 M651.5,449.2 L647.9,464.2 M780.6,461.5 L782.9,472.4 M736.0,518.3 L724.5,520.6 M648.9,551.6 L661.7,558.1 M720.9,585.7 L718.5,599.7 M682.1,528.3 L692.9,539.4 M722.7,461.4 L731.4,469.3 M757.9,468.7 L748.8,480.1 M653.6,546.9 L662.5,549.5 M735.0,478.2 L723.2,483.0 M691.7,567.4 L706.9,568.8 M648.6,464.1 L633.9,466.4 M675.7,458.6 L661.1,459.8 M771.3,462.4 L766.9,473.0 M677.6,493.3 L673.6,504.1 M701.7,461.8 L689.2,469.2 M768.7,509.3 L757.0,515.3 M734.8,531.7 L726.6,540.4 M655.5,445.3 L662.3,450.3 M782.3,517.0 L776.4,522.4 M715.2,582.4 L710.7,593.8 M714.5,456.0 L723.0,460.4 M699.9,501.7 L691.1,505.2 M680.7,484.4 L690.2,489.7 M677.6,517.1 L694.8,518.9 M699.0,590.1 L690.8,602.3 M715.5,591.3 L729.2,596.6 M686.6,547.9 L680.2,555.2 M672.2,444.0 L678.7,449.8 M704.2,595.8 L708.8,605.9 M714.9,485.3 L704.8,496.6 M666.1,478.5 L657.2,493.4 M743.3,508.9 L735.3,509.5 M649.7,564.7 L652.1,572.8 M727.7,598.3 L727.1,609.8 M655.0,451.4 L642.7,455.4 M789.7,448.6 L795.9,454.5 M703.6,449.6 L712.0,458.3 M689.0,448.2 L706.5,450.3 M668.7,521.4 L672.7,534.1 M653.5,490.2 L666.2,494.7 M787.4,535.7 L778.3,540.1 M642.8,526.3 L643.4,540.0 M700.3,540.0 L689.1,553.0 M689.2,511.8 L680.5,517.2 M658.5,489.9 L673.6,494.1 M771.1,490.1 L779.2,493.6 M679.2,453.5 L682.2,466.9 M679.3,449.8 L674.3,456.7 M672.0,485.8 L675.4,494.1 M707.3,490.2 L697.6,499.7 M783.4,544.7 L773.4,554.1 M710.7,570.7 L702.5,586.2 M756.5,552.2 L767.2,564.2 M701.2,460.8 L710.7,462.8 M682.0,548.1 L687.4,554.9 M762.2,529.2 L770.7,529.9 M660.8,497.1 L645.0,504.6 M737.9,477.0 L740.5,488.3" stroke="#eeb67e" stroke-width="1" fill="none" opacity=".5" clip-path="url(#zclip)"/><path d="M650.0,470.0 L653.4,468.7 L658.1,466.7 L663.8,464.4 L669.6,462.2 L675.2,460.6 L680.0,460.0 L683.9,460.5 L687.4,461.9 L690.6,463.8 L693.7,465.9 L696.8,468.1 L700.0,470.0 L703.6,471.8 L707.4,473.7 L711.2,475.6 L714.8,477.4 L717.8,478.9 L720.0,480.0" stroke="#e99a84" stroke-width="1.4" fill="none" opacity=".6" clip-path="url(#zclip)"/><path d="M660.0,440.0 L663.3,441.3 L668.0,443.2 L673.4,445.4 L679.3,447.7 L684.9,450.0 L690.0,452.0 L694.7,453.9 L699.6,455.9 L704.4,457.8 L708.7,459.5 L712.3,460.9 L715.0,462.0" stroke="#e99a84" stroke-width="1.4" fill="none" opacity=".6" clip-path="url(#zclip)"/><path d="M640.0,500.0 L643.3,498.3 L647.8,495.8 L653.1,492.9 L658.9,490.0 L664.7,487.2 L670.0,485.0 L675.3,483.3 L681.1,481.8 L686.9,480.6 L692.2,479.5 L696.7,478.7 L700.0,478.0" stroke="#e99a84" stroke-width="1.4" fill="none" opacity=".6" clip-path="url(#zclip)"/><path d="M690.0,440.0 L691.1,443.3 L692.8,447.8 L694.7,453.1 L696.7,458.9 L698.5,464.7 L700.0,470.0 L701.2,475.3 L702.2,481.1 L703.1,486.9 L703.9,492.2 L704.5,496.7 L705.0,500.0" stroke="#e99a84" stroke-width="1.4" fill="none" opacity=".6" clip-path="url(#zclip)"/><path d="M676.0,433.0 L677.1,434.8 L678.7,437.3 L680.5,440.2 L682.2,443.5 L683.5,446.8 L684.0,450.0 L683.6,453.2 L682.7,456.4 L681.2,459.8 L679.6,463.2 L677.8,466.6 L676.0,470.0 L674.1,473.6 L671.9,477.4 L669.5,481.2 L667.3,484.8 L665.4,487.8 L664.0,490.0" stroke="#e99a84" stroke-width="1.4" fill="none" opacity=".6" clip-path="url(#zclip)"/><path d="M735.0,445.0 L737.7,446.4 L741.3,448.4 L745.6,450.8 L750.4,453.3 L755.3,455.7 L760.0,458.0 L765.1,460.2 L770.7,462.5 L776.6,464.8 L782.0,466.9 L786.7,468.7 L790.0,470.0" stroke="#e99a84" stroke-width="1.4" fill="none" opacity=".6" clip-path="url(#zclip)"/><path d="M700.0,500.0 L704.2,502.2 L710.0,505.2 L716.9,508.8 L724.4,512.6 L732.3,516.4 L740.0,520.0 L747.9,523.3 L756.5,526.7 L765.3,530.0 L774.1,533.3 L782.4,536.7 L790.0,540.0 L797.1,543.6 L804.1,547.4 L810.6,551.2 L816.5,554.8 L821.4,557.8 L825.0,560.0" stroke="#e99a84" stroke-width="1.4" fill="none" opacity=".6" clip-path="url(#zclip)"/><path d="M730.0,575.0 L733.4,578.9 L738.3,584.3 L744.1,590.6 L750.0,597.4 L755.5,604.1 L760.0,610.0 L763.5,615.6 L766.7,621.5 L769.4,627.2 L771.7,632.4 L773.5,636.8 L775.0,640.0" stroke="#e99a84" stroke-width="1.4" fill="none" opacity=".6" clip-path="url(#zclip)"/><path d="M772.0,325.0 L772.3,327.7 L772.7,331.3 L773.2,335.6 L773.7,340.4 L774.0,345.3 L774.0,350.0 L773.6,354.8 L772.8,359.8 L771.8,365.0 L770.9,370.2 L770.2,375.2 L770.0,380.0 L770.4,384.7 L771.2,389.6 L772.2,394.4 L773.4,398.7 L774.4,402.3 L775.0,405.0" stroke="#e99a84" stroke-width="1.4" fill="none" opacity=".6" clip-path="url(#zclip)"/><path d="M745.0,420.0 L744.3,422.7 L743.3,426.5 L742.2,430.9 L741.1,435.7 L740.3,440.5 L740.0,445.0 L740.3,449.5 L741.1,454.3 L742.2,459.1 L743.3,463.5 L744.3,467.3 L745.0,470.0" stroke="#e99a84" stroke-width="1.4" fill="none" opacity=".6" clip-path="url(#zclip)"/><path d="M790.0,440.0 L789.0,442.3 L787.8,445.6 L786.2,449.4 L784.4,453.3 L782.4,457.0 L780.0,460.0 L777.0,462.4 L773.3,464.4 L769.4,466.2 L765.6,467.8 L762.3,469.0 L760.0,470.0" stroke="#e99a84" stroke-width="1.4" fill="none" opacity=".6" clip-path="url(#zclip)"/><path d="M800.0,380.0 L801.6,381.7 L803.9,384.1 L806.6,386.9 L809.4,389.8 L812.3,392.6 L815.0,395.0 L817.7,397.1 L820.6,399.1 L823.4,400.9 L826.1,402.6 L828.4,404.0 L830.0,405.0" stroke="#e99a84" stroke-width="1.4" fill="none" opacity=".6" clip-path="url(#zclip)"/><path d="M640.0,470.0 L641.7,470.9 L644.3,471.9 L647.2,473.1 L650.2,474.8 L652.9,477.1 L655.0,480.0 L656.5,484.2 L657.6,489.6 L658.4,495.6 L659.1,501.5 L659.6,506.5 L660.0,510.0" stroke="#e99a84" stroke-width="1.4" fill="none" opacity=".6" clip-path="url(#zclip)"/><path d="M760.0,418.0 L763.3,419.5 L768.0,421.6 L773.4,424.1 L779.3,426.6 L784.9,428.7 L790.0,430.0 L794.5,430.3 L798.7,429.9 L802.8,429.0 L806.9,428.1 L810.9,427.7 L815.0,428.0 L819.5,429.3 L824.3,431.4 L829.1,433.9 L833.5,436.4 L837.3,438.5 L840.0,440.0" stroke="#f0c07e" stroke-width="1.2" fill="none" opacity=".6"/><path d="M780.0,470.0 L782.7,471.0 L786.5,472.2 L790.9,473.8 L795.7,475.6 L800.5,477.6 L805.0,480.0 L809.2,482.8 L813.5,485.9 L817.8,489.4 L822.0,493.0 L826.1,496.6 L830.0,500.0 L833.9,503.6 L837.8,507.4 L841.6,511.2 L845.0,514.8 L847.9,517.8 L850.0,520.0" stroke="#f0c07e" stroke-width="1.2" fill="none" opacity=".6"/><path d="M760.0,500.0 L758.9,503.3 L757.2,507.8 L755.3,513.1 L753.3,518.9 L751.5,524.7 L750.0,530.0 L748.8,535.3 L747.8,541.1 L746.9,546.9 L746.1,552.2 L745.5,556.7 L745.0,560.0" stroke="#f0c07e" stroke-width="1.2" fill="none" opacity=".6"/><clipPath id="zclip"><path d="M719.6,333.8 L728.3,331.9 L743.7,313.5 L755.3,309.7 L765.0,311.6 L774.7,318.4 L782.4,319.3 L783.3,325.1 L788.2,325.1 L795.0,328.0 L797.8,337.7 L805.6,340.6 L809.4,347.4 L810.4,354.1 L815.2,357.0 L821.0,359.9 L824.9,371.5 L829.7,373.5 L828.8,383.1 L823.0,390.9 L813.3,392.8 L808.5,388.9 L799.8,392.8 L795.0,406.3 L774.7,415.0 L768.9,407.3 L758.2,403.4 L757.3,390.9 L753.4,381.2 L755.3,367.7 L745.6,359.0 L737.9,364.8 L734.1,377.3 L731.2,383.1 L725.4,373.5 L720.5,356.1 L724.4,344.5Z"/><path d="M737.0,433.4 L747.6,414.0 L755.3,400.5 L758.2,403.4 L768.9,407.3 L774.7,415.0 L795.0,406.3 L799.8,392.8 L808.5,388.9 L813.3,392.8 L823.0,390.9 L828.8,383.1 L836.5,394.7 L842.3,400.5 L852.0,408.3 L865.5,419.9 L851.7,430.0 L837.2,440.1 L812.7,445.9 L798.2,458.9 L793.9,467.6 L795.3,483.5 L786.7,489.2 L772.2,496.5 L753.5,484.9 L747.7,476.2 L730.3,473.3 L725.3,470.5 L726.0,450.2 L736.1,430.0Z"/><path d="M724.4,374.4 L731.2,383.1 L734.1,377.3 L737.9,364.8 L745.6,359.0 L755.3,367.7 L753.4,381.2 L757.3,390.9 L755.3,400.5 L747.6,414.0 L737.0,433.4 L728.3,425.7 L697.3,414.0 L710.9,387.0Z"/><path d="M865.5,419.9 L875.2,431.5 L874.8,441.6 L858.9,451.7 L844.5,473.3 L847.4,480.6 L864.7,497.9 L857.5,506.6 L845.9,529.7 L830.0,523.9 L825.7,523.9 L809.8,505.1 L796.8,482.0 L795.3,483.5 L793.9,467.6 L798.2,458.9 L812.7,445.9 L837.2,440.1 L851.7,430.0Z"/><path d="M697.3,414.0 L691.1,420.0 L684.0,428.0 L673.3,434.2 L658.2,436.9 L649.3,446.7 L636.9,457.3 L627.1,462.7 L632.4,463.6 L629.8,482.2 L628.6,492.2 L631.0,504.4 L639.6,511.8 L651.8,519.1 L655.5,525.2 L656.7,516.7 L659.1,509.3 L667.7,500.8 L668.9,491.0 L672.6,487.3 L677.5,493.4 L686.0,500.8 L695.2,509.3 L721.5,480.0 L728.4,475.1 L725.3,470.5 L726.0,450.2 L736.1,430.0 L737.0,433.4 L728.3,425.7Z"/><path d="M721.5,480.0 L730.3,473.3 L743.3,490.7 L737.6,496.5 L736.1,503.7 L723.1,505.1 L717.3,516.7 L707.2,522.5 L705.6,520.3 L695.2,509.3Z"/><path d="M730.3,473.3 L747.7,476.2 L753.5,484.9 L772.2,496.5 L786.7,489.2 L775.1,499.3 L767.9,516.7 L766.5,531.1 L768.0,545.0 L769.5,559.6 L758.0,559.2 L736.8,545.7 L738.7,536.0 L719.4,530.2 L705.9,526.3 L707.2,522.5 L717.3,516.7 L723.1,505.1 L736.1,503.7 L737.6,496.5 L743.3,490.7Z"/><path d="M786.7,489.2 L796.8,482.0 L809.8,505.1 L825.7,523.9 L827.1,549.9 L817.1,551.0 L812.2,557.1 L793.9,554.7 L791.5,565.7 L780.5,588.9 L768.2,584.0 L758.5,579.1 L758.0,576.7 L758.0,559.2 L769.5,559.6 L768.0,545.0 L766.5,531.1 L767.9,516.7 L775.1,499.3Z"/><path d="M731.6,592.6 L745.0,580.3 L758.5,576.7 L758.5,579.1 L768.2,584.0 L780.5,588.9 L775.6,599.9 L782.9,603.6 L775.6,620.7 L771.9,635.4 L769.5,631.7 L751.1,628.0 L730.3,624.4 L715.7,623.1 L716.3,615.8 L720.6,604.8 L730.3,596.2Z"/><path d="M780.5,588.9 L791.5,565.7 L793.9,554.7 L812.2,557.1 L817.1,551.0 L825.7,549.8 L829.4,562.0 L826.9,588.9 L815.9,590.1 L802.5,596.2 L800.0,602.3 L782.9,603.6 L775.6,599.9Z"/><path d="M686.0,560.7 L704.4,554.6 L706.2,543.6 L707.1,540.0 L721.8,551.0 L719.3,553.4 L726.7,568.1 L731.6,592.6 L730.3,596.2 L720.6,604.8 L716.3,615.8 L714.4,598.7 L702.2,580.3 L690.0,565.7Z"/><path d="M672.6,487.3 L677.5,493.4 L686.0,500.8 L695.2,509.3 L671.3,553.3 L656.7,546.0 L654.2,533.8 L656.7,516.7 L659.1,509.3 L667.7,500.8 L668.9,491.0Z"/><path d="M695.2,509.3 L705.6,520.3 L706.8,531.3 L706.2,543.6 L704.4,554.6 L686.0,560.7 L671.3,553.3Z"/><path d="M705.9,526.3 L719.4,530.2 L738.7,536.0 L736.8,545.7 L758.0,559.2 L758.5,576.7 L745.0,580.3 L731.6,592.6 L726.7,568.1 L719.3,553.4 L721.8,551.0 L707.1,540.0Z"/></clipPath><path d="M719.6,333.8 L728.3,331.9 L743.7,313.5 L755.3,309.7 L765.0,311.6 L774.7,318.4 L782.4,319.3 L783.3,325.1 L788.2,325.1 L795.0,328.0 L797.8,337.7 L805.6,340.6 L809.4,347.4 L810.4,354.1 L815.2,357.0 L821.0,359.9 L824.9,371.5 L829.7,373.5 L828.8,383.1 L823.0,390.9 L813.3,392.8 L808.5,388.9 L799.8,392.8 L795.0,406.3 L774.7,415.0 L768.9,407.3 L758.2,403.4 L757.3,390.9 L753.4,381.2 L755.3,367.7 L745.6,359.0 L737.9,364.8 L734.1,377.3 L731.2,383.1 L725.4,373.5 L720.5,356.1 L724.4,344.5Z" fill="#8c3de0" fill-opacity="0.17" stroke="none"/><path d="M737.0,433.4 L747.6,414.0 L755.3,400.5 L758.2,403.4 L768.9,407.3 L774.7,415.0 L795.0,406.3 L799.8,392.8 L808.5,388.9 L813.3,392.8 L823.0,390.9 L828.8,383.1 L836.5,394.7 L842.3,400.5 L852.0,408.3 L865.5,419.9 L851.7,430.0 L837.2,440.1 L812.7,445.9 L798.2,458.9 L793.9,467.6 L795.3,483.5 L786.7,489.2 L772.2,496.5 L753.5,484.9 L747.7,476.2 L730.3,473.3 L725.3,470.5 L726.0,450.2 L736.1,430.0Z" fill="#181a2e" fill-opacity="0.25" stroke="none"/><path d="M724.4,374.4 L731.2,383.1 L734.1,377.3 L737.9,364.8 L745.6,359.0 L755.3,367.7 L753.4,381.2 L757.3,390.9 L755.3,400.5 L747.6,414.0 L737.0,433.4 L728.3,425.7 L697.3,414.0 L710.9,387.0Z" fill="#4b3ad6" fill-opacity="0.22" stroke="none"/><path d="M865.5,419.9 L875.2,431.5 L874.8,441.6 L858.9,451.7 L844.5,473.3 L847.4,480.6 L864.7,497.9 L857.5,506.6 L845.9,529.7 L830.0,523.9 L825.7,523.9 L809.8,505.1 L796.8,482.0 L795.3,483.5 L793.9,467.6 L798.2,458.9 L812.7,445.9 L837.2,440.1 L851.7,430.0Z" fill="#4b3ad6" fill-opacity="0.16" stroke="none"/><path d="M697.3,414.0 L691.1,420.0 L684.0,428.0 L673.3,434.2 L658.2,436.9 L649.3,446.7 L636.9,457.3 L627.1,462.7 L632.4,463.6 L629.8,482.2 L628.6,492.2 L631.0,504.4 L639.6,511.8 L651.8,519.1 L655.5,525.2 L656.7,516.7 L659.1,509.3 L667.7,500.8 L668.9,491.0 L672.6,487.3 L677.5,493.4 L686.0,500.8 L695.2,509.3 L721.5,480.0 L728.4,475.1 L725.3,470.5 L726.0,450.2 L736.1,430.0 L737.0,433.4 L728.3,425.7Z" fill="#7a33e6" fill-opacity="0.2" stroke="none"/><path d="M721.5,480.0 L730.3,473.3 L743.3,490.7 L737.6,496.5 L736.1,503.7 L723.1,505.1 L717.3,516.7 L707.2,522.5 L705.6,520.3 L695.2,509.3Z" fill="#1f5be6" fill-opacity="0.2" stroke="none"/><path d="M730.3,473.3 L747.7,476.2 L753.5,484.9 L772.2,496.5 L786.7,489.2 L775.1,499.3 L767.9,516.7 L766.5,531.1 L768.0,545.0 L769.5,559.6 L758.0,559.2 L736.8,545.7 L738.7,536.0 L719.4,530.2 L705.9,526.3 L707.2,522.5 L717.3,516.7 L723.1,505.1 L736.1,503.7 L737.6,496.5 L743.3,490.7Z" fill="#a424c4" fill-opacity="0.21" stroke="none"/><path d="M786.7,489.2 L796.8,482.0 L809.8,505.1 L825.7,523.9 L827.1,549.9 L817.1,551.0 L812.2,557.1 L793.9,554.7 L791.5,565.7 L780.5,588.9 L768.2,584.0 L758.5,579.1 L758.0,576.7 L758.0,559.2 L769.5,559.6 L768.0,545.0 L766.5,531.1 L767.9,516.7 L775.1,499.3Z" fill="#a424c4" fill-opacity="0.16" stroke="none"/><path d="M731.6,592.6 L745.0,580.3 L758.5,576.7 L758.5,579.1 L768.2,584.0 L780.5,588.9 L775.6,599.9 L782.9,603.6 L775.6,620.7 L771.9,635.4 L769.5,631.7 L751.1,628.0 L730.3,624.4 L715.7,623.1 L716.3,615.8 L720.6,604.8 L730.3,596.2Z" fill="#c42fd6" fill-opacity="0.18" stroke="none"/><path d="M780.5,588.9 L791.5,565.7 L793.9,554.7 L812.2,557.1 L817.1,551.0 L825.7,549.8 L829.4,562.0 L826.9,588.9 L815.9,590.1 L802.5,596.2 L800.0,602.3 L782.9,603.6 L775.6,599.9Z" fill="#c42fd6" fill-opacity="0.18" stroke="none"/><path d="M686.0,560.7 L704.4,554.6 L706.2,543.6 L707.1,540.0 L721.8,551.0 L719.3,553.4 L726.7,568.1 L731.6,592.6 L730.3,596.2 L720.6,604.8 L716.3,615.8 L714.4,598.7 L702.2,580.3 L690.0,565.7Z" fill="#7a33e6" fill-opacity="0.16" stroke="none"/><path d="M672.6,487.3 L677.5,493.4 L686.0,500.8 L695.2,509.3 L671.3,553.3 L656.7,546.0 L654.2,533.8 L656.7,516.7 L659.1,509.3 L667.7,500.8 L668.9,491.0Z" fill="#2b2484" fill-opacity="0.24" stroke="none"/><path d="M695.2,509.3 L705.6,520.3 L706.8,531.3 L706.2,543.6 L704.4,554.6 L686.0,560.7 L671.3,553.3Z" fill="#1f5be6" fill-opacity="0.2" stroke="none"/><path d="M705.9,526.3 L719.4,530.2 L738.7,536.0 L736.8,545.7 L758.0,559.2 L758.5,576.7 L745.0,580.3 L731.6,592.6 L726.7,568.1 L719.3,553.4 L721.8,551.0 L707.1,540.0Z" fill="#2b2484" fill-opacity="0.25" stroke="none"/><path d="M719.6,333.8 L728.3,331.9 L743.7,313.5 L755.3,309.7 L765.0,311.6 L774.7,318.4 L782.4,319.3 L783.3,325.1 L788.2,325.1 L795.0,328.0 L797.8,337.7 L805.6,340.6 L809.4,347.4 L810.4,354.1 L815.2,357.0 L821.0,359.9 L824.9,371.5 L829.7,373.5 L828.8,383.1 L823.0,390.9 L813.3,392.8 L808.5,388.9 L799.8,392.8 L795.0,406.3 L774.7,415.0 L768.9,407.3 L758.2,403.4 L757.3,390.9 L753.4,381.2 L755.3,367.7 L745.6,359.0 L737.9,364.8 L734.1,377.3 L731.2,383.1 L725.4,373.5 L720.5,356.1 L724.4,344.5Z" fill="none" stroke="#ffffff" stroke-opacity=".55" stroke-width="5" stroke-linejoin="round"/><path d="M737.0,433.4 L747.6,414.0 L755.3,400.5 L758.2,403.4 L768.9,407.3 L774.7,415.0 L795.0,406.3 L799.8,392.8 L808.5,388.9 L813.3,392.8 L823.0,390.9 L828.8,383.1 L836.5,394.7 L842.3,400.5 L852.0,408.3 L865.5,419.9 L851.7,430.0 L837.2,440.1 L812.7,445.9 L798.2,458.9 L793.9,467.6 L795.3,483.5 L786.7,489.2 L772.2,496.5 L753.5,484.9 L747.7,476.2 L730.3,473.3 L725.3,470.5 L726.0,450.2 L736.1,430.0Z" fill="none" stroke="#ffffff" stroke-opacity=".55" stroke-width="5" stroke-linejoin="round"/><path d="M724.4,374.4 L731.2,383.1 L734.1,377.3 L737.9,364.8 L745.6,359.0 L755.3,367.7 L753.4,381.2 L757.3,390.9 L755.3,400.5 L747.6,414.0 L737.0,433.4 L728.3,425.7 L697.3,414.0 L710.9,387.0Z" fill="none" stroke="#ffffff" stroke-opacity=".55" stroke-width="5" stroke-linejoin="round"/><path d="M865.5,419.9 L875.2,431.5 L874.8,441.6 L858.9,451.7 L844.5,473.3 L847.4,480.6 L864.7,497.9 L857.5,506.6 L845.9,529.7 L830.0,523.9 L825.7,523.9 L809.8,505.1 L796.8,482.0 L795.3,483.5 L793.9,467.6 L798.2,458.9 L812.7,445.9 L837.2,440.1 L851.7,430.0Z" fill="none" stroke="#ffffff" stroke-opacity=".55" stroke-width="5" stroke-linejoin="round"/><path d="M697.3,414.0 L691.1,420.0 L684.0,428.0 L673.3,434.2 L658.2,436.9 L649.3,446.7 L636.9,457.3 L627.1,462.7 L632.4,463.6 L629.8,482.2 L628.6,492.2 L631.0,504.4 L639.6,511.8 L651.8,519.1 L655.5,525.2 L656.7,516.7 L659.1,509.3 L667.7,500.8 L668.9,491.0 L672.6,487.3 L677.5,493.4 L686.0,500.8 L695.2,509.3 L721.5,480.0 L728.4,475.1 L725.3,470.5 L726.0,450.2 L736.1,430.0 L737.0,433.4 L728.3,425.7Z" fill="none" stroke="#ffffff" stroke-opacity=".55" stroke-width="5" stroke-linejoin="round"/><path d="M721.5,480.0 L730.3,473.3 L743.3,490.7 L737.6,496.5 L736.1,503.7 L723.1,505.1 L717.3,516.7 L707.2,522.5 L705.6,520.3 L695.2,509.3Z" fill="none" stroke="#ffffff" stroke-opacity=".55" stroke-width="5" stroke-linejoin="round"/><path d="M730.3,473.3 L747.7,476.2 L753.5,484.9 L772.2,496.5 L786.7,489.2 L775.1,499.3 L767.9,516.7 L766.5,531.1 L768.0,545.0 L769.5,559.6 L758.0,559.2 L736.8,545.7 L738.7,536.0 L719.4,530.2 L705.9,526.3 L707.2,522.5 L717.3,516.7 L723.1,505.1 L736.1,503.7 L737.6,496.5 L743.3,490.7Z" fill="none" stroke="#ffffff" stroke-opacity=".55" stroke-width="5" stroke-linejoin="round"/><path d="M786.7,489.2 L796.8,482.0 L809.8,505.1 L825.7,523.9 L827.1,549.9 L817.1,551.0 L812.2,557.1 L793.9,554.7 L791.5,565.7 L780.5,588.9 L768.2,584.0 L758.5,579.1 L758.0,576.7 L758.0,559.2 L769.5,559.6 L768.0,545.0 L766.5,531.1 L767.9,516.7 L775.1,499.3Z" fill="none" stroke="#ffffff" stroke-opacity=".55" stroke-width="5" stroke-linejoin="round"/><path d="M731.6,592.6 L745.0,580.3 L758.5,576.7 L758.5,579.1 L768.2,584.0 L780.5,588.9 L775.6,599.9 L782.9,603.6 L775.6,620.7 L771.9,635.4 L769.5,631.7 L751.1,628.0 L730.3,624.4 L715.7,623.1 L716.3,615.8 L720.6,604.8 L730.3,596.2Z" fill="none" stroke="#ffffff" stroke-opacity=".55" stroke-width="5" stroke-linejoin="round"/><path d="M780.5,588.9 L791.5,565.7 L793.9,554.7 L812.2,557.1 L817.1,551.0 L825.7,549.8 L829.4,562.0 L826.9,588.9 L815.9,590.1 L802.5,596.2 L800.0,602.3 L782.9,603.6 L775.6,599.9Z" fill="none" stroke="#ffffff" stroke-opacity=".55" stroke-width="5" stroke-linejoin="round"/><path d="M686.0,560.7 L704.4,554.6 L706.2,543.6 L707.1,540.0 L721.8,551.0 L719.3,553.4 L726.7,568.1 L731.6,592.6 L730.3,596.2 L720.6,604.8 L716.3,615.8 L714.4,598.7 L702.2,580.3 L690.0,565.7Z" fill="none" stroke="#ffffff" stroke-opacity=".55" stroke-width="5" stroke-linejoin="round"/><path d="M672.6,487.3 L677.5,493.4 L686.0,500.8 L695.2,509.3 L671.3,553.3 L656.7,546.0 L654.2,533.8 L656.7,516.7 L659.1,509.3 L667.7,500.8 L668.9,491.0Z" fill="none" stroke="#ffffff" stroke-opacity=".55" stroke-width="5" stroke-linejoin="round"/><path d="M695.2,509.3 L705.6,520.3 L706.8,531.3 L706.2,543.6 L704.4,554.6 L686.0,560.7 L671.3,553.3Z" fill="none" stroke="#ffffff" stroke-opacity=".55" stroke-width="5" stroke-linejoin="round"/><path d="M705.9,526.3 L719.4,530.2 L738.7,536.0 L736.8,545.7 L758.0,559.2 L758.5,576.7 L745.0,580.3 L731.6,592.6 L726.7,568.1 L719.3,553.4 L721.8,551.0 L707.1,540.0Z" fill="none" stroke="#ffffff" stroke-opacity=".55" stroke-width="5" stroke-linejoin="round"/><path d="M719.6,333.8 L728.3,331.9 L743.7,313.5 L755.3,309.7 L765.0,311.6 L774.7,318.4 L782.4,319.3 L783.3,325.1 L788.2,325.1 L795.0,328.0 L797.8,337.7 L805.6,340.6 L809.4,347.4 L810.4,354.1 L815.2,357.0 L821.0,359.9 L824.9,371.5 L829.7,373.5 L828.8,383.1 L823.0,390.9 L813.3,392.8 L808.5,388.9 L799.8,392.8 L795.0,406.3 L774.7,415.0 L768.9,407.3 L758.2,403.4 L757.3,390.9 L753.4,381.2 L755.3,367.7 L745.6,359.0 L737.9,364.8 L734.1,377.3 L731.2,383.1 L725.4,373.5 L720.5,356.1 L724.4,344.5Z" fill="none" stroke="#8c3de0" stroke-width="3.4" stroke-linejoin="round"/><path d="M697.3,414.0 L691.1,420.0 L684.0,428.0 L673.3,434.2 L658.2,436.9 L649.3,446.7 L636.9,457.3 L627.1,462.7 L632.4,463.6 L629.8,482.2 L628.6,492.2 L631.0,504.4 L639.6,511.8 L651.8,519.1 L655.5,525.2 L656.7,516.7 L659.1,509.3 L667.7,500.8 L668.9,491.0 L672.6,487.3 L677.5,493.4 L686.0,500.8 L695.2,509.3 L721.5,480.0 L728.4,475.1 L725.3,470.5 L726.0,450.2 L736.1,430.0 L737.0,433.4 L728.3,425.7Z" fill="none" stroke="#7a33e6" stroke-width="3.4" stroke-linejoin="round"/><path d="M865.5,419.9 L875.2,431.5 L874.8,441.6 L858.9,451.7 L844.5,473.3 L847.4,480.6 L864.7,497.9 L857.5,506.6 L845.9,529.7 L830.0,523.9 L825.7,523.9 L809.8,505.1 L796.8,482.0 L795.3,483.5 L793.9,467.6 L798.2,458.9 L812.7,445.9 L837.2,440.1 L851.7,430.0Z" fill="none" stroke="#4b3ad6" stroke-width="3.4" stroke-linejoin="round"/><path d="M737.0,433.4 L747.6,414.0 L755.3,400.5 L758.2,403.4 L768.9,407.3 L774.7,415.0 L795.0,406.3 L799.8,392.8 L808.5,388.9 L813.3,392.8 L823.0,390.9 L828.8,383.1 L836.5,394.7 L842.3,400.5 L852.0,408.3 L865.5,419.9 L851.7,430.0 L837.2,440.1 L812.7,445.9 L798.2,458.9 L793.9,467.6 L795.3,483.5 L786.7,489.2 L772.2,496.5 L753.5,484.9 L747.7,476.2 L730.3,473.3 L725.3,470.5 L726.0,450.2 L736.1,430.0Z" fill="none" stroke="#181a2e" stroke-width="3.4" stroke-linejoin="round"/><path d="M724.4,374.4 L731.2,383.1 L734.1,377.3 L737.9,364.8 L745.6,359.0 L755.3,367.7 L753.4,381.2 L757.3,390.9 L755.3,400.5 L747.6,414.0 L737.0,433.4 L728.3,425.7 L697.3,414.0 L710.9,387.0Z" fill="none" stroke="#4b3ad6" stroke-width="3.4" stroke-linejoin="round"/><path d="M686.0,560.7 L704.4,554.6 L706.2,543.6 L707.1,540.0 L721.8,551.0 L719.3,553.4 L726.7,568.1 L731.6,592.6 L730.3,596.2 L720.6,604.8 L716.3,615.8 L714.4,598.7 L702.2,580.3 L690.0,565.7Z" fill="none" stroke="#7a33e6" stroke-width="3.4" stroke-linejoin="round"/><path d="M731.6,592.6 L745.0,580.3 L758.5,576.7 L758.5,579.1 L768.2,584.0 L780.5,588.9 L775.6,599.9 L782.9,603.6 L775.6,620.7 L771.9,635.4 L769.5,631.7 L751.1,628.0 L730.3,624.4 L715.7,623.1 L716.3,615.8 L720.6,604.8 L730.3,596.2Z" fill="none" stroke="#c42fd6" stroke-width="3.4" stroke-linejoin="round"/><path d="M780.5,588.9 L791.5,565.7 L793.9,554.7 L812.2,557.1 L817.1,551.0 L825.7,549.8 L829.4,562.0 L826.9,588.9 L815.9,590.1 L802.5,596.2 L800.0,602.3 L782.9,603.6 L775.6,599.9Z" fill="none" stroke="#c42fd6" stroke-width="3.4" stroke-linejoin="round"/><path d="M786.7,489.2 L796.8,482.0 L809.8,505.1 L825.7,523.9 L827.1,549.9 L817.1,551.0 L812.2,557.1 L793.9,554.7 L791.5,565.7 L780.5,588.9 L768.2,584.0 L758.5,579.1 L758.0,576.7 L758.0,559.2 L769.5,559.6 L768.0,545.0 L766.5,531.1 L767.9,516.7 L775.1,499.3Z" fill="none" stroke="#a424c4" stroke-width="3.4" stroke-linejoin="round"/><path d="M721.5,480.0 L730.3,473.3 L743.3,490.7 L737.6,496.5 L736.1,503.7 L723.1,505.1 L717.3,516.7 L707.2,522.5 L705.6,520.3 L695.2,509.3Z" fill="none" stroke="#1f5be6" stroke-width="3.4" stroke-linejoin="round"/><path d="M730.3,473.3 L747.7,476.2 L753.5,484.9 L772.2,496.5 L786.7,489.2 L775.1,499.3 L767.9,516.7 L766.5,531.1 L768.0,545.0 L769.5,559.6 L758.0,559.2 L736.8,545.7 L738.7,536.0 L719.4,530.2 L705.9,526.3 L707.2,522.5 L717.3,516.7 L723.1,505.1 L736.1,503.7 L737.6,496.5 L743.3,490.7Z" fill="none" stroke="#a424c4" stroke-width="3.4" stroke-linejoin="round"/><path d="M695.2,509.3 L705.6,520.3 L706.8,531.3 L706.2,543.6 L704.4,554.6 L686.0,560.7 L671.3,553.3Z" fill="none" stroke="#1f5be6" stroke-width="3.4" stroke-linejoin="round"/><path d="M672.6,487.3 L677.5,493.4 L686.0,500.8 L695.2,509.3 L671.3,553.3 L656.7,546.0 L654.2,533.8 L656.7,516.7 L659.1,509.3 L667.7,500.8 L668.9,491.0Z" fill="none" stroke="#2b2484" stroke-width="3.4" stroke-linejoin="round"/><path d="M705.9,526.3 L719.4,530.2 L738.7,536.0 L736.8,545.7 L758.0,559.2 L758.5,576.7 L745.0,580.3 L731.6,592.6 L726.7,568.1 L719.3,553.4 L721.8,551.0 L707.1,540.0Z" fill="none" stroke="#2b2484" stroke-width="3.4" stroke-linejoin="round"/><text x="296.5" y="274.5" font-size="12.5" font-style="italic" fill="#2b8a2e" text-anchor="middle" stroke="#ffffff" stroke-opacity=".45" stroke-width="2" paint-order="stroke">Parque</text><text x="296.5" y="288.5" font-size="12.5" font-style="italic" fill="#2b8a2e" text-anchor="middle" stroke="#ffffff" stroke-opacity=".45" stroke-width="2" paint-order="stroke">Nacional</text><text x="296.5" y="302.5" font-size="12.5" font-style="italic" fill="#2b8a2e" text-anchor="middle" stroke="#ffffff" stroke-opacity=".45" stroke-width="2" paint-order="stroke">Río Pilcomayo</text><text x="712" y="321" font-size="10.2" fill="#3a3a3a" text-anchor="start" stroke="#ffffff" stroke-opacity=".8" stroke-width="2.5" paint-order="stroke" stroke-linejoin="round">Villa Hayes</text><text x="690" y="375" font-size="10.2" fill="#3a3a3a" text-anchor="start" stroke="#ffffff" stroke-opacity=".8" stroke-width="2.5" paint-order="stroke" stroke-linejoin="round">Remanso Tita</text><text x="838.5" y="347" font-size="10.2" fill="#3a3a3a" text-anchor="start" stroke="#ffffff" stroke-opacity=".8" stroke-width="2.5" paint-order="stroke" stroke-linejoin="round">Emboscada</text><text x="574" y="420.5" font-size="10.2" fill="#3a3a3a" text-anchor="start" stroke="#ffffff" stroke-opacity=".8" stroke-width="2.5" paint-order="stroke" stroke-linejoin="round">José Falcón</text><text x="615" y="448.5" font-size="10.2" fill="#3a3a3a" text-anchor="start" stroke="#ffffff" stroke-opacity=".8" stroke-width="2.5" paint-order="stroke" stroke-linejoin="round">Nueva Asunción</text><text x="822.7" y="497.5" font-size="10.2" fill="#3a3a3a" text-anchor="start" stroke="#ffffff" stroke-opacity=".8" stroke-width="2.5" paint-order="stroke" stroke-linejoin="round">Aregua</text><text x="868" y="495" font-size="10.2" fill="#3a3a3a" text-anchor="start" stroke="#ffffff" stroke-opacity=".8" stroke-width="2.5" paint-order="stroke" stroke-linejoin="round">San Bernardino</text><text x="844.5" y="564" font-size="10.2" fill="#3a3a3a" text-anchor="start" stroke="#ffffff" stroke-opacity=".8" stroke-width="2.5" paint-order="stroke" stroke-linejoin="round">Itauguá</text><text x="891.5" y="572" font-size="10.2" fill="#3a3a3a" text-anchor="start" stroke="#ffffff" stroke-opacity=".8" stroke-width="2.5" paint-order="stroke" stroke-linejoin="round">Ypacaraí</text><text x="933" y="548" font-size="10.2" fill="#3a3a3a" text-anchor="start" stroke="#ffffff" stroke-opacity=".8" stroke-width="2.5" paint-order="stroke" stroke-linejoin="round">Jhugua Jhu</text><text x="997.3" y="557" font-size="10.2" fill="#3a3a3a" text-anchor="start" stroke="#ffffff" stroke-opacity=".8" stroke-width="2.5" paint-order="stroke" stroke-linejoin="round">Caacupé</text><text x="1115.2" y="554.5" font-size="10.2" fill="#3a3a3a" text-anchor="start" stroke="#ffffff" stroke-opacity=".8" stroke-width="2.5" paint-order="stroke" stroke-linejoin="round">Eusebio Ayala</text><text x="1172.3" y="494.5" font-size="10.2" fill="#3a3a3a" text-anchor="start" stroke="#ffffff" stroke-opacity=".8" stroke-width="2.5" paint-order="stroke" stroke-linejoin="round">Isla Pucú</text><text x="1240.5" y="579.5" font-size="10.2" fill="#3a3a3a" text-anchor="start" stroke="#ffffff" stroke-opacity=".8" stroke-width="2.5" paint-order="stroke" stroke-linejoin="round">Santa Elena</text><text x="1067.3" y="620" font-size="10.2" fill="#3a3a3a" text-anchor="start" stroke="#ffffff" stroke-opacity=".8" stroke-width="2.5" paint-order="stroke" stroke-linejoin="round">Piribebuy</text><text x="932.5" y="635.5" font-size="10.2" fill="#3a3a3a" text-anchor="start" stroke="#ffffff" stroke-opacity=".8" stroke-width="2.5" paint-order="stroke" stroke-linejoin="round">Pirayú</text><text x="848.7" y="655" font-size="10.2" fill="#3a3a3a" text-anchor="start" stroke="#ffffff" stroke-opacity=".8" stroke-width="2.5" paint-order="stroke" stroke-linejoin="round">Itá</text><text x="691" y="651.5" font-size="10.2" fill="#3a3a3a" text-anchor="start" stroke="#ffffff" stroke-opacity=".8" stroke-width="2.5" paint-order="stroke" stroke-linejoin="round">Villeta</text><text x="759" y="641.5" font-size="10.2" fill="#3a3a3a" text-anchor="start" stroke="#ffffff" stroke-opacity=".8" stroke-width="2.5" paint-order="stroke" stroke-linejoin="round">Guarambaré</text><text x="763" y="598" font-size="10.2" fill="#3a3a3a" text-anchor="start" stroke="#ffffff" stroke-opacity=".8" stroke-width="2.5" paint-order="stroke" stroke-linejoin="round">Julián Augusto</text><text x="785" y="610" font-size="10.2" fill="#3a3a3a" text-anchor="start" stroke="#ffffff" stroke-opacity=".8" stroke-width="2.5" paint-order="stroke" stroke-linejoin="round">Saldívar</text><text x="926.5" y="456.5" font-size="10.2" fill="#3a3a3a" text-anchor="start" stroke="#ffffff" stroke-opacity=".8" stroke-width="2.5" paint-order="stroke" stroke-linejoin="round">Altos</text><text x="983.3" y="470.5" font-size="10.2" fill="#3a3a3a" text-anchor="start" stroke="#ffffff" stroke-opacity=".8" stroke-width="2.5" paint-order="stroke" stroke-linejoin="round">Atyrá</text><text x="1045.2" y="455.5" font-size="10.2" fill="#3a3a3a" text-anchor="start" stroke="#ffffff" stroke-opacity=".8" stroke-width="2.5" paint-order="stroke" stroke-linejoin="round">Tobatí</text><text x="1220.2" y="439" font-size="10.2" fill="#3a3a3a" text-anchor="start" stroke="#ffffff" stroke-opacity=".8" stroke-width="2.5" paint-order="stroke" stroke-linejoin="round">Caraguatay</text><text x="1027" y="283.5" font-size="10.2" fill="#3a3a3a" text-anchor="start" stroke="#ffffff" stroke-opacity=".8" stroke-width="2.5" paint-order="stroke" stroke-linejoin="round">Arroyos y</text><text x="1032.3" y="295.5" font-size="10.2" fill="#3a3a3a" text-anchor="start" stroke="#ffffff" stroke-opacity=".8" stroke-width="2.5" paint-order="stroke" stroke-linejoin="round">Esteros</text><text x="1146" y="363" font-size="10.2" fill="#3a3a3a" text-anchor="start" stroke="#ffffff" stroke-opacity=".8" stroke-width="2.5" paint-order="stroke" stroke-linejoin="round">Primero de</text><text x="1157.6" y="375.5" font-size="10.2" fill="#3a3a3a" text-anchor="start" stroke="#ffffff" stroke-opacity=".8" stroke-width="2.5" paint-order="stroke" stroke-linejoin="round">Marzo</text><text x="1294" y="515.5" font-size="10.2" fill="#3a3a3a" text-anchor="start" stroke="#ffffff" stroke-opacity=".8" stroke-width="2.5" paint-order="stroke" stroke-linejoin="round">Mbocayaty</text><text x="1293" y="528" font-size="10.2" fill="#3a3a3a" text-anchor="start" stroke="#ffffff" stroke-opacity=".8" stroke-width="2.5" paint-order="stroke" stroke-linejoin="round">del Yhaguy</text><text x="1209" y="613" font-size="10.2" fill="#3a3a3a" text-anchor="start" stroke="#ffffff" stroke-opacity=".8" stroke-width="2.5" paint-order="stroke" stroke-linejoin="round">Itacurubí</text><text x="1195.7" y="625" font-size="10.2" fill="#3a3a3a" text-anchor="start" stroke="#ffffff" stroke-opacity=".8" stroke-width="2.5" paint-order="stroke" stroke-linejoin="round">de la Cordillera</text><text x="1288.8" y="669" font-size="10.2" fill="#3a3a3a" text-anchor="start" stroke="#ffffff" stroke-opacity=".8" stroke-width="2.5" paint-order="stroke" stroke-linejoin="round">San José de</text><text x="1289.5" y="681" font-size="10.2" fill="#3a3a3a" text-anchor="start" stroke="#ffffff" stroke-opacity=".8" stroke-width="2.5" paint-order="stroke" stroke-linejoin="round">los Arroyos</text><text x="750" y="385" font-size="13" fill="#333333" text-anchor="start" stroke="#ffffff" stroke-opacity=".8" stroke-width="2.5" paint-order="stroke" stroke-linejoin="round">Limpio</text><text x="684.4" y="408.3" font-size="12.6" fill="#333333" text-anchor="start" stroke="#ffffff" stroke-opacity=".8" stroke-width="2.5" paint-order="stroke" stroke-linejoin="round">Mariano Roque</text><text x="708.9" y="425" font-size="12.6" fill="#333333" text-anchor="start" stroke="#ffffff" stroke-opacity=".8" stroke-width="2.5" paint-order="stroke" stroke-linejoin="round">Alonso</text><text x="626.6" y="472.4" font-size="16" fill="#333333" text-anchor="start" stroke="#ffffff" stroke-opacity=".8" stroke-width="2.5" paint-order="stroke" stroke-linejoin="round">Asunción</text><text x="742.8" y="461" font-size="13" fill="#333333" text-anchor="start" stroke="#ffffff" stroke-opacity=".8" stroke-width="2.5" paint-order="stroke" stroke-linejoin="round">Luque</text><text x="637.3" y="524.4" font-size="12.6" fill="#333333" text-anchor="start" stroke="#ffffff" stroke-opacity=".8" stroke-width="2.5" paint-order="stroke" stroke-linejoin="round">Lambaré</text><text x="708.8" y="523" font-size="13.6" fill="#333333" text-anchor="start" stroke="#ffffff" stroke-opacity=".8" stroke-width="2.5" paint-order="stroke" stroke-linejoin="round">San Lorenzo</text><text x="701.6" y="562.6" font-size="12.6" fill="#333333" text-anchor="start" stroke="#ffffff" stroke-opacity=".8" stroke-width="2.5" paint-order="stroke" stroke-linejoin="round">Ñemby</text><path d="M719.6,333.8 L728.3,331.9 L743.7,313.5 L755.3,309.7 L765.0,311.6 L774.7,318.4 L782.4,319.3 L783.3,325.1 L788.2,325.1 L795.0,328.0 L797.8,337.7 L805.6,340.6 L809.4,347.4 L810.4,354.1 L815.2,357.0 L821.0,359.9 L824.9,371.5 L829.7,373.5 L828.8,383.1 L823.0,390.9 L813.3,392.8 L808.5,388.9 L799.8,392.8 L795.0,406.3 L774.7,415.0 L768.9,407.3 L758.2,403.4 L757.3,390.9 L753.4,381.2 L755.3,367.7 L745.6,359.0 L737.9,364.8 L734.1,377.3 L731.2,383.1 L725.4,373.5 L720.5,356.1 L724.4,344.5Z" fill="none" stroke="#8c3de0" stroke-width="3.4" stroke-linejoin="round" opacity=".9"/><path d="M697.3,414.0 L691.1,420.0 L684.0,428.0 L673.3,434.2 L658.2,436.9 L649.3,446.7 L636.9,457.3 L627.1,462.7 L632.4,463.6 L629.8,482.2 L628.6,492.2 L631.0,504.4 L639.6,511.8 L651.8,519.1 L655.5,525.2 L656.7,516.7 L659.1,509.3 L667.7,500.8 L668.9,491.0 L672.6,487.3 L677.5,493.4 L686.0,500.8 L695.2,509.3 L721.5,480.0 L728.4,475.1 L725.3,470.5 L726.0,450.2 L736.1,430.0 L737.0,433.4 L728.3,425.7Z" fill="none" stroke="#7a33e6" stroke-width="3.4" stroke-linejoin="round" opacity=".9"/><path d="M865.5,419.9 L875.2,431.5 L874.8,441.6 L858.9,451.7 L844.5,473.3 L847.4,480.6 L864.7,497.9 L857.5,506.6 L845.9,529.7 L830.0,523.9 L825.7,523.9 L809.8,505.1 L796.8,482.0 L795.3,483.5 L793.9,467.6 L798.2,458.9 L812.7,445.9 L837.2,440.1 L851.7,430.0Z" fill="none" stroke="#4b3ad6" stroke-width="3.4" stroke-linejoin="round" opacity=".9"/><path d="M737.0,433.4 L747.6,414.0 L755.3,400.5 L758.2,403.4 L768.9,407.3 L774.7,415.0 L795.0,406.3 L799.8,392.8 L808.5,388.9 L813.3,392.8 L823.0,390.9 L828.8,383.1 L836.5,394.7 L842.3,400.5 L852.0,408.3 L865.5,419.9 L851.7,430.0 L837.2,440.1 L812.7,445.9 L798.2,458.9 L793.9,467.6 L795.3,483.5 L786.7,489.2 L772.2,496.5 L753.5,484.9 L747.7,476.2 L730.3,473.3 L725.3,470.5 L726.0,450.2 L736.1,430.0Z" fill="none" stroke="#181a2e" stroke-width="3.4" stroke-linejoin="round" opacity=".9"/><path d="M724.4,374.4 L731.2,383.1 L734.1,377.3 L737.9,364.8 L745.6,359.0 L755.3,367.7 L753.4,381.2 L757.3,390.9 L755.3,400.5 L747.6,414.0 L737.0,433.4 L728.3,425.7 L697.3,414.0 L710.9,387.0Z" fill="none" stroke="#4b3ad6" stroke-width="3.4" stroke-linejoin="round" opacity=".9"/><path d="M686.0,560.7 L704.4,554.6 L706.2,543.6 L707.1,540.0 L721.8,551.0 L719.3,553.4 L726.7,568.1 L731.6,592.6 L730.3,596.2 L720.6,604.8 L716.3,615.8 L714.4,598.7 L702.2,580.3 L690.0,565.7Z" fill="none" stroke="#7a33e6" stroke-width="3.4" stroke-linejoin="round" opacity=".9"/><path d="M731.6,592.6 L745.0,580.3 L758.5,576.7 L758.5,579.1 L768.2,584.0 L780.5,588.9 L775.6,599.9 L782.9,603.6 L775.6,620.7 L771.9,635.4 L769.5,631.7 L751.1,628.0 L730.3,624.4 L715.7,623.1 L716.3,615.8 L720.6,604.8 L730.3,596.2Z" fill="none" stroke="#c42fd6" stroke-width="3.4" stroke-linejoin="round" opacity=".9"/><path d="M780.5,588.9 L791.5,565.7 L793.9,554.7 L812.2,557.1 L817.1,551.0 L825.7,549.8 L829.4,562.0 L826.9,588.9 L815.9,590.1 L802.5,596.2 L800.0,602.3 L782.9,603.6 L775.6,599.9Z" fill="none" stroke="#c42fd6" stroke-width="3.4" stroke-linejoin="round" opacity=".9"/><path d="M786.7,489.2 L796.8,482.0 L809.8,505.1 L825.7,523.9 L827.1,549.9 L817.1,551.0 L812.2,557.1 L793.9,554.7 L791.5,565.7 L780.5,588.9 L768.2,584.0 L758.5,579.1 L758.0,576.7 L758.0,559.2 L769.5,559.6 L768.0,545.0 L766.5,531.1 L767.9,516.7 L775.1,499.3Z" fill="none" stroke="#a424c4" stroke-width="3.4" stroke-linejoin="round" opacity=".9"/><path d="M721.5,480.0 L730.3,473.3 L743.3,490.7 L737.6,496.5 L736.1,503.7 L723.1,505.1 L717.3,516.7 L707.2,522.5 L705.6,520.3 L695.2,509.3Z" fill="none" stroke="#1f5be6" stroke-width="3.4" stroke-linejoin="round" opacity=".9"/><path d="M730.3,473.3 L747.7,476.2 L753.5,484.9 L772.2,496.5 L786.7,489.2 L775.1,499.3 L767.9,516.7 L766.5,531.1 L768.0,545.0 L769.5,559.6 L758.0,559.2 L736.8,545.7 L738.7,536.0 L719.4,530.2 L705.9,526.3 L707.2,522.5 L717.3,516.7 L723.1,505.1 L736.1,503.7 L737.6,496.5 L743.3,490.7Z" fill="none" stroke="#a424c4" stroke-width="3.4" stroke-linejoin="round" opacity=".9"/><path d="M695.2,509.3 L705.6,520.3 L706.8,531.3 L706.2,543.6 L704.4,554.6 L686.0,560.7 L671.3,553.3Z" fill="none" stroke="#1f5be6" stroke-width="3.4" stroke-linejoin="round" opacity=".9"/><path d="M672.6,487.3 L677.5,493.4 L686.0,500.8 L695.2,509.3 L671.3,553.3 L656.7,546.0 L654.2,533.8 L656.7,516.7 L659.1,509.3 L667.7,500.8 L668.9,491.0Z" fill="none" stroke="#2b2484" stroke-width="3.4" stroke-linejoin="round" opacity=".9"/><path d="M705.9,526.3 L719.4,530.2 L738.7,536.0 L736.8,545.7 L758.0,559.2 L758.5,576.7 L745.0,580.3 L731.6,592.6 L726.7,568.1 L719.3,553.4 L721.8,551.0 L707.1,540.0Z" fill="none" stroke="#2b2484" stroke-width="3.4" stroke-linejoin="round" opacity=".9"/><circle cx="772.1" cy="360.9" r="5" fill="#f7933a" stroke="#ffffff" stroke-width="1.5" stroke-dasharray="2 1.5" opacity=".95"/><circle cx="731.2" cy="398.6" r="5" fill="#f7933a" stroke="#ffffff" stroke-width="1.5" stroke-dasharray="2 1.5" opacity=".95"/><circle cx="786.7" cy="437.8" r="5" fill="#f7933a" stroke="#ffffff" stroke-width="1.5" stroke-dasharray="2 1.5" opacity=".95"/><circle cx="680.8" cy="466.8" r="5" fill="#f7933a" stroke="#ffffff" stroke-width="1.5" stroke-dasharray="2 1.5" opacity=".95"/><circle cx="833.7" cy="476" r="5" fill="#f7933a" stroke="#ffffff" stroke-width="1.5" stroke-dasharray="2 1.5" opacity=".95"/><circle cx="719.6" cy="499.8" r="5" fill="#f7933a" stroke="#ffffff" stroke-width="1.5" stroke-dasharray="2 1.5" opacity=".95"/><circle cx="747.8" cy="518.9" r="5" fill="#f7933a" stroke="#ffffff" stroke-width="1.5" stroke-dasharray="2 1.5" opacity=".95"/><circle cx="790.8" cy="536" r="5" fill="#f7933a" stroke="#ffffff" stroke-width="1.5" stroke-dasharray="2 1.5" opacity=".95"/><circle cx="672" cy="522" r="5" fill="#f7933a" stroke="#ffffff" stroke-width="1.5" stroke-dasharray="2 1.5" opacity=".95"/><circle cx="692.8" cy="539.8" r="5" fill="#f7933a" stroke="#ffffff" stroke-width="1.5" stroke-dasharray="2 1.5" opacity=".95"/><circle cx="732.6" cy="558" r="5" fill="#f7933a" stroke="#ffffff" stroke-width="1.5" stroke-dasharray="2 1.5" opacity=".95"/><circle cx="712.8" cy="574" r="5" fill="#f7933a" stroke="#ffffff" stroke-width="1.5" stroke-dasharray="2 1.5" opacity=".95"/><circle cx="700.9" cy="488" r="7" fill="#ffffff"/><circle cx="700.9" cy="488" r="5.3" fill="#1d5fe8"/></svg><div style="position:absolute;left:11px;top:11px;width:48px;height:93px;border:2px solid rgba(0,0,0,.22);border-radius:5px;background:#fff;overflow:hidden">
<div style="position:absolute;left:0;top:45px;width:44px;height:1px;background:#ccc"></div>
<svg style="position:absolute;left:15px;top:16px" width="14" height="14" viewBox="0 0 14 14"><path d="M7 1v12M1 7h12" stroke="#111" stroke-width="2.6"/></svg>
<svg style="position:absolute;left:15px;top:61px" width="14" height="14" viewBox="0 0 14 14"><path d="M1 7h12" stroke="#111" stroke-width="2.8"/></svg>
</div>
</div>

<div class="card" style="top:734px;height:200px"></div>
<div class="abs" style="left:121px;top:758px;width:1262px;height:49px;background:#f9fafb;border-bottom:1px solid #e5e7eb"></div>
<div class="cb" style="top:770px"></div>
<div class="th" style="left:179px">ZONE</div>
<div class="th" style="left:474px;letter-spacing:.4px">PRIORITY</div>
<div class="th" style="left:645px;color:#1f2937">CUSTOMERS</div>
<div class="th" style="left:803px">DELIVERY</div>
<div class="th" style="left:948px">SERVICE</div>
<div class="th" style="left:1092px;letter-spacing:.65px">MIN ORDER</div>
<div class="th" style="left:1232px">STATUS</div>
<svg class="abs" style="left:219px;top:776px" width="11" height="11" viewBox="0 0 12 12" fill="none" stroke="#c0c4cc" stroke-width="1.2" stroke-linecap="round" stroke-linejoin="round"><path d="M3.5 10V2M1.5 4l2-2 2 2"/><path d="M8.5 2v8M6.5 8l2 2 2-2"/></svg>
<svg class="abs" style="left:540px;top:776px" width="11" height="11" viewBox="0 0 12 12" fill="none" stroke="#c0c4cc" stroke-width="1.2" stroke-linecap="round" stroke-linejoin="round"><path d="M3.5 10V2M1.5 4l2-2 2 2"/><path d="M8.5 2v8M6.5 8l2 2 2-2"/></svg>
<svg class="abs" style="left:870px;top:776px" width="11" height="11" viewBox="0 0 12 12" fill="none" stroke="#c0c4cc" stroke-width="1.2" stroke-linecap="round" stroke-linejoin="round"><path d="M3.5 10V2M1.5 4l2-2 2 2"/><path d="M8.5 2v8M6.5 8l2 2 2-2"/></svg>
<svg class="abs" style="left:1006px;top:776px" width="11" height="11" viewBox="0 0 12 12" fill="none" stroke="#c0c4cc" stroke-width="1.2" stroke-linecap="round" stroke-linejoin="round"><path d="M3.5 10V2M1.5 4l2-2 2 2"/><path d="M8.5 2v8M6.5 8l2 2 2-2"/></svg>
<svg class="abs" style="left:1172px;top:776px" width="11" height="11" viewBox="0 0 12 12" fill="none" stroke="#c0c4cc" stroke-width="1.2" stroke-linecap="round" stroke-linejoin="round"><path d="M3.5 10V2M1.5 4l2-2 2 2"/><path d="M8.5 2v8M6.5 8l2 2 2-2"/></svg>
<svg class="abs" style="left:1283px;top:776px" width="11" height="11" viewBox="0 0 12 12" fill="none" stroke="#c0c4cc" stroke-width="1.2" stroke-linecap="round" stroke-linejoin="round"><path d="M3.5 10V2M1.5 4l2-2 2 2"/><path d="M8.5 2v8M6.5 8l2 2 2-2"/></svg>
<svg class="abs" style="left:725.5px;top:776px" width="9" height="11" viewBox="0 0 9 12" fill="none" stroke="#9ca3af" stroke-width="1.2" stroke-linecap="round" stroke-linejoin="round"><path d="M4.5 2v8M2.5 8l2 2 2-2"/></svg>

<div class="abs" style="left:121px;top:867px;width:1262px;height:1px;background:#e5e7eb"></div>
<div class="cb" style="top:825px"></div>
<div class="abs" style="left:179px;top:831px;width:12px;height:12px;border-radius:50%;background:#22c55e"></div>
<div class="t" style="left:199px;top:822px;font-size:14.5px;color:#111827">Areguá</div>
<div class="t" style="left:199px;top:841px;font-size:12px;font-family:'Liberation Mono',monospace;color:#a3a8b0">aregua</div>
<div class="abs" style="left:499px;top:830px;width:27px;height:20px;border-radius:4px;background:#f3f4f6"></div>
<div class="t" style="left:505px;top:834px;font-size:12px;font-family:'Liberation Mono',monospace;color:#6b7280">P0</div>
<div class="num" style="left:682px;top:831px;width:51px">0</div>
<div class="num" style="left:781px;top:831px;width:100px">$8.50</div>
<div class="num" style="left:917px;top:831px;width:100px">$1.80</div>
<div class="num" style="left:1083px;top:831px;width:100px">$34.00</div>
<div class="abs" style="left:1236px;top:829px;width:54px;height:20px;border-radius:10px;background:#dcfce7"></div>
<div class="t" style="left:1246px;top:833px;font-size:12.6px;color:#15803d">Active</div>
<svg class="abs" style="left:1347px;top:829px" width="16" height="16" viewBox="0 0 24 24" fill="none" stroke="#9ca3af" stroke-width="2" stroke-linecap="round" stroke-linejoin="round"><path d="M12 3H5a2 2 0 0 0-2 2v14a2 2 0 0 0 2 2h14a2 2 0 0 0 2-2v-7"/><path d="M18.375 2.625a1 1 0 0 1 3 3l-9.013 9.014a2 2 0 0 1-.853.505l-2.873.84a.5.5 0 0 1-.62-.62l.84-2.873a2 2 0 0 1 .506-.852z"/></svg>

<div class="cb" style="top:886px"></div>
<div class="abs" style="left:179px;top:892px;width:12px;height:12px;border-radius:50%;background:#dc2626"></div>
<div class="t" style="left:199px;top:883px;font-size:14.5px;color:#111827">Asunción</div>
<div class="abs" style="left:499px;top:891px;width:27px;height:20px;border-radius:4px;background:#f3f4f6"></div>
<div class="t" style="left:505px;top:895px;font-size:12px;font-family:'Liberation Mono',monospace;color:#6b7280">P0</div>
<div class="num" style="left:682px;top:890px;width:51px">0</div>
<div class="num" style="left:781px;top:890px;width:100px">$5.00</div>
<div class="num" style="left:917px;top:890px;width:100px">Free</div>
<div class="num" style="left:1083px;top:890px;width:100px">$20.00</div>
<div class="abs" style="left:1236px;top:890px;width:54px;height:20px;border-radius:10px;background:#dcfce7"></div>
<div class="t" style="left:1246px;top:894px;font-size:12.6px;color:#15803d">Active</div>
<svg class="abs" style="left:1347px;top:888px" width="16" height="16" viewBox="0 0 24 24" fill="none" stroke="#9ca3af" stroke-width="2" stroke-linecap="round" stroke-linejoin="round"><path d="M12 3H5a2 2 0 0 0-2 2v14a2 2 0 0 0 2 2h14a2 2 0 0 0 2-2v-7"/><path d="M18.375 2.625a1 1 0 0 1 3 3l-9.013 9.014a2 2 0 0 1-.853.505l-2.873.84a.5.5 0 0 1-.62-.62l.84-2.873a2 2 0 0 1 .506-.852z"/></svg>

</body></html>
